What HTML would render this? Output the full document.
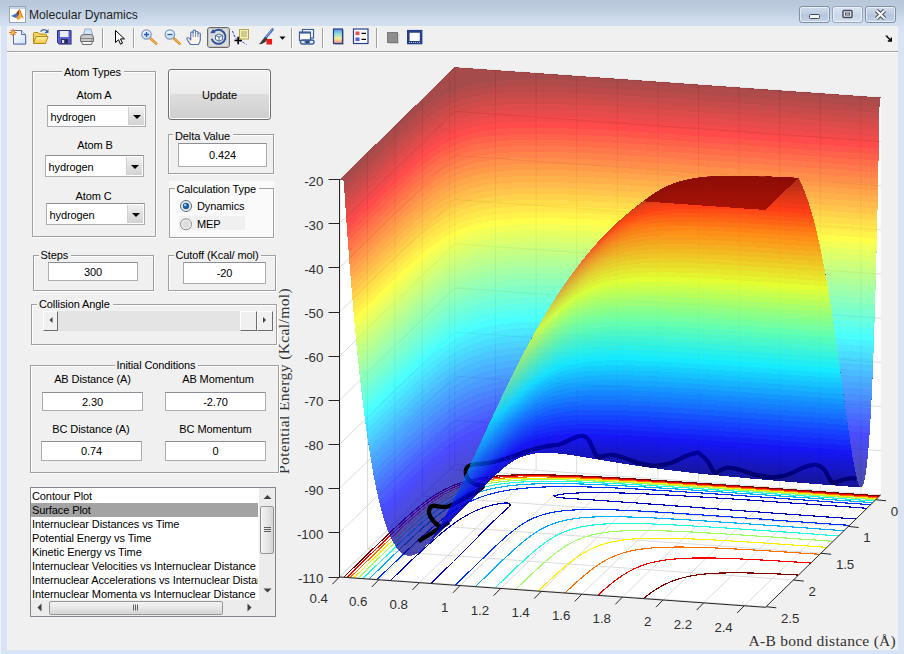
<!DOCTYPE html>
<html>
<head>
<meta charset="utf-8">
<title>Molecular Dynamics</title>
<style>
html,body{margin:0;padding:0;}
body{width:904px;height:654px;overflow:hidden;position:relative;background:#d8e4f3;box-shadow:inset 1px 0 0 #eef3fa;font-family:"Liberation Sans",sans-serif;font-size:11px;letter-spacing:-0.1px;color:#000;}
#titlebar{position:absolute;left:0;top:0;width:904px;height:26px;background:linear-gradient(#b7c6d9 0px,#bccbde 8px,#cbd9ea 18px,#d3e0f0 26px);}
#title{position:absolute;left:29px;top:7.500px;font-size:12.1px;color:#1e1e1e;white-space:nowrap;letter-spacing:0px;}
.wbtn{position:absolute;top:6px;height:15px;width:29px;border:1px solid #7f8fa8;border-radius:3px;background:linear-gradient(#d0dcec,#bccbe0 50%,#b4c4dc 51%,#c6d4e8);box-shadow:inset 0 0 0 1px rgba(255,255,255,.55);}
#content{position:absolute;left:7px;top:26px;width:891px;height:624px;background:#f0f0f0;overflow:hidden;}
#tbline{position:absolute;left:0;top:25px;width:891px;height:1px;background:#a0a0a0;}
#tbline2{position:absolute;left:0;top:26px;width:891px;height:1px;background:#ffffff;}
.abs{position:absolute;}
.panel{position:absolute;border:1px solid #a0a0a0;box-sizing:border-box;box-shadow:1px 1px 0 #fff,inset 1px 1px 0 #fff;}
.ptitle{position:absolute;top:-6px;background:#f0f0f0;padding:0 3px 0 2px;white-space:nowrap;line-height:13px;height:13px;z-index:2;}
.lbl{position:absolute;white-space:nowrap;text-align:center;line-height:13px;}
.edit{position:absolute;box-sizing:border-box;background:#fff;border:1px solid #abadb3;border-top-color:#8e8f95;text-align:center;white-space:nowrap;}
.combo{position:absolute;box-sizing:border-box;background:#fff;border:1px solid #abadb3;border-top-color:#8e8f95;height:22px;line-height:22.500px;padding-left:2.500px;white-space:nowrap;}
.combo i{position:absolute;right:1px;top:1px;width:15px;height:18px;background:linear-gradient(#f2f2f2,#e0e0e0 50%,#d2d2d2);border-left:1px solid #d0d0d0;}
.combo i:after{content:"";position:absolute;left:3.5px;top:7.5px;border:4px solid transparent;border-top:4px solid #000;border-bottom:0;}
#list div{height:14px;line-height:15px;white-space:nowrap;padding-left:1px;}
</style>
</head>
<body>
<div id="titlebar">
  <svg class="abs" style="left:9px;top:6px" width="18" height="18" viewBox="0 0 18 18">
    <rect x="0.5" y="0.5" width="16" height="16" fill="#fdfdfd" stroke="#9aa7ba"/>
    <rect x="1" y="1" width="15" height="2" fill="#c7d3e6"/>
    <path d="M2 10 L7 7.5 L9.5 9.5 L7 12 Z" fill="#3b6ec4"/>
    <path d="M7 7.5 L10.5 3 L12 7 L9.5 9.5 Z" fill="#7b3a1e"/>
    <path d="M10.500 3 C11.5 3 13 9 15 13 L12.5 11 L9.5 14 L7 12 L9.5 9.500 Z" fill="#e8792a"/>
    <path d="M10.5 3 C11.3 5 12 9 12.500 11 L9.5 14 L8.2 13 C10 11 10.5 7 10.5 3Z" fill="#f5b33a"/>
  </svg>
  <div id="title">Molecular Dynamics</div>
  <div class="wbtn" style="left:799px"><svg width="29" height="15"><rect x="9.5" y="7.5" width="10" height="4" rx="1" fill="#f4f4f4" stroke="#454a58"/></svg></div>
  <div class="wbtn" style="left:832px;background:linear-gradient(#d9e4f2,#cddaeb 50%,#c6d5e8 51%,#d6e2f1);border-color:#97a6bd"><svg width="29" height="15"><rect x="10" y="3.500" width="9" height="7" rx="1" fill="#e8e8e8" stroke="#454a58" stroke-width="1.4"/><rect x="12.5" y="6" width="4" height="2" fill="#fff" stroke="#454a58" stroke-width="1"/></svg></div>
  <div class="wbtn" style="left:865px"><svg width="29" height="15"><path d="M10.500 3.500l8 8M18.500 3.500l-8 8" stroke="#454a58" stroke-width="4.200" stroke-linecap="butt"/><path d="M10.500 3.500l8 8M18.500 3.500l-8 8" stroke="#f4f4f4" stroke-width="2.200" stroke-linecap="butt"/></svg></div>
</div>
<div id="content">
<div id="tbline"></div><div id="tbline2"></div>
<div id="pg" style="position:absolute;left:-7px;top:-26px;width:904px;height:654px">
<svg class="abs" style="left:0;top:0" width="904" height="654" viewBox="0 0 904 654" font-family="Liberation Sans, sans-serif">
<defs><clipPath id="cp"><rect x="7" y="53" width="891" height="597"/></clipPath></defs>
<g clip-path="url(#cp)">
<path d="M339.4 577 L454.8 464.5 L454.8 67.2 L339.4 179.7 Z" fill="#fff"/>
<path d="M454.8 464.5 L880.8 494.8 L880.8 97.5 L454.8 67.2 Z" fill="#fff"/>
<path d="M339.4 577 L765.4 607.3 L880.8 494.8 L454.8 464.5 Z" fill="#fff"/>
<path d="M339.4 577 L454.8 464.5 L454.8 67.2 M378.8 579.8 L495.5 467.3 L495.5 70 M419.4 582.7 L536.1 470.2 L536.1 72.9 M460 585.6 L576.7 473.1 L576.7 75.8 M500.6 588.5 L617.3 476 L617.3 78.7 M541.2 591.4 L657.9 478.9 L657.9 81.6 M581.8 594.2 L698.5 481.7 L698.5 84.4 M622.4 597.1 L739.1 484.6 L739.1 87.3 M663 600 L779.7 487.5 L779.7 90.2 M703.6 602.9 L820.3 490.4 L820.3 93.1 M744.2 605.8 L860.9 493.3 L860.9 96 M875.8 499.7 L449.8 469.4 L449.8 72.1 M848.3 526.4 L422.3 496.1 L422.3 98.8 M820.9 553.2 L394.9 522.9 L394.9 125.6 M793.5 580 L367.5 549.7 L367.5 152.4 M766 606.7 L340 576.4 L340 179.1 M339.4 577 L454.8 464.5 L880.8 494.8 M339.4 532.9 L454.8 420.4 L880.8 450.7 M339.4 488.7 L454.8 376.2 L880.8 406.5 M339.4 444.6 L454.8 332.1 L880.8 362.4 M339.4 400.4 L454.8 287.9 L880.8 318.2 M339.4 356.3 L454.8 243.8 L880.8 274.1 M339.4 312.1 L454.8 199.6 L880.8 229.9 M339.4 268 L454.8 155.5 L880.8 185.8 M339.4 223.8 L454.8 111.3 L880.8 141.6 M339.4 179.7 L454.8 67.2 L880.8 97.5" fill="none" stroke="#dcdcdc" stroke-width="1"/>
<path d="M867 508.3L862.7 508L858.4 507.6L854.1 507.3L849.9 507L845.6 506.7L841.3 506.4L837 506.1L832.7 505.8L828.4 505.5L824.1 505.2L819.9 504.9L815.6 504.6L811.3 504.3L807 504L802.7 503.7L798.4 503.5L794.1 503.2L789.8 502.9L785.6 502.6L781.3 502.3L777 502L772.7 501.7L768.4 501.4L764.1 501.1L759.8 500.8L755.5 500.5L751.2 500.2L746.9 499.9L742.6 499.7L738.3 499.4L734 499.1L729.7 498.8L725.4 498.5L721.1 498.2L716.8 498L712.5 497.7L708.1 497.4L703.8 497.1L699.5 496.9L695.2 496.6L690.9 496.3L686.5 496.1L682.2 495.8L677.9 495.6L673.5 495.3L669.2 495.1L664.8 494.9L660.5 494.6L656.1 494.4L651.7 494.2L647.9 494L643 493.8L638.6 493.6L634.1 493.4L629.7 493.3L625.3 493.1L620.8 493L616.4 492.8L613.4 492.8L609.6 492.7L605.1 492.6L600.5 492.6L596 492.6L591.3 492.6L586.7 492.7L582 492.8L577.2 493L572.3 493.3L567.3 493.6L563.2 494L560.2 494.4L556.6 495.1L554.1 495.8L556.6 497.3L560.8 497.8L565 498.1L569.3 498.4L573.6 498.7L577.9 499L582.2 499.3L586.5 499.6L590.8 499.8L595.1 500.1L599.4 500.4L603.7 500.7L608 501L612.3 501.3L616.6 501.6L620.8 501.9L625.1 502.2L629.4 502.5L633.7 502.8L638 503.1L642.2 503.5L646.5 503.8L650.8 504.1L655 504.4L659.3 504.7L663.6 505L667.9 505.3L672.1 505.7L676.4 506L680.7 506.3L684.9 506.6L689.2 506.9L693.5 507.2L697.8 507.5L702 507.9L706.3 508.2L710.6 508.5L714.8 508.8L719.1 509.1L723.4 509.4L727.7 509.7L731.9 510.1L736.2 510.4L740.5 510.7L744.8 511L749 511.3L753.3 511.6L757.6 511.9L761.9 512.2L766.1 512.5L770.4 512.9L774.7 513.2L779 513.5L783.2 513.8L787.5 514.1L791.8 514.4L796.1 514.7L800.3 515L804.6 515.3L808.9 515.6L813.2 515.9L817.4 516.3L821.7 516.6L826 516.9L830.3 517.2L834.6 517.5L838.8 517.8L843.1 518.1L847.4 518.4L851.7 518.7L855.9 519 M431.1 583.5L432.9 581.8L434.6 580.1L436.3 578.4L438 576.7L439.8 575L441.5 573.3L443.2 571.6L444.9 569.9L446.6 568.2L448.3 566.6L450 564.9L451.7 563.2L453.5 561.5L455.2 559.8L456.9 558.1L458.6 556.4L460.3 554.7L462 553L463.7 551.3L465.4 549.6L467 547.9L468.7 546.2L470.4 544.5L472.1 542.8L473.8 541.1L475.5 539.4L477.2 537.7L478.8 536L480.5 534.3L482.2 532.6L483.9 530.9L485.6 529.2L487.3 527.5L489 525.8L490.7 524.1L492.4 522.4L494.1 520.7L495.9 519L497.7 517.3L499.5 515.6L501.3 513.9L503.1 512.2L505 510.5L506.9 508.8L508.7 507.2L510.3 505.4L509.4 503.1L504.8 503L500.5 503.5L497.9 504L493.9 504.7L491.5 505.3L488 506.3L484.8 507.3L481.9 508.3L479.3 509.3L476.7 510.3L474.4 511.4L472.3 512.4L470.1 513.5L468.1 514.6L465.2 516.2L462.5 517.8L459.9 519.5L457.4 521.1L455 522.7L452.7 524.4L450.5 526.1L448.4 527.7L446.2 529.4L444.1 531.1L442.1 532.7L440.1 534.4L438.1 536.1L436.2 537.8L434.3 539.5L432.3 541.2L430.5 542.8L428.6 544.5L426.7 546.2L424.9 547.9L423 549.6L421.2 551.3L419.4 553L417.5 554.7L415.7 556.3L413.9 558L412.1 559.7L410.4 561.4L408.6 563.1L406.8 564.8L405 566.5L403.3 568.2L401.5 569.9L399.7 571.6L398 573.3L396.2 575L394.4 576.7L392.7 578.4L390.9 580.1L390.3 580.6" fill="none" stroke="#0000bf" stroke-width="1.15" shape-rendering="crispEdges"/>
<path d="M870.6 504.7L866.4 504.4L862.1 504.1L857.8 503.8L853.5 503.5L849.2 503.2L844.9 502.9L840.7 502.6L836.4 502.3L832.1 502L827.8 501.7L823.5 501.4L819.2 501.1L814.9 500.8L810.7 500.5L806.4 500.2L802.1 499.9L797.8 499.6L793.5 499.3L789.2 499L784.9 498.7L780.7 498.4L776.4 498.1L772.1 497.8L767.8 497.5L763.5 497.2L759.2 496.9L754.9 496.6L750.6 496.3L746.3 496L742.1 495.7L737.8 495.4L733.5 495.1L729.2 494.8L724.9 494.5L720.6 494.2L716.3 494L712 493.7L707.7 493.4L703.5 493.1L699.1 492.8L694.8 492.5L690.5 492.3L686.2 492L681.8 491.7L677.5 491.4L673.2 491.2L668.9 490.9L664.6 490.6L660.2 490.4L655.9 490.1L651.6 489.9L647.2 489.6L642.9 489.4L638.6 489.1L634.2 488.9L629.8 488.7L625.5 488.5L621.1 488.2L616.7 488L612.3 487.8L607.9 487.7L603.5 487.5L599.1 487.3L594.6 487.2L590.2 487L585.7 486.9L581.2 486.8L576.7 486.7L572.2 486.7L567.6 486.6L563 486.6L558.4 486.7L553.9 486.7L549 486.8L544.3 487L539.5 487.2L534.6 487.4L529.7 487.8L524.7 488.2L520.6 488.6L517.3 489L514.3 489.3L511.6 489.7L508.9 490.1L506.1 490.6L503.3 491.1L500.5 491.6L497.5 492.3L494.5 493L491.4 493.8L488.1 494.7L484.8 495.7L481.8 496.7L479 497.8L476.4 498.8L473.9 499.8L471.5 500.9L469.3 501.9L467.2 503L465.1 504.1L463.1 505.1L460.3 506.7L457.6 508.4L455.1 510L452.6 511.7L450.2 513.3L448 515L445.7 516.6L443.5 518.3L441.4 520L439.4 521.6L437.3 523.3L435.3 525L433.3 526.7L431.4 528.3L429.5 530L427.6 531.7L425.7 533.4L423.8 535.1L421.9 536.8L420.1 538.5L418.3 540.1L416.4 541.8L414.6 543.5L412.8 545.2L411 546.9L409.2 548.6L407.5 550.3L405.7 552L403.9 553.7L402.1 555.4L400.3 557.1L398.6 558.8L396.8 560.5L395 562.2L393.3 563.8L391.5 565.5L389.8 567.2L388 568.9L386.3 570.6L384.5 572.3L382.8 574L381 575.7L379.3 577.4L377.5 579.1L376.9 579.7 M455.3 585.2L457 583.5L458.7 581.8L460.5 580.2L462.2 578.5L463.9 576.8L465.7 575.1L467.4 573.4L469.1 571.7L470.9 570L472.6 568.3L474.4 566.6L476.1 564.9L477.8 563.2L479.6 561.5L481.3 559.8L483.1 558.1L484.8 556.4L486.6 554.7L488.4 553L490.1 551.3L491.9 549.6L493.7 547.9L495.5 546.2L497.3 544.6L499.1 542.9L501 541.2L502.8 539.5L504.7 537.8L506.7 536.1L508.6 534.4L510.7 532.8L512.7 531.1L514.9 529.4L517.1 527.8L519.4 526.1L521.9 524.5L524.5 522.8L527.3 521.2L529.3 520.1L531.5 519.1L533.8 518L536.3 517L539 516L542 515L545.4 514L549.2 513.1L552.7 512.3L555.5 511.8L558.3 511.4L560.9 511.1L565.3 510.6L568.6 510.3L573.6 510L578.4 509.7L583.1 509.6L587.8 509.5L592.4 509.5L597 509.5L601.5 509.6L606 509.7L610.5 509.8L614.9 509.9L619.3 510.1L623.8 510.3L628.1 510.5L632.5 510.7L636.9 510.9L641.2 511.1L645.6 511.4L649.9 511.6L654.3 511.9L658.6 512.1L662.9 512.4L667.2 512.7L671.5 512.9L675.9 513.2L680.2 513.5L684.5 513.8L688.8 514.1L693.1 514.4L697.4 514.7L701.6 514.9L705.9 515.2L710.2 515.5L714.5 515.8L718.8 516.1L723.1 516.4L727.4 516.7L731.7 517L736 517.3L740.2 517.6L744.5 517.9L748.8 518.2L753.1 518.5L757.4 518.8L761.7 519.1L765.9 519.4L770.2 519.8L774.5 520.1L778.8 520.4L783.1 520.7L787.3 521L791.6 521.3L795.9 521.6L800.2 521.9L804.5 522.2L808.7 522.5L813 522.8L817.3 523.1L821.6 523.4L825.9 523.7L830.2 524L834.4 524.3L838.7 524.6L843 524.9L847.3 525.2L849.4 525.4" fill="none" stroke="#0030ff" stroke-width="1.15" shape-rendering="crispEdges"/>
<path d="M872.8 502.6L868.5 502.3L864.3 502L860 501.7L855.7 501.4L851.4 501.1L847.1 500.8L842.8 500.5L838.6 500.2L834.3 499.9L830 499.5L825.7 499.2L821.4 498.9L817.1 498.6L812.9 498.3L808.6 498L804.3 497.7L800 497.4L795.7 497.1L791.4 496.8L787.1 496.5L782.9 496.2L778.6 495.9L774.3 495.6L770 495.3L765.7 495L761.4 494.7L757.1 494.4L752.9 494.1L748.6 493.8L744.3 493.5L740 493.2L735.7 493L731.4 492.7L728.4 492.5L725 492.2L720.7 491.9L716.4 491.6L712.1 491.3L707.8 491.1L703.5 490.8L699.2 490.5L694.9 490.2L690.6 489.9L686.3 489.6L682 489.4L677.7 489.1L673.3 488.8L669 488.5L664.7 488.2L660.4 488L656.1 487.7L651.8 487.4L647.4 487.2L643.1 486.9L638.8 486.7L634.4 486.4L630.1 486.2L625.7 486L621.4 485.7L617 485.5L612.6 485.3L608.3 485.1L603.9 484.9L599.5 484.7L595.1 484.5L590.6 484.3L586.7 484.2L581.8 484L577.3 483.9L572.8 483.8L568.3 483.7L563.8 483.6L559.2 483.6L554.7 483.6L550 483.6L545.4 483.7L540.7 483.7L536 483.9L532.8 484L528.8 484.2L523.9 484.5L519 484.8L515.3 485.2L511.8 485.5L508.6 485.9L506 486.3L503.3 486.6L500.6 487.1L497.8 487.6L494.9 488.1L492 488.7L489.1 489.4L485.9 490.2L482.6 491.1L479.3 492.1L475.9 493.3L473.1 494.3L470.5 495.3L468.1 496.4L465.8 497.4L463.6 498.5L461.5 499.6L459.5 500.6L457.5 501.7L454.8 503.3L452.8 504.5L450.4 506L448 507.7L445.6 509.3L443.3 511L441.1 512.7L438.9 514.3L436.8 516L434.8 517.6L432.7 519.3L430.7 521L428.7 522.7L426.8 524.4L424.8 526.1L422.9 527.7L421.1 529.4L419.2 531.1L417.3 532.8L415.5 534.5L413.7 536.2L411.8 537.9L410 539.6L408.5 541L406.4 542.9L404.6 544.6L402.8 546.3L401.1 548L399.3 549.7L397.5 551.4L395.8 553.1L394 554.8L392.2 556.5L390.5 558.2L388.7 559.9L386.9 561.6L385.2 563.3L383.4 565L381.7 566.7L379.9 568.4L378.2 570.1L376.4 571.7L374.7 573.4L372.9 575.1L371.2 576.8L369.4 578.5L368.9 579.1 M475.3 586.7L477 585L478.8 583.3L480.5 581.6L482.2 579.9L484 578.2L485.7 576.5L487.5 574.8L489.2 573.1L491 571.4L492.7 569.7L494.5 568L496.2 566.3L498 564.6L499.8 562.9L501.6 561.2L503.3 559.5L505.1 557.9L506.9 556.2L508.8 554.5L510.6 552.8L512.4 551.1L514.3 549.4L516.2 547.7L518.1 546L520.1 544.4L522 542.7L524.1 541L526.2 539.3L528.3 537.7L530.6 536L532.9 534.4L535.3 532.7L537.9 531.1L540.7 529.4L542.7 528.4L544.8 527.3L547 526.3L549.4 525.2L551.9 524.2L554.8 523.2L557.9 522.2L561.3 521.2L565.3 520.3L568.2 519.7L571 519.2L573.7 518.8L576.4 518.4L581.6 517.8L585.4 517.5L589.1 517.2L593.9 517L598.7 516.8L603.4 516.7L607.9 516.6L612.6 516.6L617.1 516.7L621.7 516.8L626.2 516.9L629.5 517L632.9 517.1L637.3 517.2L641.7 517.4L646.1 517.6L650.5 517.8L654.9 518L659.2 518.2L663.6 518.5L667.9 518.7L672.3 519L676.6 519.2L680.9 519.5L685.3 519.7L689.6 520L693.9 520.3L698.2 520.6L702.5 520.8L706.8 521.1L711.1 521.4L715.4 521.7L719.7 522L724 522.3L728.3 522.6L732.6 522.8L736.9 523.1L741.2 523.4L745.5 523.7L749.8 524L754 524.3L758.3 524.6L762.6 524.9L766.9 525.2L771.2 525.5L775.5 525.8L779.8 526.1L784 526.4L788.3 526.7L792.6 527L796.9 527.3L801.2 527.6L805.5 527.9L809.7 528.2L814 528.6L818.3 528.9L822.6 529.2L826.9 529.5L831.1 529.8L835.4 530.1L839.7 530.4L844 530.7" fill="none" stroke="#00afff" stroke-width="1.15" shape-rendering="crispEdges"/>
<path d="M874.5 501L870.2 500.7L865.9 500.4L861.6 500.1L857.3 499.8L853.1 499.5L848.8 499.2L844.5 498.9L840.2 498.5L835.9 498.2L831.6 497.9L827.4 497.6L823.1 497.3L818.8 497L814.5 496.7L810.2 496.4L805.9 496.1L801.7 495.8L797.4 495.5L793.1 495.2L788.8 494.9L784.5 494.6L780.2 494.3L775.9 494L771.7 493.7L767.4 493.4L763.1 493.1L758.8 492.8L754.5 492.5L750.2 492.2L745.9 491.9L741.6 491.6L737.4 491.3L733.1 491L728.8 490.7L724.5 490.4L720.2 490.2L715.9 489.9L711.6 489.6L707.3 489.3L703 489L698.7 488.7L694.4 488.4L690.1 488.1L685.8 487.8L681.5 487.6L677.2 487.3L672.9 487L668.6 486.7L664.3 486.4L660 486.2L655.6 485.9L651.3 485.6L647 485.4L642.7 485.1L638.8 484.9L634 484.6L629.7 484.3L625.3 484.1L621 483.9L616.6 483.6L612.3 483.4L607.9 483.2L603.5 483L599.2 482.8L594.8 482.6L590.4 482.4L585.9 482.2L582.4 482.1L579.3 482L574.8 481.8L570.4 481.7L565.9 481.6L561.4 481.5L556.9 481.4L552.3 481.4L547.7 481.4L543.1 481.4L539.6 481.4L536.1 481.5L533 481.6L529 481.7L524.2 481.9L519.3 482.2L514.4 482.6L509.7 483L506.7 483.3L503.1 483.7L500.1 484.1L497.4 484.5L494.8 484.9L490.4 485.7L487.9 486.3L484.5 487L482 487.7L478.5 488.6L475.3 489.6L472.3 490.6L469.5 491.6L466.9 492.7L464.4 493.7L462.1 494.7L459.9 495.8L457.8 496.9L455.7 497.9L453.8 499L451 500.6L448.4 502.3L445.8 503.9L443.4 505.5L441 507.2L438.8 508.9L436.6 510.5L434.4 512.2L432.3 513.9L430.3 515.5L428.2 517.2L426.2 518.9L424.3 520.6L422.4 522.2L420.4 523.9L418.6 525.6L416.7 527.3L414.8 529L413 530.7L411.1 532.4L409.3 534.1L407.5 535.7L405.7 537.4L403.9 539.1L402.1 540.8L400.3 542.5L398.5 544.2L396.7 545.9L395 547.6L393.2 549.3L391.4 551L389.6 552.7L388 554.2L386.1 556.1L384.4 557.8L382.6 559.4L380.9 561.1L379.1 562.8L377.4 564.5L375.6 566.2L373.9 567.9L372.1 569.6L370.4 571.3L368.6 573L366.9 574.7L365.1 576.4L363.4 578.1L362.8 578.7 M494.9 588.1L496.7 586.4L498.4 584.7L500.2 583L501.9 581.3L503.7 579.6L505.4 577.9L507.2 576.2L508.9 574.5L510.7 572.8L512.5 571.1L514.3 569.4L516 567.7L517.8 566L519.6 564.3L521.5 562.7L523.3 561L525.1 559.3L527 557.6L528.9 555.9L530.8 554.2L532.7 552.5L534.7 550.9L536.7 549.2L538.8 547.5L540.9 545.8L542.8 544.4L544.6 543.1L547 541.4L549.4 539.8L552 538.1L554.8 536.5L556.8 535.4L558.9 534.4L561 533.3L563.5 532.3L566 531.2L568.8 530.2L571.9 529.2L575.3 528.3L578.6 527.5L581.2 526.9L584.4 526.3L587.2 525.8L589.9 525.4L594.8 524.8L597.7 524.5L602.4 524.1L607 523.9L610 523.7L614.7 523.6L618.7 523.5L621.7 523.4L626.4 523.4L630.9 523.4L635.5 523.5L640 523.6L644.4 523.7L648.9 523.8L653.3 524L657.7 524.2L662.1 524.4L666.5 524.6L670.9 524.8L675.3 525L679.6 525.2L684 525.5L688.3 525.7L692.6 526L697 526.2L701.3 526.5L705.6 526.7L709.9 527L714.3 527.3L718.6 527.6L722.9 527.8L727.2 528.1L731.5 528.4L735.8 528.7L740.1 529L744.4 529.3L748.7 529.6L753 529.9L757.2 530.2L761.5 530.5L765.8 530.7L770.1 531L774.4 531.3L778.7 531.6L783 531.9L787.3 532.2L791.6 532.5L795.8 532.8L800.1 533.1L804.4 533.4L808.7 533.7L813 534L817.3 534.4L821.5 534.7L825.8 535L830.1 535.3L834.4 535.6L838.7 535.9" fill="none" stroke="#20ffdf" stroke-width="1.15" shape-rendering="crispEdges"/>
<path d="M875.8 499.7L871.5 499.4L867.2 499.1L863 498.8L858.7 498.5L854.4 498.2L850.1 497.9L845.8 497.5L841.5 497.2L837.3 496.9L833 496.6L828.7 496.3L824.4 496L820.1 495.7L815.8 495.4L811.6 495.1L807.3 494.8L803 494.5L798.7 494.2L794.4 493.9L790.1 493.6L785.9 493.3L781.6 493L777.3 492.7L773 492.4L768.7 492.1L764.4 491.8L760.1 491.5L755.9 491.2L751.6 490.9L747.3 490.6L743 490.3L738.7 490L734.4 489.7L730.1 489.4L725.8 489.1L721.5 488.8L717.3 488.5L713 488.2L708.7 488L704.4 487.7L700.1 487.4L695.8 487.1L691.5 486.8L687.2 486.5L682.9 486.2L678.6 485.9L674.3 485.6L670 485.4L665.7 485.1L661.4 484.8L657 484.5L652.7 484.3L648.4 484L644.1 483.7L639.8 483.5L635.4 483.2L631.1 482.9L626.8 482.7L622.4 482.4L618.1 482.2L613.7 482L609.4 481.7L605 481.5L600.6 481.3L596.3 481.1L591.9 480.9L587.5 480.7L583.1 480.5L578.6 480.4L574.2 480.2L569.8 480.1L565.3 479.9L560.8 479.8L556.3 479.7L551.8 479.7L548.4 479.6L544.9 479.6L540.3 479.6L535.7 479.7L532.6 479.7L528.7 479.8L523.9 480L520.9 480.1L516.6 480.3L511.7 480.7L507.7 481L504.1 481.3L500.7 481.7L497.6 482.1L494.8 482.5L492.1 482.9L488 483.6L485.1 484.2L482.1 484.9L479.1 485.6L475.9 486.5L472.6 487.4L469.2 488.6L466.4 489.6L463.7 490.6L461.5 491.5L458.9 492.7L456.7 493.7L454.6 494.8L452.5 495.9L450.6 497L447.8 498.6L445.1 500.2L442.6 501.8L440.2 503.5L437.8 505.1L435.6 506.8L433.4 508.5L431.2 510.1L429.1 511.8L427 513.5L425 515.2L423 516.8L421.1 518.5L419.1 520.2L417.2 521.9L415.3 523.6L413.5 525.2L411.6 526.9L409.7 528.6L407.9 530.3L406.1 532L404.3 533.7L402.5 535.4L400.7 537.1L398.9 538.8L397.1 540.5L395.3 542.2L393.5 543.8L391.8 545.5L390 547.2L388.2 548.9L386.5 550.6L384.7 552.3L382.9 554L381.2 555.7L379.4 557.4L377.7 559.1L375.9 560.8L374.2 562.5L372.4 564.2L370.7 565.9L368.9 567.6L367.2 569.3L365.4 571L363.7 572.7L361.9 574.4L360.2 576.1L358.4 577.7L357.9 578.3 M515.5 589.5L517.3 587.8L519 586.1L520.8 584.4L522.6 582.7L524.3 581.1L526.1 579.4L527.9 577.7L529.7 576L531.5 574.3L533.3 572.6L535.1 570.9L536.9 569.2L538.8 567.5L540.6 565.8L542.5 564.1L544.4 562.5L546.3 560.8L548.3 559.1L550.3 557.4L552.3 555.7L554.4 554.1L556.6 552.4L558.8 550.8L561.1 549.1L563.6 547.5L566.1 545.8L568.9 544.2L570.8 543.1L572.8 542L575 541L577.2 540L579.8 538.9L582.4 537.9L584.8 537.1L588.2 536L591.4 535.1L594.1 534.5L597.4 533.8L600.2 533.2L603 532.8L605.6 532.4L609.6 531.9L613.1 531.6L616 531.3L620.9 531L625.7 530.7L630.5 530.6L635.2 530.5L639.8 530.4L644.4 530.4L649 530.5L653.5 530.6L658 530.7L661.5 530.8L664.7 530.9L669.1 531L673.5 531.2L677.9 531.4L682.3 531.6L686.7 531.8L691.1 532L695.4 532.2L699.8 532.5L704.1 532.7L708.4 533L712.8 533.2L717.1 533.5L721.4 533.7L725.7 534L730.1 534.3L734.4 534.5L738.7 534.8L743 535.1L747.3 535.4L751.6 535.7L755.9 536L760.2 536.3L764.5 536.5L768.8 536.8L773.1 537.1L777.4 537.4L781.6 537.7L785.9 538L790.2 538.3L794.5 538.6L798.8 538.9L803.1 539.2L807.4 539.5L811.7 539.8L815.9 540.1L820.2 540.4L824.5 540.7L828.8 541L833.1 541.3" fill="none" stroke="#9fff60" stroke-width="1.15" shape-rendering="crispEdges"/>
<path d="M876.9 498.6L872.7 498.3L868.4 498L864.1 497.7L859.8 497.3L855.5 497L851.2 496.7L847 496.4L842.7 496.1L838.4 495.8L834.1 495.5L829.8 495.2L825.6 494.9L821.3 494.6L817 494.3L812.7 494L808.4 493.7L804.1 493.4L799.9 493.1L795.6 492.8L791.3 492.5L787 492.2L782.7 491.9L778.4 491.6L774.1 491.3L769.9 491L765.6 490.7L761.3 490.4L757 490.1L752.7 489.8L748.4 489.5L744.1 489.2L739.9 488.9L735.6 488.6L731.3 488.3L727 488L722.7 487.7L718.4 487.4L714.1 487.1L709.8 486.8L705.5 486.5L701.2 486.2L696.9 485.9L692.7 485.7L689.7 485.5L686.2 485.2L681.9 484.9L677.6 484.6L673.3 484.4L669 484.1L664.7 483.8L660.4 483.5L656.1 483.2L651.8 483L647.4 482.7L643.1 482.4L638.8 482.2L634.5 481.9L630.2 481.6L625.8 481.4L621.5 481.1L617.1 480.9L612.8 480.7L608.4 480.4L604.1 480.2L599.7 480L595.3 479.8L591 479.5L587.1 479.4L582.2 479.2L577.8 479L573.3 478.8L568.9 478.7L564.4 478.5L560 478.4L555.5 478.3L551 478.2L546.4 478.2L541.8 478.2L537.3 478.2L532.6 478.2L528.9 478.3L525.6 478.3L522.6 478.4L518.4 478.6L513.6 478.8L508.7 479.1L504 479.5L501.1 479.8L497.1 480.2L494.1 480.6L491.2 481L488.6 481.5L485 482.1L482.1 482.7L479.4 483.2L476.1 484L472.9 484.9L470.4 485.6L467.3 486.6L464.4 487.6L461.7 488.6L459.2 489.7L456.8 490.7L454.5 491.8L452.4 492.8L450.3 493.9L448.3 495L445.5 496.6L442.8 498.2L440.3 499.9L437.8 501.5L435.4 503.2L433.2 504.8L430.9 506.5L428.8 508.1L426.9 509.6L424.6 511.5L422.6 513.2L420.6 514.8L418.6 516.5L416.7 518.2L414.8 519.9L412.9 521.6L411 523.3L409.1 524.9L407.3 526.6L405.4 528.3L403.6 530L401.8 531.7L400 533.4L398.2 535.1L396.4 536.8L394.6 538.5L392.8 540.2L391.1 541.9L389.3 543.5L387.5 545.2L385.7 546.9L384 548.6L382.2 550.3L380.5 552L378.7 553.7L377 555.4L375.2 557.1L373.4 558.8L371.7 560.5L369.9 562.2L368.2 563.9L366.4 565.6L364.7 567.3L363 569L361.2 570.7L359.5 572.4L357.7 574.1L356 575.8L354.2 577.4L353.6 578 M538.3 591.1L540.1 589.5L541.9 587.8L543.6 586.1L545.4 584.4L547.2 582.7L549 581L550.8 579.3L552.7 577.6L554.5 575.9L556.4 574.2L558.2 572.5L560.1 570.9L562.1 569.2L564 567.5L566 565.8L568 564.1L570.1 562.5L572.3 560.8L574.5 559.1L576.8 557.5L579.2 555.8L581.7 554.2L584.4 552.6L587.2 551L589.3 549.9L591.4 548.8L593.7 547.8L596.2 546.7L598.8 545.7L601.7 544.7L604.9 543.7L608.5 542.8L611.9 542L614.7 541.4L617.7 540.9L620.4 540.4L623.1 540L628.3 539.4L632.8 539L635.8 538.8L640.7 538.5L645.5 538.3L650.2 538.2L654.6 538.2L659.5 538.1L663.1 538.2L666.3 538.2L670.8 538.3L674.2 538.3L677.6 538.4L682 538.6L686.5 538.7L689.7 538.8L693.1 539L697.5 539.2L701.9 539.4L706.2 539.6L710.6 539.8L715 540L719.3 540.3L723.7 540.5L728 540.8L732.3 541L736.6 541.3L741 541.6L745.3 541.8L749.6 542.1L753.9 542.4L758.2 542.7L762.5 542.9L766.8 543.2L771.1 543.5L775.4 543.8L779.7 544.1L784 544.4L788.3 544.7L792.6 545L796.9 545.2L799.7 545.4L803.3 545.7L807.6 546L811.9 546.3L816.2 546.6L820.5 546.9L824.8 547.2L826.9 547.3" fill="none" stroke="#ffef00" stroke-width="1.15" shape-rendering="crispEdges"/>
<path d="M877.9 497.6L873.7 497.3L869.4 497L865.1 496.7L860.8 496.4L856.5 496.1L852.3 495.8L848 495.5L843.7 495.2L839.4 494.9L835.1 494.5L830.8 494.2L826.6 493.9L822.3 493.6L818 493.3L813.7 493L809.4 492.7L805.1 492.4L800.9 492.1L796.6 491.8L792.3 491.5L788 491.2L783.7 490.9L779.4 490.6L775.2 490.3L770.9 490L767.2 489.8L762.3 489.4L758 489.1L753.7 488.8L749.4 488.5L745.2 488.2L740.9 487.9L736.6 487.6L732.3 487.3L728 487L723.7 486.7L719.4 486.4L715.1 486.1L710.8 485.8L706.5 485.5L702.3 485.2L698 485L693.7 484.7L689.4 484.4L685.1 484.1L680.8 483.8L676.5 483.5L672.2 483.2L667.9 482.9L663.6 482.7L659.3 482.4L654.9 482.1L650.6 481.8L646.3 481.6L642 481.3L637.7 481L633.4 480.7L629 480.5L625.1 480.3L620.4 480L616 479.7L611.7 479.5L607.3 479.3L603 479L598.6 478.8L594.3 478.6L590.1 478.4L585.5 478.2L581.1 478L576.7 477.8L572.3 477.6L567.8 477.5L563.4 477.3L558.9 477.2L555.1 477.1L549.9 477L545.4 476.9L540.9 476.9L536.3 476.9L531.7 476.9L527.4 476.9L522.3 477.1L517.6 477.2L512.7 477.4L507.9 477.7L502.9 478.1L498.2 478.5L495.2 478.8L491.8 479.3L488.9 479.7L486.2 480.1L481.6 480.9L479.1 481.4L475.8 482.1L473.1 482.8L469.5 483.7L466.3 484.7L463.3 485.7L460.5 486.7L457.9 487.8L455.4 488.8L453.1 489.9L450.9 490.9L448.8 492L446.8 493L444.8 494.1L442 495.7L439.6 497.3L437.7 498.5L435.3 500.1L432.9 501.8L430.6 503.4L428.4 505.1L426.2 506.7L424.1 508.4L422.1 510.1L420 511.8L418 513.4L416.1 515.1L414.1 516.8L412.2 518.5L410.3 520.2L408.5 521.9L406.6 523.5L404.7 525.2L402.9 526.9L401.1 528.6L399.3 530.3L397.5 532L395.7 533.7L393.9 535.4L392.1 537.1L390.3 538.8L388.5 540.5L386.7 542.2L385 543.8L383.2 545.5L381.4 547.2L379.7 548.9L377.9 550.6L376.2 552.3L374.4 554L372.7 555.7L370.9 557.4L369.1 559.1L367.4 560.8L365.6 562.5L363.9 564.2L362.2 565.9L360.4 567.6L358.7 569.3L356.9 571L355.2 572.7L353.4 574.4L351.7 576.1L349.9 577.7 M564.8 593L566.6 591.3L568.4 589.7L570.3 588L572.1 586.3L573.9 584.6L575.8 582.9L577.7 581.2L579.6 579.5L581.5 577.8L583.5 576.2L585.3 574.6L587.5 572.8L589.6 571.1L591.8 569.5L594 567.8L596.2 566.3L598.8 564.5L601.3 562.9L604 561.2L606.9 559.6L609 558.6L611.2 557.5L613.5 556.5L616 555.4L618.7 554.4L621.7 553.4L625 552.4L628.6 551.5L632.7 550.6L635.9 550L638.7 549.5L641.4 549.1L646.3 548.5L649.2 548.2L653.8 547.8L656.7 547.6L661.5 547.4L666.3 547.2L669.6 547.1L673.3 547.1L677 547L680.2 547L684.8 547.1L689.3 547.1L693.8 547.2L698.3 547.3L702.7 547.5L707.2 547.6L711.6 547.8L716 548L720.4 548.2L724.8 548.4L729.1 548.6L733.5 548.9L737.8 549.1L742.2 549.3L746.5 549.6L750.8 549.8L755.2 550.1L759.5 550.4L763.8 550.6L768.1 550.9L772.4 551.2L776.8 551.5L781.1 551.7L785.4 552L789.7 552.3L794 552.6L798.3 552.9L802.6 553.2L806.9 553.5L811.1 553.7L815.4 554L819.7 554.3" fill="none" stroke="#ff7000" stroke-width="1.15" shape-rendering="crispEdges"/>
<path d="M878.8 496.7L874.6 496.4L870.3 496.1L866 495.8L861.7 495.5L857.4 495.2L853.1 494.9L848.9 494.6L844.6 494.3L840.3 494L836 493.7L831.7 493.4L827.4 493.1L823.2 492.8L818.9 492.5L814.6 492.2L810.3 491.9L806 491.6L801.7 491.3L797.5 491L793.2 490.7L788.9 490.3L784.6 490L780.3 489.7L776 489.4L771.8 489.1L767.5 488.8L763.2 488.5L758.9 488.2L754.6 487.9L750.3 487.6L746 487.3L741.8 487L737.5 486.7L733.2 486.4L728.9 486.1L724.6 485.8L720.3 485.5L716 485.3L711.7 485L707.4 484.7L703.2 484.4L698.9 484.1L694.6 483.8L690.3 483.5L686 483.2L681.7 482.9L677.4 482.6L673.1 482.3L668.8 482L664.5 481.8L660.2 481.5L655.9 481.2L652 481L647.3 480.6L642.9 480.4L638.6 480.1L634.3 479.8L630 479.6L625.6 479.3L621.3 479.1L617 478.8L612.6 478.6L608.3 478.3L604 478.1L600.3 477.9L597.4 477.7L593 477.5L588.7 477.3L584.3 477.1L579.9 476.9L575.5 476.7L571.1 476.5L566.6 476.4L562.2 476.2L558.3 476.1L553.3 476L548.8 475.9L544.3 475.8L539.7 475.8L536 475.7L532.9 475.7L528.2 475.8L523.6 475.8L518.9 475.9L515.1 476.1L511.7 476.2L506.8 476.5L501.9 476.8L497.1 477.2L494.3 477.5L490.5 478L487.5 478.4L484.7 478.8L482.2 479.2L478 480L475.3 480.5L472 481.3L469.5 481.9L466 482.9L462.9 483.9L460 484.9L457.2 485.9L454.8 486.9L452.3 488L450 489L447.8 490.1L445.7 491.1L443.7 492.2L440.9 493.8L438.2 495.5L435.6 497.1L433.2 498.7L430.8 500.4L428.5 502.1L426.3 503.7L424.1 505.4L422 507.1L419.9 508.7L417.9 510.4L415.9 512.1L413.9 513.8L412 515.4L410.1 517.1L408.2 518.8L406.3 520.5L404.5 522.2L402.6 523.9L400.8 525.6L398.9 527.3L397.1 528.9L395.3 530.6L393.5 532.3L391.7 534L389.9 535.7L388.2 537.4L386.4 539.1L384.6 540.8L382.8 542.5L381.1 544.2L379.3 545.9L377.6 547.6L375.8 549.3L374 551L372.3 552.6L370.5 554.3L368.8 556L367 557.7L365.3 559.4L363.5 561.1L361.8 562.8L360 564.5L358.3 566.2L356.5 567.9L354.8 569.6L353 571.3L351.3 573L349.6 574.7L347.8 576.4L346.7 577.5 M597.8 595.4L599.6 593.7L601.5 592L603.4 590.3L605.4 588.6L607.3 587L609.3 585.3L611.4 583.6L613.5 581.9L615.7 580.3L617.9 578.6L620.3 577L622.7 575.3L625.3 573.7L628 572.1L629.9 571L632 569.9L634.1 568.8L636.4 567.8L638.9 566.8L641.5 565.7L644.4 564.7L646.8 564L649.2 563.2L652.9 562.3L656.1 561.6L659 561L661.8 560.6L664.5 560.1L667.1 559.8L671 559.3L674.6 559L678.7 558.7L682.3 558.5L687.1 558.2L691.8 558.1L695.1 558L698.9 558L702.8 558L708 558L712.5 558L717.1 558.1L721.5 558.3L725.6 558.4L730.4 558.5L734.9 558.7L739.3 558.9L743.7 559.1L748 559.3L752.4 559.5L756.8 559.7L761.1 560L765.5 560.2L769.8 560.5L774.1 560.7L778.5 561L782.8 561.2L787.1 561.5L791.4 561.8L795.7 562L800.1 562.3L804.4 562.6L808.7 562.9L810.8 563" fill="none" stroke="#ff0000" stroke-width="1.15" shape-rendering="crispEdges"/>
<path d="M879.6 495.9L875.4 495.6L871.1 495.3L866.8 495L862.5 494.7L858.2 494.4L854 494.1L849.7 493.8L845.4 493.5L841.1 493.2L836.8 492.9L833.9 492.7L830.4 492.4L826.1 492.1L821.8 491.8L817.6 491.5L813.3 491.2L809 490.9L804.7 490.6L800.4 490.3L796.1 490L791.9 489.7L787.6 489.4L783.3 489.1L779 488.8L774.7 488.5L770.4 488.2L766.1 487.9L761.9 487.6L757.6 487.3L753.3 487L749 486.7L744.7 486.4L740.4 486.1L736.1 485.8L731.9 485.5L727.6 485.2L723.3 484.9L719 484.6L714.7 484.3L710.4 484L706.1 483.7L701.8 483.4L697.5 483.1L693.2 482.8L688.9 482.5L684.7 482.3L680.4 482L676.1 481.7L671.8 481.4L667.5 481.1L663.2 480.8L658.9 480.5L654.5 480.3L650.2 480L645.9 479.7L641.6 479.4L637.3 479.2L633 478.9L628.7 478.6L624.3 478.4L620 478.1L615.7 477.8L611.3 477.6L607 477.4L602.6 477.1L598.3 476.9L593.9 476.7L589.6 476.4L586.1 476.3L583 476.1L578.6 475.9L574.2 475.7L569.8 475.6L565.4 475.4L560.9 475.2L556.5 475.1L552 475L547.5 474.9L543 474.8L539.2 474.7L536.2 474.7L531.6 474.7L527 474.7L522.5 474.8L517.7 474.9L512.9 475L508.1 475.2L503.2 475.5L498.2 475.9L493.3 476.3L490.6 476.6L486.9 477.1L484 477.5L481.3 477.9L477 478.7L474.2 479.2L471.1 479.9L468.3 480.6L464.9 481.5L461.6 482.5L458.5 483.6L455.7 484.6L453.1 485.6L450.7 486.7L448.4 487.7L446.2 488.8L444.1 489.8L442.1 490.9L440.1 492L437.4 493.6L434.8 495.2L432.2 496.9L429.8 498.5L427.5 500.2L425.2 501.8L423.1 503.5L420.9 505.2L418.8 506.8L416.8 508.5L414.8 510.2L412.8 511.9L410.8 513.5L408.9 515.2L407 516.9L405.1 518.6L403.3 520.3L401.4 522L399.6 523.7L397.7 525.3L395.9 527L394.1 528.7L392.3 530.4L390.5 532.1L388.7 533.8L386.9 535.5L385.1 537.2L383.4 538.9L381.6 540.6L379.8 542.3L378.1 544L376.3 545.7L374.5 547.4L372.8 549L371 550.7L369.3 552.4L367.5 554.1L365.8 555.8L364 557.5L362.3 559.2L360.5 560.9L358.8 562.6L357 564.3L355.3 566L353.5 567.7L351.8 569.4L350 571.1L348.3 572.8L346.6 574.5L344.8 576.2L343.7 577.3 M643.3 598.6L645.4 596.9L647.6 595.3L649.9 593.6L652.2 592L654.6 590.3L657.2 588.7L659.7 587.2L661.8 586L663.9 584.9L666 583.9L668.3 582.8L670.7 581.8L673.2 580.8L676.1 579.7L679.3 578.7L682.7 577.8L686.4 576.9L689.3 576.2L692.1 575.7L694.9 575.3L697.6 574.9L702.2 574.3L705.4 574L709.6 573.6L712.9 573.4L717.8 573.1L722.5 573L727.2 572.9L731.9 572.8L736.5 572.8L741 572.8L745.6 572.9L750.1 573L754.6 573.1L759 573.2L763.4 573.4L767.9 573.6L772.3 573.7L776.7 573.9L781 574.1L785.4 574.4L789.8 574.6L794.1 574.8L797.6 575L798.5 575.1" fill="none" stroke="#800000" stroke-width="1.15" shape-rendering="crispEdges"/>
<!--TRAJ_UNDER-->
<g opacity="0.70" shape-rendering="crispEdges">
<path d="M454.8 67.2L880.8 97.5L879.8 98.5L879.6 99.8L877.7 198.9L875.8 278.2L873.8 344.9L871.6 398.4L869.5 434.5L868.4 450L867.2 462.4L866 472L864.7 479.7L863.4 484.6L862.8 486L862.1 487L861.1 487.5L792.2 482.1L745.7 478.1L707.2 474.4L673.3 470.7L644.2 466.8L618.9 463L577.6 456L563.6 454L556.3 453.3L548.8 452.8L542.5 452.8L535.3 453.4L530.8 454.2L526.9 455.1L522.5 456.5L518.7 458.2L514.4 460.4L510.7 462.7L506.6 465.6L502.2 469.2L496.3 474.5L489.6 481L459.4 512.4L438 534L423.1 548.9L418.8 552.5L416.1 554.2L413.4 555.3L410.7 555.9L408.5 555.9L405.8 555.3L403.7 554.4L401.5 552.9L399.4 551L397.2 548.5L395 545.4L391.3 538.5L387.5 529.5L383.7 518.2L379.9 504.4L376.7 490.3L373.4 474L370.2 455.2L366.4 430L363.2 405.2L359.4 372.4L356.1 340.5L352.9 304.9L349.7 265.3L346.4 221.3L343.7 181.1L343.2 180L339.4 179.7ZM651.7 195L635.7 207L624.8 215.9L637.8 205.2L644.7 200Z" fill="#00008f"/>
<path d="M454.8 67.2L880.8 97.5L879.8 98.5L879.6 99.8L878 185L876.3 261.5L874.5 323.1L872.6 375.5L870.9 412.7L868.9 442.7L867 463.8L866 472L865 478.4L765.4 471.6L725.9 469.1L694.7 467.3L671.6 466.3L653.2 465.9L647.2 466.1L645.4 466.4L645.4 466.5L645.6 466.7L646.1 466.9L650 467.6L624.7 463.9L579.4 456.3L563.6 454L554.5 453.1L547 452.8L540.5 452.9L533.7 453.6L529.5 454.5L524.8 455.7L520.5 457.3L516.9 459L512.9 461.3L509.3 463.6L505.3 466.6L501.6 469.7L496.3 474.5L490.2 480.5L452 520L430.5 541.6L420.8 550.9L448.1 523.4L456.9 514L463.7 506.3L468.4 500.3L470.6 496.4L471 494.8L470.8 493.9L470.2 493.3L469.2 493.1L467.2 493.4L464.6 494.2L458.7 497.2L451.9 501.5L444.6 507L436.7 513.5L425.7 523.2L414.3 533.7L397.8 549.3L396.1 547L394 543.6L390.2 536.2L386.4 526.6L383.2 516.4L379.4 502.2L376.1 487.8L372.9 471L369.6 451.9L365.9 426.1L362.6 400.8L359.4 372.4L356.1 340.5L352.9 304.9L349.7 265.3L346.4 221.3L343.7 181.1L343.2 180L339.4 179.7ZM651.7 195L635.7 207L624.8 215.9L637.8 205.2L644.7 200Z" fill="#00009f"/>
<path d="M454.8 67.2L880.8 97.5L879.8 98.5L879.6 99.8L878.2 177.9L876.6 249.9L874.8 313.8L873 364.6L871.4 401.4L869.8 430L868.1 453.4L866.1 471.4L729.3 462.1L685.4 459.4L655.5 457.9L627.2 456.9L607.6 456.9L600 457.3L595.7 457.9L595.1 458.3L595.3 458.7L598.2 459.5L573.9 455.4L558.2 453.4L550.7 452.9L544.8 452.8L538.7 453L533.7 453.6L526.9 455.1L523.6 456.2L519.6 457.8L516.1 459.5L512.9 461.3L506.6 465.6L500.4 470.7L492.9 477.7L484.8 486L465.8 505.8L477.6 493.3L485.3 484.3L487.6 481.3L488.9 479.1L489.6 477.3L489.5 476L489 475.3L488.3 474.9L486.3 474.6L483 475L478.3 476.2L473.5 478L469.1 480L463.9 482.8L459.2 485.7L453.4 489.7L448.4 493.5L441.9 498.7L434.3 505.2L417.6 520.3L393.7 543.1L390.2 536.2L386.4 526.6L383.2 516.4L379.9 504.4L376.7 490.3L374 476.9L370.7 458.5L368 441.3L364.8 418L361.5 391.7L358.3 362.1L355.1 329L351.8 292.1L349.1 258.2L343.7 181.1L343.2 180L339.4 179.7ZM651.7 195L635.7 207L624.8 215.9L637.8 205.2L644.7 200Z" fill="#0000af"/>
<path d="M454.8 67.2L880.8 97.5L879.8 98.5L879.6 99.8L878.2 177.9L876.6 249.9L874.9 309L873.3 356.9L871.9 392.2L870.3 422.9L868.7 446.5L866.9 464.7L757.9 457.2L704.5 453.7L659.2 451.1L626.4 449.7L599.7 449.1L580.6 449.5L568.3 450.3L563.5 450.8L559.9 451.5L558 452.1L557.6 452.4L557.6 452.7L558.8 453.3L562 453.8L552.8 453L546.8 452.8L540.3 452.9L533.5 453.7L528.2 454.8L523.5 456.2L518.5 458.3L513.7 460.8L508.6 464.1L504 467.6L498.6 472.3L493 477.7L505.3 465.8L507.6 463.2L508.4 461.9L508.4 461.3L507.9 460.7L506.6 460.3L503.2 460.2L497.9 460.8L492.9 461.8L486.5 463.5L481.2 465.2L476.3 467.2L470.6 469.9L465.4 472.8L459 476.7L452.7 481.1L444.6 487.4L436.6 494L418.9 510L390.6 537.1L387.5 529.5L384.2 520L381 508.6L378.3 497.6L375.1 482.5L372.3 468L369.6 451.9L366.9 433.8L363.7 409.6L361 387L357.8 356.9L355.1 329L351.8 292.1L349.1 258.2L343.7 181.1L343.2 180L339.4 179.7ZM651.7 195L635.7 207L624.8 215.9L637.8 205.2L644.7 200Z" fill="#0000bf"/>
<path d="M454.8 67.2L880.8 97.5L879.8 98.5L879.6 99.8L878.2 177.9L876.7 243.9L875.1 304.1L873.5 353L872.2 385.7L870.7 415.3L869.2 438.7L867.6 458.2L765.3 451.1L702.8 446.9L654.3 444.1L620.1 442.6L589.9 442L578.1 442L566 442.4L555.3 443L545.5 443.9L535.8 445L523.7 446.7L512 448.6L503.4 450.3L495.7 452.1L488.3 454.2L481 456.8L474.8 459.5L467.5 463.2L461.6 466.6L456.2 470.2L449.3 475.2L443.1 480.1L434.2 487.7L416.2 504.1L388 531L384.8 521.7L382.1 512.6L379.4 502.2L376.7 490.3L374 476.9L371.3 461.8L366.4 430L363.2 405.2L360.5 382.2L357.2 351.5L354.5 323.2L349.1 258.2L343.7 181.1L343.2 180L339.4 179.7ZM651.7 195L635.7 207L624.8 215.9L637.8 205.2L644.7 200Z" fill="#0000cf"/>
<path d="M454.8 67.2L880.8 97.5L879.8 98.5L879.6 99.8L876.8 237.8L875.4 294L873.8 344.9L872.5 379L871.1 407.1L869.7 432.3L868.2 451.8L758 444.1L696.5 440L657.1 437.7L618.7 435.9L588.8 435.1L575.7 435.1L563.7 435.3L553 435.8L541.8 436.6L530.3 437.8L520.3 439.1L510.1 440.8L502 442.5L493.6 444.6L486.5 446.9L479.6 449.4L473.2 452.3L467 455.5L459.6 459.9L453.7 464L447 469L440.3 474.4L433.4 480.3L415.9 496.3L385.9 525L383.2 516.4L380.5 506.6L377.8 495.3L375.1 482.5L372.3 468L370.2 455.2L365.3 422.1L362.1 396.3L359.4 372.4L356.7 346L354 317.2L348.6 251.1L343.7 181.1L343.2 180L339.4 179.7ZM651.7 195L635.7 207L624.8 215.9L637.8 205.2L644.7 200Z" fill="#0000df"/>
<path d="M454.8 67.2L880.8 97.5L879.8 98.5L879.6 99.8L876.8 237.8L875.4 294L873.9 340.7L871.4 401.4L870.1 425.4L868.7 445.4L700.7 433.8L656.5 431.2L616.3 429.2L585.5 428.4L571.8 428.4L559.5 428.6L548.7 429L537.6 429.8L528.1 430.7L517.4 432.1L507.5 433.9L499.6 435.6L491.5 437.7L484.7 440L477.8 442.6L471 445.8L464.4 449.3L458.1 453.3L452.1 457.4L444.7 463L437.6 468.8L430.7 474.8L411.7 492.4L383.9 519L381.5 510.7L378.8 500L376.1 487.8L374 476.9L369.1 448.4L364.8 418L362.1 396.3L359.4 372.4L356.7 346L354 317.2L348.6 251.1L343.7 181.1L343.2 180L339.4 179.7ZM651.7 195L635.7 207L624.8 215.9L637.8 205.2L644.7 200Z" fill="#0000ef"/>
<path d="M454.8 67.2L880.8 97.5L879.8 98.5L879.6 99.8L877 231.6L875.5 288.8L874.1 336.4L871.7 395.3L870.6 417.9L869.2 439.1L761.5 431.6L692 426.9L650.6 424.4L611.7 422.6L581.4 421.8L556.9 422L546.1 422.4L535.1 423.1L525.1 424.1L515.5 425.4L507 426.8L498.2 428.7L490.2 430.9L483.5 433.1L477.2 435.6L470.6 438.6L464.1 442.1L457.8 445.9L452 449.9L444.9 455.3L431.4 466.6L411.7 484.7L382.2 513L379.9 504.4L377.2 492.8L372.9 471L368.6 444.9L364.2 413.8L361.5 391.7L358.8 367.3L356.1 340.5L353.4 311.1L348.6 251.1L343.7 181.1L343.2 180L339.4 179.7ZM651.7 195L635.7 207L624.8 215.9L637.8 205.2L644.7 200Z" fill="#0000ff"/>
<path d="M454.8 67.2L880.8 97.5L879.8 98.5L879.6 99.8L877 231.6L875.7 283.6L874.2 332.1L872 389L869.6 432.8L761.3 425.2L689.9 420.4L648.2 417.9L613.4 416.2L581.7 415.3L568.1 415.2L555.9 415.4L543.4 415.9L532.3 416.6L523.2 417.5L514 418.7L505.6 420.1L497.4 421.9L489.4 424L481.6 426.7L475 429.4L468.4 432.5L461.9 436.1L455.4 440.2L449 444.8L443.4 449L436 455.2L428.8 461.5L410.3 478.5L380.6 507.1L376.1 487.8L371.8 464.9L367.5 437.6L363.7 409.6L361 387L358.3 362.1L353.4 311.1L348.6 251.1L343.7 181.1L343.2 180L339.4 179.7ZM651.7 195L635.7 207L624.8 215.9L637.8 205.2L644.7 200Z" fill="#0010ff"/>
<path d="M454.8 67.2L880.8 97.5L879.8 98.5L879.6 99.8L877.4 212.3L875.2 299.1L872.8 371.9L871.4 401.4L870 426.6L770.7 419.6L692.6 414.3L648.1 411.6L612.3 409.8L578.9 408.9L565.2 408.8L553 409L542.3 409.3L531.3 410L521.1 411L512.1 412.2L503.9 413.6L495.6 415.5L487.8 417.6L481.1 419.9L474.4 422.6L467.6 425.8L460.9 429.6L454.2 433.8L447.8 438.4L442 442.9L428.2 454.7L408.6 472.8L379.1 501.1L376.7 490.3L374 476.9L369.1 448.4L364.2 413.8L359.9 377.3L355.6 334.8L351.8 292.1L347.5 236.5L343.7 181.1L343.2 180L339.4 179.7ZM651.7 195L635.7 207L624.8 215.9L637.8 205.2L644.7 200Z" fill="#0020ff"/>
<path d="M454.8 67.2L880.8 97.5L879.8 98.5L879.6 99.8L877.6 205.7L875.4 294L873 364.6L871.7 395.3L870.4 420.3L700.4 408.6L650.3 405.5L607.8 403.3L577.7 402.5L564.1 402.4L551.9 402.5L541.2 402.9L530.2 403.6L520.3 404.5L511.2 405.7L503.6 407L495.6 408.7L487.6 410.8L480.9 413.1L474.1 415.8L467.4 418.9L460.8 422.6L454.4 426.6L448.3 430.9L440.9 436.6L434.4 442L426.2 449.1L408 466L377.7 495.1L375.1 482.5L372.9 471L368 441.3L363.7 409.6L359.4 372.4L355.1 329L351.3 285.6L347.5 236.5L343.7 181.1L343.2 180L339.4 179.7ZM651.7 195L635.7 207L624.8 215.9L637.8 205.2L644.7 200Z" fill="#0030ff"/>
<path d="M454.8 67.2L880.8 97.5L879.8 98.5L879.6 99.8L877.6 205.7L875.5 288.8L873.2 360.8L870.8 414.2L768.2 406.9L689.4 401.6L644.2 398.9L608.2 397.1L578 396.1L562.9 396L550.7 396.1L540 396.5L528.4 397.2L518.2 398.2L509.4 399.3L501.7 400.7L493.4 402.5L485.2 404.8L478.7 407.1L472.1 409.8L465 413.3L459.2 416.6L452.8 420.7L446.4 425.2L440.6 429.8L426.8 441.5L406.7 460L376.4 489.2L371.8 464.9L367.5 437.6L363.2 405.2L358.8 367.3L355.1 329L351.3 285.6L347.5 236.5L343.7 181.1L343.2 180L339.4 179.7ZM651.7 195L635.7 207L624.8 215.9L637.8 205.2L644.7 200Z" fill="#0040ff"/>
<path d="M454.8 67.2L880.8 97.5L879.8 98.5L879.6 99.8L877.7 198.9L875.7 283.6L873.5 353L871.1 408L755.7 399.9L681.7 394.9L639.6 392.4L605.3 390.7L575.3 389.8L549.5 389.8L538.8 390.2L527.5 390.8L518.1 391.7L508.9 392.9L500.4 394.3L492.9 396L485.4 398.1L478.8 400.3L471.2 403.4L464.7 406.6L459 409.8L452.6 413.9L446.3 418.3L440.8 422.6L433.3 428.7L425 436L406.7 452.9L375.2 483.3L370.7 458.5L366.4 430L362.1 396.3L358.3 362.1L354.5 323.2L350.7 278.9L347 228.9L343.7 181.1L343.2 180L339.4 179.7ZM651.7 195L635.7 207L624.8 215.9L637.8 205.2L644.7 200Z" fill="#0050ff"/>
<path d="M454.8 67.2L880.8 97.5L879.8 98.5L879.6 99.8L877.7 198.9L875.8 278.2L873.6 349L871.4 401.8L699.8 389.9L646.8 386.6L607.3 384.5L575.7 383.5L560.4 383.4L548.2 383.5L537.6 383.8L525.8 384.5L515.7 385.5L507.6 386.6L499.9 387.9L491.6 389.7L483.4 392.1L476.9 394.3L470.4 397L463.2 400.6L457.3 404L450.6 408.3L443.7 413.3L437.4 418.3L422.9 430.9L404.8 447.7L374.1 477.3L369.6 451.9L365.9 426.1L361.5 391.7L357.8 356.9L354 317.2L350.7 278.9L347 228.9L343.7 181.1L343.2 180L339.4 179.7ZM651.7 195L635.7 207L624.8 215.9L637.8 205.2L644.7 200Z" fill="#0060ff"/>
<path d="M454.8 67.2L880.8 97.5L879.8 98.5L879.6 99.8L877.9 192L876 272.7L873.9 340.7L871.7 395.7L697.9 383.6L644.7 380.3L606 378.3L574.4 377.3L559.1 377.1L546.9 377.2L536.3 377.6L525.5 378.2L516 379.1L506.8 380.2L499.2 381.5L491 383.4L483.9 385.3L476.2 388L469.7 390.7L462.5 394.3L456.8 397.5L449.9 402L443.1 406.9L436.9 411.8L428.8 418.6L421.7 424.9L403.7 441.8L373 471.4L368.6 444.9L364.8 418L361 387L357.2 351.5L353.4 311.1L350.2 272.1L347 228.9L343.7 181.1L343.2 180L339.4 179.7ZM651.7 195L635.7 207L624.8 215.9L637.8 205.2L644.7 200Z" fill="#0070ff"/>
<path d="M454.8 67.2L880.8 97.5L879.8 98.5L879.6 99.8L877.9 192L876 272.7L874.1 336.4L872 389.5L697.2 377.4L643.9 374L604.7 372L573.1 371L557.8 370.9L545.6 371L535 371.3L523.2 372L514.8 372.8L505.7 374L497.8 375.4L490.3 377L482.1 379.4L475.6 381.6L469.1 384.3L461.8 387.9L456.1 391.2L449.3 395.6L442.4 400.6L436.1 405.6L428.2 412.3L421.1 418.6L403 435.5L371.9 465.5L368 441.3L364.2 413.8L360.5 382.2L357.2 351.5L353.4 311.1L350.2 272.1L347 228.9L343.7 181.1L343.2 180L339.4 179.7ZM651.7 195L635.7 207L624.8 215.9L637.8 205.2L644.7 200Z" fill="#0080ff"/>
<path d="M454.8 67.2L880.8 97.5L879.8 98.5L879.6 99.8L877.9 192L876.1 267.2L874.2 332.1L872.3 383.4L700.7 371.5L644.2 367.9L604.4 365.8L570.1 364.7L544.3 364.8L533.6 365.1L523.2 365.7L513 366.7L504.7 367.8L497.1 369.1L488.8 370.9L481.6 373L474 375.6L467.6 378.4L461.3 381.5L455 385.2L448.3 389.5L441.4 394.6L435.1 399.6L420.5 412.2L402.5 429.1L370.9 459.5L367.5 437.6L363.7 409.6L359.9 377.3L356.7 346L353.4 311.1L350.2 272.1L347 228.9L343.7 181.1L343.2 180L339.4 179.7ZM651.7 195L635.7 207L624.8 215.9L637.8 205.2L644.7 200Z" fill="#008fff"/>
<path d="M454.8 67.2L880.8 97.5L879.8 98.5L879.6 99.8L878 185L876.3 261.5L874.5 323.1L872.5 377.3L763.6 369.6L678.4 363.9L634.1 361.2L598.9 359.4L568.7 358.5L556.8 358.4L542.9 358.5L531.6 358.9L522.3 359.5L512.1 360.4L504.1 361.5L496.3 362.8L488.1 364.7L481.5 366.5L473.6 369.3L467.1 372L460 375.6L454.4 378.8L447.6 383.3L440.3 388.7L434 393.7L420.5 405.5L400.2 424.4L369.9 453.6L366.4 430L362.6 400.8L359.4 372.4L356.1 340.5L352.9 304.9L349.7 265.3L346.4 221.3L343.7 181.1L343.2 180L339.4 179.7ZM651.7 195L635.7 207L624.8 215.9L637.8 205.2L644.7 200Z" fill="#009fff"/>
<path d="M454.8 67.2L880.8 97.5L879.8 98.5L879.6 99.8L878 185L876.4 255.7L874.7 318.5L872.8 371.2L683.5 358.1L635.7 355.1L599 353.3L565.7 352.3L541.6 352.4L530.9 352.7L521.6 353.3L511.3 354.2L503 355.3L495.5 356.6L487.3 358.5L480.7 360.3L474.2 362.6L467.6 365.3L461.8 368.1L455 371.9L448.2 376.2L441.9 380.7L435.8 385.5L428 392L421.4 397.9L401.4 416.4L369 447.7L365.3 422.1L362.1 396.3L358.8 367.3L355.6 334.8L352.4 298.6L349.7 265.3L346.4 221.3L343.7 181.1L343.2 180L339.4 179.7ZM651.7 195L635.7 207L624.8 215.9L637.8 205.2L644.7 200Z" fill="#00afff"/>
<path d="M454.8 67.2L880.8 97.5L879.8 98.5L879.6 99.8L878.2 177.9L876.6 249.9L874.8 313.8L873 365.1L691.4 352.5L638.5 349.2L599.9 347.2L566 346.1L541.9 346.1L531.7 346.5L521 347.1L511.5 347.9L502.5 349.1L494 350.6L486.4 352.3L479 354.5L472.8 356.6L465.5 359.7L459.9 362.5L453.5 366.2L447 370.4L440.4 375.2L434.1 380.2L425.7 387.3L418.6 393.6L400.1 410.9L368.1 441.8L364.8 418L361.5 391.7L358.3 362.1L355.1 329L351.8 292.1L349.1 258.2L343.7 181.1L343.2 180L339.4 179.7ZM651.7 195L635.7 207L624.8 215.9L637.8 205.2L644.7 200Z" fill="#00bfff"/>
<path d="M454.8 67.2L880.8 97.5L879.8 98.5L879.6 99.8L878.2 177.9L876.6 249.9L874.9 309L873.3 359L696.9 346.7L642 343.2L601.2 341.1L568 340L542.3 339.9L531.3 340.3L520.5 340.9L510.9 341.7L501.8 342.9L493.1 344.4L485.6 346.2L478.1 348.3L471.5 350.7L465.1 353.4L458.8 356.6L452.5 360.2L445.7 364.7L438.9 369.7L432.2 375.1L418.2 387.3L397.4 406.7L367.2 435.8L364.2 413.8L361 387L357.8 356.9L355.1 329L351.8 292.1L349.1 258.2L343.7 181.1L343.2 180L339.4 179.7ZM651.7 195L635.7 207L624.8 215.9L637.8 205.2L644.7 200Z" fill="#00cfff"/>
<path d="M454.8 67.2L880.8 97.5L879.8 98.5L879.6 99.8L878.2 177.9L876.7 243.9L875.1 304.1L873.5 352.9L684.8 339.8L634.1 336.7L596.5 334.8L563.2 333.8L539.1 333.8L528.3 334.2L519 334.8L508.8 335.7L500.8 336.8L493 338.1L485.5 339.9L478.1 342L471.3 344.4L465.7 346.7L458.5 350.3L452.8 353.5L446.3 357.7L439.6 362.5L433.8 367.1L425.3 374.2L418.5 380.2L399.3 398.2L366.4 429.9L363.2 405.2L360.5 382.2L357.2 351.5L354.5 323.2L349.1 258.2L343.7 181.1L343.2 180L339.4 179.7ZM651.7 195L635.7 207L624.8 215.9L637.8 205.2L644.7 200Z" fill="#00dfff"/>
<path d="M454.8 67.2L880.8 97.5L879.8 98.5L879.6 99.8L876.8 237.8L875.4 294L873.7 346.9L698.9 334.7L639.2 330.9L598.4 328.7L566.9 327.7L541.2 327.6L529.4 328L518.7 328.6L509.2 329.4L500.6 330.6L492.1 332L485.3 333.6L478 335.6L471.1 338L464.6 340.7L457.4 344.3L451.8 347.6L444.9 352.1L437.8 357.3L431.4 362.4L416.9 375L397.1 393.6L365.6 424L362.6 400.8L359.4 372.4L356.7 346L354 317.2L348.6 251.1L343.7 181.1L343.2 180L339.4 179.7ZM651.7 195L635.7 207L624.8 215.9L637.8 205.2L644.7 200Z" fill="#00efff"/>
<path d="M454.8 67.2L880.8 97.5L879.8 98.5L879.6 99.8L876.8 237.8L875.4 294L873.9 340.8L683.9 327.6L633 324.4L595.4 322.5L563.8 321.5L551.9 321.4L538 321.5L526.7 321.9L517.4 322.5L508.9 323.2L499.7 324.4L491.2 325.9L484.4 327.5L477.9 329.3L470.9 331.7L463.5 334.8L457.9 337.6L452.2 340.8L445.2 345.3L438.6 350.1L432.6 354.8L424.1 362L417.3 368.1L397.6 386.4L364.8 418.1L362.1 396.3L359.4 372.4L356.7 346L354 317.2L348.6 251.1L343.7 181.1L343.2 180L339.4 179.7ZM651.7 195L635.7 207L624.8 215.9L637.8 205.2L644.7 200Z" fill="#00ffff"/>
<path d="M454.8 67.2L880.8 97.5L879.8 98.5L879.6 99.8L877 231.6L875.5 288.8L874.1 334.7L760.3 326.7L673.6 320.8L628.3 318.1L597.3 316.5L562.3 315.4L538.3 315.4L528 315.7L518.3 316.2L508.7 317.1L499.4 318.2L491 319.7L483.4 321.4L476 323.6L469.8 325.8L462.5 328.9L456.2 332.1L450.6 335.3L443.8 339.8L436.5 345.1L430.2 350.2L416.3 362.4L395.5 381.8L364 412.2L361.5 391.7L358.8 367.3L356.1 340.5L353.4 311.1L348.6 251.1L343.7 181.1L343.2 180L339.4 179.7ZM651.7 195L635.7 207L624.8 215.9L637.8 205.2L644.7 200Z" fill="#10ffef"/>
<path d="M454.8 67.2L880.8 97.5L879.8 98.5L879.6 99.8L877.1 225.3L875.8 278.2L874.3 328.7L688.3 315.7L633.4 312.3L594.8 310.3L566 309.3L550.7 309.1L538.6 309.2L526.7 309.6L516.1 310.2L505.9 311.2L498.4 312.2L490.8 313.5L483.2 315.2L475.9 317.3L468.7 319.8L462.3 322.6L456 325.7L449.2 329.7L443.9 333.2L437.3 338L430.9 343L422.1 350.6L414.6 357.3L395.7 375L363.3 406.3L360.5 382.2L357.8 356.9L352.9 304.9L348 243.8L343.7 181.1L343.2 180L339.4 179.7ZM651.7 195L635.7 207L624.8 215.9L637.8 205.2L644.7 200Z" fill="#20ffdf"/>
<path d="M454.8 67.2L880.8 97.5L879.8 98.5L879.6 99.8L877.1 225.3L874.5 322.6L677.8 309L628.7 305.9L597.7 304.3L564.5 303.2L549.2 303L537.1 303.1L526.9 303.4L516.1 304L506.6 304.9L497.6 306.1L489.1 307.6L481.4 309.4L473.9 311.6L467.7 313.9L461.4 316.6L455.1 319.8L448.9 323.5L442.1 328L437.5 331.3L430.7 336.7L423.2 343L415.7 349.7L395.8 368.3L362.6 400.4L357.8 356.9L352.9 304.9L348 243.8L343.7 181.1L343.2 180L339.4 179.7ZM651.7 195L635.7 207L624.8 215.9L637.8 205.2L644.7 200Z" fill="#30ffcf"/>
<path d="M454.8 67.2L880.8 97.5L879.8 98.5L879.6 99.8L877.3 218.9L874.7 316.6L757.7 308.4L669.5 302.4L625.7 299.7L594.7 298.1L563.1 297.1L547.8 296.9L534.6 297.1L524.5 297.4L515.1 298L506.6 298.7L497.3 299.9L488.8 301.4L481.2 303.2L473.7 305.4L467.6 307.6L462.1 309.9L455 313.5L449.4 316.7L442.5 321.2L435.2 326.6L428.9 331.6L414.5 344.2L393.4 364L361.9 394.5L357.2 351.5L352.4 298.6L348 243.8L343.7 181.1L343.2 180L339.4 179.7ZM651.7 195L635.7 207L624.8 215.9L637.8 205.2L644.7 200Z" fill="#40ffbf"/>
<path d="M454.8 67.2L880.8 97.5L879.8 98.5L879.6 99.8L877.3 218.9L874.9 310.6L688.8 297.6L632.4 294L593.2 292L561.6 291L546.3 290.8L535.2 290.9L524.7 291.3L515.2 291.8L505.7 292.7L497 293.8L488.6 295.3L481.8 296.8L475.2 298.6L468.1 301.1L462.1 303.6L454.9 307.2L449.2 310.4L442.3 314.9L435.5 319.9L429.2 324.9L420.4 332.4L413.3 338.7L394.9 356L361.2 388.6L356.7 346L352.4 298.6L348 243.8L343.7 181.1L343.2 180L339.4 179.7ZM651.7 195L635.7 207L624.8 215.9L637.8 205.2L644.7 200Z" fill="#50ffaf"/>
<path d="M454.8 67.2L880.8 97.5L879.8 98.5L879.6 99.8L877.4 212.3L875.1 304.5L681 291L629.3 287.8L596.7 286.1L576.9 285.3L560.2 284.9L535.8 284.8L525.1 285.1L514.3 285.7L504.9 286.6L496.5 287.7L488.3 289.1L480.7 290.8L473.3 293L466.9 295.3L459.5 298.5L453.3 301.7L447.8 304.9L440.4 309.8L429.5 318.1L421.1 325.2L414 331.5L394.2 350.1L360.5 382.7L356.1 340.5L351.8 292.1L347.5 236.5L343.7 181.1L343.2 180L339.4 179.7ZM651.7 195L635.7 207L624.8 215.9L637.8 205.2L644.7 200Z" fill="#60ff9f"/>
<path d="M454.8 67.2L880.8 97.5L879.8 98.5L879.6 99.8L877.6 205.7L875.3 298.5L674.8 284.6L626.3 281.6L595.3 280L562.1 278.8L536.4 278.7L525.6 279L514.6 279.6L504.9 280.4L495.8 281.6L488 283L480.4 284.7L473 286.8L466.7 289.1L459.5 292.2L453.2 295.4L447.6 298.6L440.4 303.3L433.5 308.5L427.8 313.1L413.8 325.2L393.5 344.2L359.9 376.8L355.6 334.8L351.3 285.6L347.5 236.5L343.7 181.1L343.2 180L339.4 179.7ZM651.7 195L635.7 207L624.8 215.9L637.8 205.2L644.7 200Z" fill="#70ff8f"/>
<path d="M454.8 67.2L880.8 97.5L879.8 98.5L879.6 99.8L877.6 205.7L875.4 292.5L755.2 284L668.7 278.1L623.2 275.3L592.9 273.8L560.6 272.7L535.6 272.6L524.7 272.9L513.8 273.5L504.2 274.4L495.5 275.5L487.7 276.8L480.2 278.5L472.8 280.7L466.4 282.9L460.3 285.5L453.1 289L447.5 292.3L440.4 297L433.4 302.2L426.7 307.5L412.7 319.8L392 339.1L359.2 370.9L355.1 329L351.3 285.6L347.5 236.5L343.7 181.1L343.2 180L339.4 179.7ZM651.7 195L635.7 207L624.8 215.9L637.8 205.2L644.7 200Z" fill="#80ff80"/>
<path d="M454.8 67.2L880.8 97.5L879.8 98.5L879.6 99.8L877.7 198.9L875.6 286.5L692.8 273.7L631.5 269.8L597.3 267.9L562.5 266.7L549 266.5L534.7 266.6L523.9 266.9L513 267.5L503.5 268.3L494.4 269.5L485.9 271L479.1 272.6L471.6 274.8L465.2 277.1L458.6 279.9L453.1 282.7L447.5 286L440 290.9L433.2 295.8L427 300.8L419.1 307.5L411.6 314.3L391 333.6L358.6 365L354.5 323.2L350.7 278.9L347 228.9L343.7 181.1L343.2 180L339.4 179.7ZM651.7 195L635.7 207L624.8 215.9L637.8 205.2L644.7 200Z" fill="#8fff70"/>
<path d="M454.8 67.2L880.8 97.5L879.8 98.5L879.6 99.8L877.7 198.9L875.8 280.4L688.2 267.3L630.1 263.7L595.8 261.8L564.4 260.7L547.5 260.4L535.6 260.5L523.1 260.8L512.3 261.4L502.8 262.3L494.4 263.3L486.3 264.8L478.8 266.5L471.3 268.7L464.9 271L458.7 273.6L451.6 277.2L445.4 280.9L439.9 284.6L433.3 289.4L426.8 294.5L418 302.1L411 308.4L392.5 325.7L358 359.1L354.5 323.2L350.7 278.9L347 228.9L343.7 181.1L343.2 180L339.4 179.7ZM651.7 195L635.7 207L624.8 215.9L637.8 205.2L644.7 200Z" fill="#9fff60"/>
<path d="M454.8 67.2L880.8 97.5L879.8 98.5L879.6 99.8L877.9 192L875.9 274.4L683.5 261L627.6 257.5L594.4 255.7L561.2 254.6L534.9 254.4L523.8 254.7L512.7 255.3L503.1 256.1L493.8 257.3L485.3 258.8L477.7 260.6L470.1 262.8L463.6 265.2L456.2 268.5L450.9 271.3L445.4 274.5L438 279.5L433 283.2L426.7 288.2L417.9 295.7L410.4 302.5L391.5 320.2L357.4 353.2L354 317.2L350.2 272.1L347 228.9L343.7 181.1L343.2 180L339.4 179.7ZM651.7 195L635.7 207L624.8 215.9L637.8 205.2L644.7 200Z" fill="#afff50"/>
<path d="M454.8 67.2L880.8 97.5L879.8 98.5L879.6 99.8L877.9 192L876.1 268.4L680.4 254.8L626 251.4L592.9 249.6L559.7 248.5L534.2 248.3L521.8 248.7L511 249.3L500.8 250.2L493.3 251.2L485.7 252.6L478.1 254.3L470.7 256.4L463.3 259.1L457.1 261.8L450.9 265L443.4 269.5L437.9 273.2L432.9 276.9L426.6 281.9L418.2 289L410.7 295.7L391.3 313.9L356.8 347.3L353.4 311.1L350.2 272.1L347 228.9L343.7 181.1L343.2 180L339.4 179.7ZM651.7 195L635.7 207L624.8 215.9L637.8 205.2L644.7 200Z" fill="#bfff40"/>
<path d="M454.8 67.2L880.8 97.5L879.8 98.5L879.6 99.8L878 185L876.2 262.4L677.4 248.5L624.7 245.2L593.1 243.6L561.6 242.5L548.1 242.2L533.5 242.3L521.1 242.6L511.5 243.2L501 244.1L492.7 245.2L484.6 246.6L477 248.4L470.4 250.3L463 253L455.5 256.3L449.5 259.5L443.4 263.1L437.5 267.1L432.8 270.6L426.5 275.6L418.1 282.7L411 289L391.2 307.5L356.2 341.4L352.9 304.9L349.7 265.3L346.4 221.3L343.7 181.1L343.2 180L339.4 179.7ZM651.7 195L635.7 207L624.8 215.9L637.8 205.2L644.7 200Z" fill="#cfff30"/>
<path d="M454.8 67.2L880.8 97.5L879.8 98.5L879.6 99.8L878 185L876.4 256.4L675.9 242.4L624.3 239.2L591.6 237.5L558.4 236.4L532.9 236.2L521.9 236.5L510.9 237.1L501.4 238L492.2 239.2L484.2 240.6L476.6 242.3L469.1 244.5L462.7 246.9L456.5 249.6L450.2 252.8L444.7 256L437.3 260.9L426.4 269.2L418 276.4L410.9 282.7L391.1 301.2L355.7 335.5L352.4 298.6L349.7 265.3L346.4 221.3L343.7 181.1L343.2 180L339.4 179.7ZM651.7 195L635.7 207L624.8 215.9L637.8 205.2L644.7 200Z" fill="#dfff20"/>
<path d="M454.8 67.2L880.8 97.5L879.8 98.5L879.6 99.8L878.2 177.9L876.5 250.4L674.5 236.3L622.8 233.1L591 231.4L560.3 230.4L546.8 230.1L532.3 230.2L521.4 230.5L510.4 231.1L501.7 231.8L492.3 233L483.9 234.5L477.1 236.1L470.5 237.9L463.3 240.4L456.6 243.3L450.3 246.5L444 250.1L437.2 254.6L426.3 262.9L417.9 270L410.8 276.3L390.5 295.3L355.1 329.6L351.8 292.1L349.1 258.2L343.7 181.1L343.2 180L339.4 179.7ZM651.7 195L635.7 207L624.8 215.9L637.8 205.2L644.7 200Z" fill="#efff10"/>
<path d="M454.8 67.2L880.8 97.5L879.8 98.5L879.6 99.8L878.2 177.9L876.7 244.4L673.6 230.2L622.9 227.1L590.3 225.4L557.1 224.2L531.8 224.1L519.5 224.5L509.9 225L501.2 225.8L491.9 227L484.9 228.2L476.7 230L469.3 232.1L462 234.7L455.9 237.4L449.6 240.6L442.1 245L436.6 248.7L425.7 257L417.3 264.1L410.2 270.4L390 289.4L354.6 323.7L351.8 292.1L349.1 258.2L343.7 181.1L343.2 180L339.4 179.7ZM651.7 195L635.7 207L624.8 215.9L637.8 205.2L644.7 200Z" fill="#ffff00"/>
<path d="M454.8 67.2L880.8 97.5L879.8 98.5L879.6 99.8L876.8 238.4L673.2 224.2L621.5 221L590.5 219.4L557.3 218.2L531.4 218.1L519.1 218.4L509.5 219L500.8 219.7L491.5 220.9L483.8 222.2L475.5 224.1L468.9 226.1L461.6 228.7L455.2 231.5L448.9 234.7L443.4 237.9L436 242.8L425.2 251.1L416.9 258.2L409.7 264.6L389.4 283.5L354 317.8L351.3 285.6L348.6 251.1L343.7 181.1L343.2 180L339.4 179.7ZM651.7 195L635.7 207L624.8 215.9L637.8 205.2L644.7 200Z" fill="#ffef00"/>
<path d="M454.8 67.2L880.8 97.5L879.8 98.5L879.6 99.8L877 232.4L673.8 218.2L621.6 215L589 213.3L555.8 212.2L540.5 212L529.2 212.1L518.6 212.4L508 213L498.7 213.9L490.5 215L482 216.5L475.1 218.1L468.5 220L461.2 222.6L455.3 225.2L449 228.4L442.8 232L436 236.5L425.1 244.8L416.7 251.9L409.2 258.7L388.9 277.6L353.5 311.9L348.6 251.1L343.7 181.1L343.2 180L339.4 179.7ZM651.7 195L635.7 207L624.8 215.9L637.8 205.2L644.7 200Z" fill="#ffdf00"/>
<path d="M454.8 67.2L880.8 97.5L879.8 98.5L879.6 99.8L877.1 226.4L675.1 212.3L621.8 209L589.1 207.3L556 206.1L530.6 206L518.3 206.4L508.7 206.9L498.3 207.8L490.1 208.9L481.6 210.5L474 212.3L467.3 214.3L460.8 216.6L454.7 219.3L448.4 222.5L440.9 226.9L435.4 230.6L424.6 238.9L415.8 246.4L408.6 252.8L388.8 271.3L353 306L348 243.8L343.7 181.1L343.2 180L339.4 179.7ZM651.7 195L635.7 207L624.8 215.9L637.8 205.2L644.7 200Z" fill="#ffcf00"/>
<path d="M454.8 67.2L880.8 97.5L879.8 98.5L879.6 99.8L877.3 220.4L676.8 206.4L621.9 203L589.3 201.3L556.1 200.1L530.2 200L519.3 200.3L509.4 200.8L499.6 201.6L490.3 202.8L482.7 204.1L474.3 206L467.7 207.9L460.4 210.6L454 213.4L447.8 216.6L442.3 219.8L434.9 224.7L424 233L415.2 240.6L407.7 247.3L387.9 265.9L352.5 300.1L348 243.8L343.7 181.1L343.2 180L339.4 179.7ZM651.7 195L635.7 207L624.8 215.9L637.8 205.2L644.7 200Z" fill="#ffbf00"/>
<path d="M454.8 67.2L880.8 97.5L879.8 98.5L879.6 99.8L877.4 214.4L678.6 200.5L622.1 197L589.5 195.3L558 194.1L544.5 193.9L529.9 193.9L517.6 194.3L507.9 194.8L499.2 195.6L489.9 196.8L482.3 198.1L473.9 200L467.3 201.9L460 204.6L452.5 207.9L446.5 211.1L440.4 214.7L434.3 218.8L429.3 222.6L423 227.6L414.3 235L406.7 241.8L387.4 260L352 294.2L348 243.8L343.7 181.1L343.2 180L339.4 179.7ZM651.7 195L635.7 207L624.8 215.9L637.8 205.2L644.7 200Z" fill="#ffaf00"/>
<path d="M454.8 67.2L880.8 97.5L879.8 98.5L879.6 99.8L877.5 208.5L680.3 194.7L623.8 191.1L589.6 189.3L558.1 188.1L544.6 187.9L529.7 187.9L517.3 188.3L506.6 188.9L496.4 189.8L488.9 190.8L480.4 192.4L473.5 194L466 196.2L459.5 198.6L451.9 202L445.9 205.2L439.8 208.8L433.8 212.9L422.5 221.7L413.7 229.2L405.7 236.3L386.9 254.1L351.5 288.3L347.5 236.5L343.7 181.1L343.2 180L339.4 179.7ZM651.7 195L635.7 207L624.8 215.9L637.8 205.2L644.7 200Z" fill="#ff9f00"/>
<path d="M454.8 67.2L880.8 97.5L879.8 98.5L879.6 99.8L877.7 202.5L683.7 188.9L624 185.1L589.7 183.3L558.3 182.1L541.4 181.8L529.4 181.9L518.4 182.2L507.3 182.8L497.7 183.6L488.6 184.8L480 186.4L473.1 188L465.6 190.2L459.1 192.6L452.9 195.3L446.7 198.5L440.6 202.1L433.3 207L422 215.8L412.7 223.7L404.3 231.3L386 248.6L351 282.4L347.5 236.5L343.7 181.1L343.2 180L339.4 179.7ZM651.7 195L635.7 207L624.8 215.9L637.8 205.2L644.7 200Z" fill="#ff8f00"/>
<path d="M454.8 67.2L880.8 97.5L879.8 98.5L879.6 99.8L877.8 196.5L688.6 183.2L638.7 180L589.9 177.3L555.1 176L529.2 175.9L518.1 176.2L507 176.7L497.4 177.6L488.8 178.7L480.3 180.2L472.7 182L465.2 184.2L458.7 186.6L452.3 189.4L446.1 192.6L440 196.2L432.7 201.1L427.7 204.9L421 210.3L411.3 218.7L403.8 225.4L382.4 245.7L350.6 276.5L347 228.9L343.7 181.1L343.2 180L339.4 179.7ZM651.7 195L635.7 207L624.8 215.9L637.8 205.2L644.7 200Z" fill="#ff8000"/>
<path d="M454.8 67.2L880.8 97.5L879.8 98.5L879.6 99.8L877.9 190.5L693.6 177.6L640.4 174.1L590 171.3L555.2 170L529.1 169.8L517.9 170.1L507.9 170.6L497.1 171.6L488.4 172.7L480.6 174L473 175.8L466.5 177.6L459.2 180.2L453 182.9L447 185.9L441.4 189.1L434 194L427.2 199L420.5 204.4L405.7 217.4L384.1 237.7L350.1 270.6L347 228.9L343.7 181.1L343.2 180L339.4 179.7ZM651.7 195L635.7 207L624.8 215.9L637.8 205.2L644.7 200Z" fill="#ff7000"/>
<path d="M454.8 67.2L880.8 97.5L879.8 98.5L879.6 99.8L878 184.5L664.7 169.7L616.3 166.7L585.2 165.1L552 163.9L527.1 163.9L516.3 164.2L505.5 164.8L496 165.6L487.9 166.7L480.2 168L472.6 169.8L465.2 171.9L458.7 174.2L452.5 176.9L446.5 180L440.9 183.2L433.4 188.1L426.2 193.5L419.6 198.9L406.1 210.7L385.4 230.1L349.6 264.7L346.4 221.3L343.7 181.1L343.2 180L339.4 179.7ZM651.7 195L635.7 207L624.8 215.9L637.8 205.2L644.7 200Z" fill="#ff6000"/>
<path d="M454.8 67.2L880.8 97.5L879.8 98.5L879.6 99.8L878.2 178.5L668.1 163.9L616.4 160.7L585.4 159.1L552.2 157.9L527 157.8L516.1 158.1L506.4 158.7L497.5 159.4L487.4 160.7L478.3 162.3L471.4 164L464.7 165.9L458.3 168.3L452 171L445.9 174.1L440.4 177.3L432.9 182.2L422.1 190.5L413.8 197.5L406.6 203.9L385.9 223.4L349.2 258.9L343.7 181.1L343.2 180L339.4 179.7ZM651.7 195L635.7 207L624.8 215.9L637.8 205.2L644.7 200Z" fill="#ff5000"/>
<path d="M454.8 67.2L880.8 97.5L879.8 98.5L879.6 99.8L878.3 172.6L673 158.2L618.1 154.8L585.5 153.1L552.3 151.9L526.9 151.8L514.6 152.2L504 152.8L496.4 153.5L487.2 154.7L478.6 156.2L471.7 157.8L465.1 159.7L457.8 162.3L451.5 165.1L445.4 168.2L437.9 172.6L432.4 176.3L421.5 184.7L412.7 192.2L405.2 198.9L385.4 217.5L348.7 253L343.7 181.1L343.2 180L339.4 179.7ZM651.7 195L635.7 207L624.8 215.9L637.8 205.2L644.7 200Z" fill="#ff4000"/>
<path d="M454.8 67.2L880.8 97.5L879.8 98.5L879.6 99.8L878.4 166.6L678 152.6L619.9 148.9L587.3 147.2L552.5 145.9L526.9 145.8L515.9 146.1L504.9 146.7L495.4 147.5L486.9 148.6L478.8 150.1L471.3 151.8L463.8 154L457.3 156.4L451 159.1L444.8 162.3L437.4 166.7L431.4 170.9L426.9 174.2L420.1 179.6L411.3 187.1L403.4 194.3L384.5 212L348.3 247.1L343.7 181.1L343.2 180L339.4 179.7ZM651.7 195L635.7 207L624.8 215.9L637.8 205.2L644.7 200Z" fill="#ff3000"/>
<path d="M454.8 67.2L880.8 97.5L879.8 98.5L879.6 99.8L878.5 160.6L684.5 147L636.2 143.9L587.4 141.2L552.6 139.9L526.9 139.8L514.4 140.1L504.8 140.7L494.3 141.6L486.2 142.7L477.7 144.2L470.8 145.8L464.2 147.8L456.8 150.4L450.5 153.2L444.3 156.4L438.2 160L430.9 165L425.9 168.7L419.1 174.1L409.9 182.1L401.5 189.7L381 209.1L347.8 241.2L343.7 181.1L343.2 180L339.4 179.7ZM651.7 195L635.7 207L624.8 215.9L637.8 205.2L644.7 200Z" fill="#ff2000"/>
<path d="M454.8 67.2L880.8 97.5L879.8 98.5L879.6 99.8L878.6 154.7L748.8 145.5L660.5 139.5L613.6 136.6L582.6 135L552.8 134L539.3 133.8L525.1 133.8L514.3 134.1L504.6 134.7L495 135.5L486.4 136.6L477.9 138.1L470.3 139.9L463.7 141.8L457.3 144.1L449.9 147.3L443.8 150.5L437.7 154.1L432.2 157.8L425.1 163.1L418.7 168.2L403.9 181.2L382.3 201.5L347.4 235.3L343.7 181.1L343.2 180L339.4 179.7ZM651.7 195L635.7 207L624.8 215.9L637.8 205.2L644.7 200Z" fill="#ff1000"/>
<path d="M454.8 67.2L880.8 97.5L879.8 98.5L879.6 99.8L878.7 148.7L665.5 133.8L615.4 130.7L582.7 129L552.9 128L537.1 127.7L525.1 127.8L512.9 128.2L503.4 128.7L494 129.6L485.6 130.7L478.2 132L470.7 133.7L464.1 135.6L456.8 138.2L450.5 140.9L443.3 144.6L437.2 148.3L431.7 151.9L420.8 160.2L412.4 167.3L405.3 173.7L384.6 193.1L347 229.4L343.7 181.1L343.2 180L339.4 179.7ZM651.7 195L635.7 207L624.8 215.9L637.8 205.2L644.7 200Z" fill="#ff0000"/>
<path d="M454.8 67.2L880.8 97.5L879.8 98.5L879.6 99.8L878.9 142.7L672 128.3L617.1 124.8L584.5 123.1L553 122L537.2 121.7L525.2 121.8L514.2 122.1L504.4 122.6L495.5 123.4L485.5 124.6L476.3 126.3L469.4 127.9L462.7 129.9L456.3 132.3L450 135L442.8 138.7L436.7 142.4L430.6 146.5L419.8 154.8L411 162.3L403.5 169L383.7 187.6L346.6 223.5L343.7 181.1L343.2 180L339.4 179.7ZM651.7 195L635.7 207L624.8 215.9L637.8 205.2L644.7 200Z" fill="#ef0000"/>
<path d="M454.8 67.2L880.8 97.5L879.8 98.5L879.6 99.8L879 136.8L679.4 122.8L618.9 118.9L584.6 117.1L551.5 116L537.4 115.7L525.2 115.8L514.2 116.1L503.2 116.7L493.7 117.5L485.1 118.7L477.3 120L469.7 121.8L462.2 124L455.7 126.3L449.4 129.1L443 132.4L437.5 135.7L430.2 140.6L425.2 144.3L418.4 149.7L409.1 157.7L401.2 164.8L382.9 182.1L346.2 217.7L343.7 181.1L343.2 180L339.4 179.7ZM651.7 195L635.7 207L624.8 215.9L637.8 205.2L644.7 200Z" fill="#df0000"/>
<path d="M454.8 67.2L880.8 97.5L879.8 98.5L879.6 99.8L879.1 130.8L688.3 117.4L622.2 113.2L586.4 111.2L551.6 110L537.7 109.8L525.3 109.8L514.2 110.1L504.3 110.6L495.3 111.3L485.1 112.6L477.6 113.9L469.2 115.8L462.6 117.8L455.2 120.4L448.9 123.2L442.5 126.5L435.1 131L429.2 135.1L424.2 138.8L417.4 144.3L407.7 152.6L400.3 159.4L378.9 179.6L345.8 211.8L343.7 181.1L343.2 180L339.4 179.7ZM651.7 195L635.7 207L624.8 215.9L637.8 205.2L644.7 200Z" fill="#cf0000"/>
<path d="M454.8 67.2L880.8 97.5L879.8 98.5L879.6 99.8L879.2 124.8L662.7 109.7L612.6 106.6L581.6 105L551.7 104L537.9 103.8L523.7 103.8L512.9 104.1L503.1 104.7L493.5 105.5L484.3 106.7L476.4 108.1L468.7 109.9L462.1 111.8L455.7 114.1L449.4 116.8L443.5 119.8L436 124.3L430.5 128L423.2 133.4L416.5 138.8L403.6 150.1L382.9 169.5L345.4 205.9L343.7 181.1L343.2 180L339.4 179.7ZM651.7 195L635.7 207L624.8 215.9L637.8 205.2L644.7 200Z" fill="#bf0000"/>
<path d="M454.8 67.2L880.8 97.5L879.8 98.5L879.6 99.8L879.3 118.9L670.9 104.3L616 100.8L583.4 99.1L551.9 98L538.2 97.8L523.8 97.8L512.9 98.1L502 98.7L492.5 99.6L484.2 100.7L476.6 102L469 103.7L461.6 105.9L455.1 108.2L447.7 111.5L441.6 114.7L435.5 118.4L429.4 122.5L418.6 130.8L409.8 138.3L402.3 145.1L382.5 163.6L345 200L343.7 181.1L343.2 180L339.4 179.7ZM651.7 195L635.7 207L624.8 215.9L637.8 205.2L644.7 200Z" fill="#af0000"/>
<path d="M454.8 67.2L880.8 97.5L879.8 98.5L879.6 99.8L879.4 112.9L679 98.9L617.7 95L578.5 92.9L560.4 92.3L543.6 91.9L529.7 91.8L517.3 92L506.5 92.4L496 93.2L486.9 94.2L478.3 95.6L470.9 97.2L464.5 98.9L458.4 100.9L451.5 103.6L444.8 106.8L439 110.1L432.6 114.2L426.7 118.3L420.8 122.8L413.3 129L399.6 141.3L380.8 159L344.6 194.1L343.7 181.1L343.2 180L339.4 179.7ZM651.7 195L635.7 207L626.7 214.2L639.3 204Z" fill="#9f0000"/>
<path d="M454.8 67.2L880.8 97.5L879.8 98.5L879.5 107L746.5 97.6L657 91.4L609.7 88.5L580.3 87L547.1 85.9L534.2 85.8L520.7 85.9L510.3 86.2L499.9 86.9L490.7 87.7L480.7 89.2L474.2 90.4L466.4 92.3L459.7 94.4L453 96.9L446.5 99.8L439.9 103.4L434 107L428 111.1L423 114.9L416.2 120.4L407.1 128.3L399.2 135.4L377.8 155.7L344.2 188.2L343.7 181.1L343.2 180L339.4 179.7ZM651.7 195L633.4 208.8L641.4 202.4Z" fill="#8f0000"/>
<path d="M454.8 67.2L880.8 97.5L879.8 98.5L879.6 101L802.7 95.6L725.8 88.3L719.4 88L714.6 87.9L709.7 88.3L707 88.8L692.1 87.8L679.2 85.5L672.8 84.7L669.6 84.6L668 84.8L666.4 85.2L664.6 86L656.7 85.5L650.3 83.7L647 83.1L643.8 83.1L642.2 83.7L641.1 84.5L635.7 84.1L632.5 82.9L629.3 82L627.7 82L626 82.5L624.9 83.5L621.2 83.3L617.9 81.8L616.3 81.4L614.7 81.2L613.1 82.1L612.6 82.7L609.8 82.6L606.6 81.1L605 80.7L603.3 81.2L602.6 82.2L600 82.1L598.4 81.1L596.8 80.3L595.2 80.5L594.3 81.7L591.9 81.6L590.3 80.4L588.6 79.9L587.1 81.4L585.3 81.3L583.7 80.2L582.1 79.7L580.8 81.1L578.8 80.8L577.2 79.6L575.5 80.2L575.2 80.9L573.8 80.8L572.2 79.5L570.6 79.8L570.2 80.6L568.9 80.6L567.3 79.3L565.6 80.5L563.9 80L562.3 79L561.5 80.3L560.6 80.3L559 79L557.6 80.2L557.3 80.2L555.6 79.2L554.1 80.1L552.3 79.2L550.6 80L548.9 79L547.6 80L547.2 80L545.6 78.7L544.7 79.9L543.8 79.9L542.2 79.1L541.9 79.9L541 79.8L540.4 79L539.9 78.7L539.3 79.8L538.7 79.8L537.6 78.7L537 79.4L536.9 79.8L536.4 79.8L535.8 79.5L535.3 78.8L534.7 79.2L534.5 79.8L534.1 79.8L533.5 79.4L533 78.8L532.3 79.8L531.8 79.8L530.7 78.8L530.2 79.8L529.5 79.8L528.9 78.9L528.3 79.2L528.2 79.8L527.7 79.8L526.6 78.9L526.2 79.8L526 79.8L525.4 79.6L524.8 78.9L524.4 79.8L523.6 79.8L523.1 78.9L522.4 79.9L521.9 79.8L521.3 79L520.8 79.9L520.1 79.7L519.5 79.1L519.2 79.9L518.9 79.9L518.3 79.4L517.7 79.5L517.6 80L517.1 80L516.5 79.2L516 80L514.7 79.4L514.6 80.1L514.1 80.1L513.5 79.3L513.1 80.1L512.3 79.6L511.7 80.2L510.5 79.7L510.4 80.2L509.9 80.2L509.3 79.6L509.1 80.3L508.7 80.3L508.1 79.7L507.8 80.3L507.4 80.4L506.8 79.7L506.6 80.4L506.2 80.4L505.6 79.8L505.4 80.5L505 80.5L504.4 80L504.2 80.5L503.1 80.3L503.1 80.6L502.5 80.5L501.9 80.7L501.3 80.3L500.9 80.8L500.6 80.8L500 80.3L499.8 80.8L498.7 80.9L498.1 80.5L497.8 81L496.8 81.1L496.2 80.7L495.9 81.2L494.9 81.3L494.3 80.9L494.1 81.4L492.3 81.5L491.7 81.2L491.5 81.6L489.7 81.8L488.4 81.7L487.5 82.1L479.5 83.3L478.6 83.1L478.1 83.5L476.6 83.8L475.9 84L475.7 83.7L475.2 84.1L473.7 84.4L473.5 84.1L473 84.6L472.2 84.8L471.9 84.4L471.5 84.9L470.7 85.1L470.4 84.7L470 85.3L469.1 85.5L469 85.1L468.5 85.7L468.3 85.7L468 85.3L467.6 85.9L467.1 85.9L466.8 86.1L466.7 85.9L465.9 86.4L465.8 85.9L465.4 86.5L465.1 86.6L464.9 86L464.5 86.8L464.3 86.8L464.1 86.2L463.7 87L463.5 87.1L463.2 86.5L462.9 87.3L462.6 87.3L462.4 86.7L462.1 87.5L461.8 87.6L461.6 87.1L460.9 87.9L460.5 87.5L460 88.2L459.7 87.5L459.4 88.4L459.1 88.5L459 87.9L458.2 88.8L457.9 88.1L457.6 89L457.3 89.1L457.2 88.7L456.8 88.8L456.4 89.5L456.1 88.7L455.8 89.4L455.4 89.8L455.1 89L454.9 90L454.5 90.2L454.1 89.4L453.9 90.3L453.5 90.6L453.2 89.8L452.9 90.6L452.5 91L452.2 90.2L451.7 91.4L451.4 91.4L451.3 90.9L451 90.8L450.8 91.7L450.4 91.9L450.1 91L449.6 92.3L449.3 92.4L448.9 91.5L448.7 92.3L448.2 92.9L448.1 92.4L447.8 92.1L447.6 92.9L447.1 93.4L446.7 92.5L446.2 93.9L445.9 94L445.6 93L445.1 94.4L444.7 94.6L444.6 94L443.8 95.1L443.5 95.3L443 94.3L442.3 95.9L442.2 96L441.5 95.3L440.9 96.7L440.1 96.3L439.4 97.5L438.7 97L438 98.4L437.3 97.5L436.8 99.1L436.4 99.3L436 98.2L435.4 99.5L434.8 100.3L434.1 99.5L433.5 101.2L433 101.5L432.9 100.7L432.2 100.8L431.7 102.4L431.2 102.7L431 102.1L430.4 101.9L429.9 103.4L429.2 104.1L428.6 103L428.1 103.8L427.6 105.3L427 105.7L426.3 104.6L425.8 105.4L425.3 106.8L424.5 107.5L424.1 106.5L423.6 106.6L422.6 109L421.8 109.6L421.5 108.8L420.9 108.6L419.4 111.5L418.6 112.2L418.4 111.7L417.8 111.1L417.3 111.6L415.9 114.4L414.7 115.4L414.3 114.6L413.8 114.4L413.3 114.8L411.4 118.1L409.8 119.6L409.5 119L408.9 118.8L408.4 119L407.1 120.6L405.3 123.6L403 125.7L402.4 125.2L401.9 125.2L400.5 126.1L398.7 128.1L395.2 132.9L391 136.8L390.2 136.8L388.8 137.4L385.7 139.9L364.7 162.1L343.8 182.3L343.7 181.1L343.2 180L339.4 179.7ZM651.7 195L640.4 203.4L646.3 198.9Z" fill="#800000"/>
</g>
<path d="M856.3 478.7C855.5 478.6 853.4 477.9 851.3 478.1C849.1 478.3 846.4 478.9 843.4 479.7C840.4 480.5 835.7 482.9 833.4 482.7C831.1 482.5 831 481 829.4 478.7C827.8 476.4 825.8 471.1 823.5 468.8C821.2 466.5 818.8 465 815.5 464.8C812.2 464.6 808.1 465.7 803.5 467.4C798.9 469.1 792.9 473.1 787.6 474.8C782.3 476.5 777 477.3 771.7 477.3C766.4 477.3 761.1 476.1 755.8 474.8C750.5 473.6 744.8 471 739.8 469.8C734.8 468.6 729.9 467.3 725.9 467.8C721.9 468.3 718.1 472.3 715.9 472.8C713.7 473.3 714.2 472.6 712.9 470.8C711.6 469 710.1 464.6 708 461.8C705.9 459 702 455.4 700 453.9C698 452.4 698.7 452.4 696.3 452.8C693.9 453.2 689.5 454.5 685.4 456.2C681.2 457.9 676.4 461.2 671.4 462.8C666.4 464.4 660.8 465.7 655.5 465.8C650.2 465.9 644.9 464.7 639.6 463.4C634.3 462.1 628.2 459.2 623.6 457.8C619 456.4 615.9 455 611.7 454.8C607.6 454.6 601.5 457.1 598.7 456.8C595.9 456.5 596.3 455.3 594.8 452.8C593.3 450.3 591.2 444.4 589.8 441.9C588.4 439.4 587.8 438.6 586.6 437.6C585.4 436.6 584.2 436.1 582.8 435.9C581.4 435.7 579.8 436 578 436.5C576.2 437 574.9 437.6 571.9 438.9C568.9 440.2 564.4 442.9 559.9 444.2C555.4 445.5 550.1 445.4 545 446.5C539.9 447.6 535.2 448.7 529.3 450.5C523.4 452.3 516 455.4 509.4 457.5C502.8 459.6 495.4 461.6 489.5 462.8C483.6 464 477.8 463.7 474 464.5C470.2 465.3 468.3 465.9 467 467.5C465.7 469.1 465.7 471.9 466 474C466.3 476.1 467.3 478.2 469 480C470.7 481.8 473.8 483.6 476 484.5C478.2 485.4 481.8 484.7 482.5 485.5C483.2 486.3 482.8 487.6 480 489.5C477.2 491.4 471.3 494.2 466 497C460.7 499.8 453.5 505 448 506.5C442.5 508 436.1 505.4 433 505.8C429.9 506.2 430.1 507.6 429.5 509C428.9 510.4 428.8 512.2 429.3 514C429.8 515.8 431.2 518.2 432.5 520C433.8 521.8 435.6 523.3 437 524.5C438.4 525.7 440.3 526.6 441 527" fill="none" stroke="#000" stroke-width="4.3" stroke-linecap="butt" stroke-linejoin="round"/><path d="M449.0 522.3 L418.6 541.3" fill="none" stroke="#000" stroke-width="4.3" stroke-linecap="butt" stroke-linejoin="round"/>
<g opacity="0.70" shape-rendering="crispEdges">
<path d="M752.2 478.7L800.2 482.8L861.1 487.5L860.2 486.9L859.3 485.6L858.4 483.6L857.4 480.5L855.2 471.5L853 460L848.7 432.2L837.4 350.3L831.8 312.1L828.3 290.6L825.3 273.3L822.2 257.4L819.2 242.9L814.4 222.9L811.8 213.3L809.2 204.7L806.6 196.9L804 190L801.4 183.8L798.8 178.4L794 178.3L792 177.4L772.7 177.2L770.7 176.4L759.5 176.6L757.5 175.9L749.5 176.2L747.4 175.7L741 176.1L739 175.6L734.2 176L732.1 175.6L728.9 176L726.9 175.6L723.7 176.1L721.7 175.8L720.1 176.1L718 175.9L716.4 176.2L714.4 176L712.8 176.4L710.8 176.3L709.1 176.7L705.1 176.7L703.5 177.1L695.3 178L687.2 179.6L686.8 179.5L682.7 180.7L682.3 180.6L680.2 181.3L679.8 181.3L674.9 182.9L672.8 183.8L672 184L665.7 186.7L661.9 188.6L654.4 193.2L646.8 198.4L637.8 205.2L627.8 213.3L619.7 220.3L611.7 227.8L603.6 235.9L597.2 242.8L589.2 252L582.8 259.8L574.8 270.1L568.4 278.9L558.8 292.9L549.2 308L539.6 324.1L528.4 344.2L517.2 365.6L504.4 391.5L491.5 418.7L464.3 478L456.3 494.8L449.9 507.6L441.9 522.5L435.5 533L432.3 537.8L429.1 542.1L426.4 545.4L423.4 548.5L454.8 517.1L489.6 481L495.7 475L501 470.2L508.6 464.1L512.5 461.5L516 459.5L519.6 457.8L523.6 456.2L526.9 455.1L530.8 454.2L536.9 453.2L544.7 452.8L552.6 453L561.8 453.8L577.7 456L629.5 464.6L658.8 468.8L678.2 471.2L700.7 473.8Z" fill="#00008f"/>
<path d="M648.8 467.5L656.8 468.5L669.3 469.8L708.7 473.2L769.2 477.9L858.7 484.4L857.2 480L855.6 473.5L853.9 464.9L851.7 452.2L847.8 426.1L838.3 356.5L833.1 320.5L827.9 288L822.7 259.5L820.1 246.9L817 233.4L814 221.2L811 210.3L807.9 200.7L804.9 192.2L801.8 184.8L798.8 178.4L794 178.3L792 177.4L772.7 177.2L770.7 176.4L759.5 176.6L757.5 175.9L749.5 176.2L747.4 175.7L741 176.1L739 175.6L734.2 176L732.1 175.6L728.9 176L726.9 175.6L723.7 176.1L721.7 175.8L720.1 176.1L718 175.9L716.4 176.2L714.4 176L712.8 176.4L710.8 176.3L709.1 176.7L705.1 176.7L703.5 177.1L695.3 178L687.2 179.6L686.8 179.5L677.3 182.1L672.8 183.8L672 184L665.7 186.7L661.9 188.6L654.4 193.2L645.6 199.3L636.3 206.3L625.7 215L616.5 223.3L608.5 231L600.4 239.3L592.4 248.2L584.4 257.8L576.4 268L568.4 278.9L560.4 290.5L552.4 302.9L546 313.2L538 326.9L530 341.2L522 356.2L512.4 375.1L501.2 398.2L489.9 422.2L464.3 478L456.3 494.8L449.9 507.6L441.9 522.5L435.5 533L432.3 537.8L429.1 542.1L426.4 545.4L423.4 548.5L450.9 521L487.5 483.2L498 472.9L505.3 466.6L511.4 462.2L517.8 458.6L523.6 456.2L526.9 455.1L530.8 454.2L534.4 453.5L538.7 453L547 452.8L558.2 453.4L565.9 454.3L575.7 455.7L621.3 463.4Z" fill="#00009f"/>
<path d="M598 459.4L605.7 460.6L618.2 461.8L662.4 465.6L738.9 471.4L857.3 480L855.6 473.5L854.3 467.2L851.3 449.5L847.8 426.1L838.3 356.5L833.5 323.4L828.3 290.6L823.1 261.8L820.5 248.9L817.5 235.2L814.4 222.9L811.4 211.8L808.3 202L805.3 193.4L802.3 185.8L798.8 178.4L794 178.3L792 177.4L772.7 177.2L770.7 176.4L759.5 176.6L757.5 175.9L749.5 176.2L747.4 175.7L741 176.1L739 175.6L734.2 176L732.1 175.6L728.9 176L726.9 175.6L723.7 176.1L721.7 175.8L720.1 176.1L718 175.9L716.4 176.2L714.4 176L712.8 176.4L710.8 176.3L709.1 176.7L705.1 176.7L703.5 177.1L695.3 178L687.2 179.6L686.8 179.5L677.3 182.1L669.1 185.2L661.9 188.6L657.7 191.1L651.6 195L645.6 199.3L637.8 205.2L631.1 210.5L622.9 217.5L616.5 223.3L610.1 229.4L603.6 235.9L592.4 248.2L586 255.8L579.6 263.8L568.4 278.9L557.2 295.4L547.6 310.6L538 326.9L526.8 347.1L515.6 368.7L502.8 394.9L491.5 418.7L464.3 478L451.5 504.5L443.5 519.6L437.1 530.5L432.3 537.8L429.1 542.1L426.3 545.5L456.1 515.8L486.4 484.3L495.7 475L501.6 469.7L506.6 465.6L512.1 461.7L516.9 459L523.6 456.2L526.9 455.1L530.8 454.2L538.7 453L546.8 452.8L555.1 453.2L565.9 454.3L577.7 456Z" fill="#0000af"/>
<path d="M563.1 453.9L574.6 454.9L856.1 475.3L853 460L849.6 438.1L837.4 350.3L832.2 314.9L827.9 288L823.5 264L820.9 251L817.9 237.1L814.9 224.5L811.8 213.3L808.8 203.3L805.3 193.4L802.3 185.8L798.8 178.4L794 178.3L792 177.4L772.7 177.2L770.7 176.4L759.5 176.6L757.5 175.9L749.5 176.2L747.4 175.7L741 176.1L739 175.6L734.2 176L732.1 175.6L728.9 176L726.9 175.6L723.7 176.1L721.7 175.8L720.1 176.1L718 175.9L716.4 176.2L714.4 176L712.8 176.4L710.8 176.3L709.1 176.7L705.1 176.7L703.5 177.1L695.3 178L687.2 179.6L686.8 179.5L677.3 182.1L672.8 183.8L672 184L665.7 186.7L657.7 191.1L647.6 197.9L637 205.8L624.5 216.1L613.3 226.3L602 237.6L590.8 250.1L582.8 259.8L574.8 270.1L566.8 281.2L560.4 290.5L552.4 302.9L546 313.2L539.6 324.1L531.6 338.3L518.8 362.4L504.4 391.5L491.5 418.7L464.3 478L453.1 501.3L446.7 513.7L440.3 525.2L435.5 533L430.8 539.9L458.5 512.4L494.6 476.1L503.5 468.1L507.2 465.1L511.4 462.2L517 459L522.1 456.7L527.4 455L533.7 453.6L540.5 452.9L546.8 452.8L554.3 453.1Z" fill="#0000bf"/>
<path d="M595.4 452.3L619.6 453.7L653.4 456L855 470.5L852.2 454.9L849.1 435.2L837.9 353.4L832.6 317.7L827.9 288L823.5 264L820.9 251L817.9 237.1L814.9 224.5L811.8 213.3L808.8 203.3L805.3 193.4L802.3 185.8L798.8 178.4L794 178.3L792 177.4L772.7 177.2L770.7 176.4L759.5 176.6L757.5 175.9L749.5 176.2L747.4 175.7L741 176.1L739 175.6L734.2 176L732.1 175.6L728.9 176L726.9 175.6L723.7 176.1L721.7 175.8L720.1 176.1L718 175.9L716.4 176.2L714.4 176L712.8 176.4L710.8 176.3L709.1 176.7L705.1 176.7L703.5 177.1L695.3 178L687.2 179.6L686.8 179.5L677.3 182.1L669.1 185.2L661.9 188.6L657.7 191.1L646.8 198.4L639.3 204L632.3 209.5L624.5 216.1L618.1 221.8L606.9 232.6L595.6 244.6L584.4 257.8L573.2 272.3L566.8 281.2L560.4 290.5L549.2 308L538 326.9L525.2 350.2L514 371.9L501.2 398.2L489.9 422.2L465.9 474.6L454.7 498.1L448.3 510.7L443.5 519.6L438.7 527.9L434.6 534.3L483 486.5L494.9 475.1L501.1 469.6L506.3 465.5L511.7 461.8L516.6 458.9L522.4 456.3L528.6 454.3L536.4 452.7L544.2 451.8L553.3 451.3L565.5 451.3L578.7 451.6Z" fill="#0000cf"/>
<path d="M623.6 449.3L681.2 453.2L854 465.6L851.7 452.2L848.7 432.2L837.9 353.4L833.1 320.5L828.3 290.6L823.5 264L820.9 251L817.9 237.1L814.9 224.5L811.8 213.3L808.8 203.3L805.3 193.4L802.3 185.8L798.8 178.4L794 178.3L792 177.4L772.7 177.2L770.7 176.4L759.5 176.6L757.5 175.9L749.5 176.2L747.4 175.7L741 176.1L739 175.6L734.2 176L732.1 175.6L728.9 176L726.9 175.6L723.7 176.1L721.7 175.8L720.1 176.1L718 175.9L716.4 176.2L714.4 176L712.8 176.4L710.8 176.3L709.1 176.7L705.1 176.7L703.5 177.1L695.3 178L687.2 179.6L686.8 179.5L677.3 182.1L672.8 183.8L672 184L665.7 186.7L661.9 188.6L654 193.5L645.6 199.3L637.8 205.2L629.8 211.6L621.3 218.9L613.3 226.3L606.9 232.6L600.4 239.3L594 246.4L587.6 253.9L581.2 261.8L574.8 270.1L568.4 278.9L562 288.1L555.6 297.8L546 313.2L536.4 329.7L526.8 347.1L517.2 365.6L507.6 384.9L497.9 405L467.5 471.1L457.9 491.5L451.5 504.5L446.7 513.7L441.9 522.5L438.2 528.7L482.5 485.2L497.3 471.2L504.2 465.4L510.4 460.8L516.4 457.2L522 454.4L529.3 451.7L536.8 449.8L546.4 448.4L556.3 447.6L569.1 447.3L584.9 447.5L600.5 448.1Z" fill="#0000df"/>
<path d="M643.7 445.8L701.1 449.7L853.1 460.6L850.9 446.7L848.3 429.2L838.3 356.5L833.5 323.4L828.3 290.6L823.5 264L820.9 251L817.9 237.1L814.9 224.5L811.8 213.3L808.8 203.3L805.3 193.4L802.3 185.8L798.8 178.4L794 178.3L792 177.4L772.7 177.2L770.7 176.4L759.5 176.6L757.5 175.9L749.5 176.2L747.4 175.7L741 176.1L739 175.6L734.2 176L732.1 175.6L728.9 176L726.9 175.6L723.7 176.1L721.7 175.8L720.1 176.1L718 175.9L716.4 176.2L714.4 176L712.8 176.4L710.8 176.3L709.1 176.7L705.1 176.7L703.5 177.1L697.4 177.7L693.3 178.3L687.2 179.6L686.8 179.5L682.7 180.7L682.3 180.6L680.2 181.3L679.8 181.3L674.9 182.9L672.8 183.8L672 184L665.7 186.7L661.9 188.6L654.4 193.2L646.8 198.4L637.8 205.2L628.8 212.4L621.3 218.9L613.3 226.3L605.2 234.2L597.2 242.8L589.2 252L582.8 259.8L574.8 270.1L568.4 278.9L560.4 290.5L554 300.3L547.6 310.6L539.6 324.1L533.2 335.4L525.2 350.2L510.8 378.4L494.7 411.8L469.1 467.7L459.5 488.2L449.9 507.6L441.5 523.1L483.8 481.7L493.2 472.8L500.2 466.5L507.9 460.2L514.4 455.7L520.9 452.1L527.1 449.3L531 448L535.3 446.7L544.5 444.9L555.5 443.6L566.6 443.1L579.1 442.9L595.3 443.3L615.7 444.2Z" fill="#0000ef"/>
<path d="M654.9 441.7L852.3 455.6L847.8 426.1L838.3 356.5L833.5 323.4L828.3 290.6L823.5 264L820.9 251L817.9 237.1L814.9 224.5L811.8 213.3L808.8 203.3L805.3 193.4L802.3 185.8L798.8 178.4L794 178.3L792 177.4L772.7 177.2L770.7 176.4L759.5 176.6L757.5 175.9L749.5 176.2L747.4 175.7L741 176.1L739 175.6L734.2 176L732.1 175.6L728.9 176L726.9 175.6L723.7 176.1L721.7 175.8L720.1 176.1L718 175.9L716.4 176.2L714.4 176L712.8 176.4L710.8 176.3L709.1 176.7L705.1 176.7L703.5 177.1L697.4 177.7L693.3 178.3L687.2 179.6L686.8 179.5L682.7 180.7L682.3 180.6L680.2 181.3L679.8 181.3L674.9 182.9L672.8 183.8L672 184L669.1 185.2L661.9 188.6L657.7 191.1L649.5 196.5L641 202.7L631.1 210.5L621.3 218.9L613.3 226.3L605.2 234.2L597.2 242.8L590.8 250.1L582.8 259.8L574.8 270.1L566.8 281.2L560.4 290.5L552.4 302.9L546 313.2L538 326.9L530 341.2L518.8 362.4L506 388.2L493.1 415.3L461.1 484.8L453.1 501.3L444.7 517.5L485.8 477.3L495.2 468.4L502.8 461.7L509.8 456.1L516.7 451.4L523.8 447.5L530.6 444.6L535.1 443.1L539.2 442.1L548.4 440.3L559.9 439L571.9 438.5L584.7 438.4L602.2 438.8L624.4 439.9Z" fill="#0000ff"/>
<path d="M657.8 436.9L715.4 440.8L851.5 450.5L847.8 426.1L838.3 356.5L833.5 323.4L828.3 290.6L823.1 261.8L820.5 248.9L817.5 235.2L814.4 222.9L811.4 211.8L808.3 202L805.3 193.4L802.3 185.8L798.8 178.4L794 178.3L792 177.4L772.7 177.2L770.7 176.4L759.5 176.6L757.5 175.9L749.5 176.2L747.4 175.7L741 176.1L739 175.6L734.2 176L732.1 175.6L728.9 176L726.9 175.6L723.7 176.1L721.7 175.8L720.1 176.1L718 175.9L716.4 176.2L714.4 176L712.8 176.4L710.8 176.3L709.1 176.7L705.1 176.7L703.5 177.1L697.4 177.7L693.3 178.3L687.2 179.6L686.8 179.5L682.7 180.7L682.3 180.6L680.2 181.3L679.8 181.3L674.9 182.9L672.8 183.8L672 184L669.1 185.2L661.9 188.6L657.7 191.1L649.5 196.5L641 202.7L631.1 210.5L621.3 218.9L613.3 226.3L605.2 234.2L597.2 242.8L590.8 250.1L582.8 259.8L574.8 270.1L566.8 281.2L560.4 290.5L552.4 302.9L546 313.2L538 326.9L530 341.2L517.2 365.6L504.4 391.5L491.5 418.7L462.7 481.4L454.7 498.1L447.7 511.8L487.6 472.9L497.5 463.7L505.2 456.9L512.6 451.1L519.4 446.6L526.1 443L533.6 439.9L538.3 438.4L542.4 437.3L552.4 435.5L563.9 434.4L576 433.8L590.3 433.8L606.8 434.2L628.4 435.2Z" fill="#0010ff"/>
<path d="M656.1 431.9L716.1 435.9L850.7 445.5L847 419.9L837.9 353.4L833.5 323.4L828.3 290.6L823.1 261.8L820.5 248.9L817.5 235.2L814.4 222.9L811.4 211.8L808.3 202L805.3 193.4L802.3 185.8L798.8 178.4L794 178.3L792 177.4L772.7 177.2L770.7 176.4L759.5 176.6L757.5 175.9L749.5 176.2L747.4 175.7L741 176.1L739 175.6L734.2 176L732.1 175.6L728.9 176L726.9 175.6L723.7 176.1L721.7 175.8L720.1 176.1L718 175.9L716.4 176.2L714.4 176L712.8 176.4L710.8 176.3L709.1 176.7L705.1 176.7L703.5 177.1L697.4 177.7L693.3 178.3L687.2 179.6L686.8 179.5L682.7 180.7L682.3 180.6L680.2 181.3L679.8 181.3L674.9 182.9L672.8 183.8L672 184L669.1 185.2L661.9 188.6L657.7 191.1L649.5 196.5L641 202.7L632.3 209.5L622.9 217.5L614.9 224.8L606.9 232.6L598.8 241L592.4 248.2L584.4 257.8L578 265.9L570 276.7L563.6 285.8L555.6 297.8L549.2 308L542.8 318.6L534.8 332.5L528.4 344.2L520.4 359.3L506 388.2L491.5 418.7L464.3 478L456.3 494.8L450.6 506.2L488.8 469L498.8 459.7L506.4 453L513.9 447.1L521.1 442.2L527.8 438.6L535.2 435.5L539.2 434.2L543.9 432.9L554.1 431L564.3 429.8L577 429.2L590.9 429L609.6 429.5L629.1 430.3Z" fill="#0020ff"/>
<path d="M652.5 426.7L713.7 430.7L849.9 440.4L837.9 353.4L833.5 323.4L828.3 290.6L823.1 261.8L820.5 248.9L817.5 235.2L814.4 222.9L811.4 211.8L808.3 202L805.3 193.4L802.3 185.8L798.8 178.4L794 178.3L792 177.4L772.7 177.2L770.7 176.4L759.5 176.6L757.5 175.9L749.5 176.2L747.4 175.7L741 176.1L739 175.6L734.2 176L732.1 175.6L728.9 176L726.9 175.6L723.7 176.1L721.7 175.8L720.1 176.1L718 175.9L716.4 176.2L714.4 176L712.8 176.4L710.8 176.3L709.1 176.7L705.1 176.7L703.5 177.1L697.4 177.7L693.3 178.3L687.2 179.6L686.8 179.5L682.7 180.7L682.3 180.6L680.2 181.3L679.8 181.3L674.9 182.9L672.8 183.8L672 184L665.7 186.7L661.9 188.6L654.4 193.2L647.6 197.9L639.3 204L629.8 211.6L621.3 218.9L613.3 226.3L605.2 234.2L598.8 241L590.8 250.1L584.4 257.8L576.4 268L570 276.7L562 288.1L555.6 297.8L549.2 308L542.8 318.6L534.8 332.5L526.8 347.1L518.8 362.4L509.2 381.6L493.1 415.3L464.3 478L453.5 500.5L490.4 464.6L500.4 455.3L508.1 448.6L515.4 442.8L522.2 438.1L529.3 434.2L536.2 431.2L544.8 428.5L554.6 426.5L564.7 425.2L577.1 424.5L591.5 424.2L608.4 424.5L626 425.2Z" fill="#0030ff"/>
<path d="M733.2 427L849.1 435.2L838.3 356.5L833.9 326.3L829.2 295.8L824.4 268.6L821.4 253.1L818.3 239L815.3 226.2L812.3 214.8L809.2 204.7L805.7 194.5L802.3 185.8L798.8 178.4L794 178.3L792 177.4L772.7 177.2L770.7 176.4L759.5 176.6L757.5 175.9L749.5 176.2L747.4 175.7L741 176.1L739 175.6L734.2 176L732.1 175.6L728.9 176L726.9 175.6L723.7 176.1L721.7 175.8L720.1 176.1L718 175.9L716.4 176.2L714.4 176L712.8 176.4L710.8 176.3L709.1 176.7L705.1 176.7L703.5 177.1L695.3 178L687.2 179.6L686.8 179.5L682.7 180.7L682.3 180.6L680.2 181.3L679.8 181.3L674.9 182.9L672.8 183.8L672 184L665.7 186.7L661.9 188.6L654.4 193.2L647.6 197.9L639.3 204L629.9 211.5L621.3 218.9L614.9 224.8L606.9 232.6L600.4 239.3L592.4 248.2L586 255.8L578 265.9L571.6 274.5L565.2 283.5L558.8 292.9L547.6 310.6L534.8 332.5L522 356.2L510.8 378.4L499.6 401.6L467.5 471.1L456.3 494.9L495.5 456.8L506.2 447.2L514.8 440L519.2 436.7L523.5 433.9L527.6 431.4L531.4 429.4L535.8 427.5L539.8 425.9L548.5 423.4L553.2 422.4L559.2 421.3L571.9 420.1L586.9 419.5L604 419.5L625.7 420.3L650.1 421.5Z" fill="#0040ff"/>
<path d="M689.7 419L848.4 430.1L838.3 356.5L833.1 320.5L827.9 288L822.7 259.5L820.1 246.9L817 233.4L814 221.2L811 210.3L807.9 200.7L804.9 192.2L801.8 184.8L798.8 178.4L794 178.3L792 177.4L772.7 177.2L770.7 176.4L759.5 176.6L757.5 175.9L749.5 176.2L747.4 175.7L741 176.1L739 175.6L734.2 176L732.1 175.6L728.9 176L726.9 175.6L723.7 176.1L721.7 175.8L720.1 176.1L718 175.9L716.4 176.2L714.4 176L712.8 176.4L710.8 176.3L709.1 176.7L705.1 176.7L703.5 177.1L695.3 178L687.2 179.6L686.8 179.5L682.7 180.7L682.3 180.6L680.2 181.3L679.8 181.3L674.9 182.9L672.8 183.8L672 184L665.7 186.7L657.7 191.1L647.6 197.9L637.8 205.2L627.8 213.3L618.1 221.8L608.5 231L598.8 241L589.2 252L579.6 263.8L570 276.7L562 288.1L552.4 302.9L544.4 315.9L536.4 329.7L528.4 344.2L520.4 359.3L510.8 378.4L494.7 411.8L469.1 467.7L459 489.2L496.1 453.3L506.2 444L514.6 436.9L522.4 431.1L529.7 426.6L536.9 423.1L541.2 421.4L545.3 420L550.5 418.6L555.3 417.6L565.4 416L578.7 414.9L592.8 414.6L609.8 414.7L629.7 415.5L655.8 416.8Z" fill="#0050ff"/>
<path d="M673 412.8L730.7 416.7L847.7 425L838.3 356.5L833.1 320.5L827.9 288L822.7 259.5L820.1 246.9L817 233.4L814 221.2L811 210.3L807.9 200.7L804.9 192.2L801.8 184.8L798.8 178.4L794 178.3L792 177.4L772.7 177.2L770.7 176.4L759.5 176.6L757.5 175.9L749.5 176.2L747.4 175.7L741 176.1L739 175.6L734.2 176L732.1 175.6L728.9 176L726.9 175.6L723.7 176.1L721.7 175.8L720.1 176.1L718 175.9L716.4 176.2L714.4 176L712.8 176.4L710.8 176.3L709.1 176.7L705.1 176.7L703.5 177.1L697.4 177.7L693.3 178.3L687.2 179.6L686.8 179.5L682.7 180.7L682.3 180.6L680.2 181.3L679.8 181.3L674.9 182.9L672.8 183.8L672 184L669.1 185.2L661.9 188.6L657.7 191.1L649.5 196.5L641 202.7L631.1 210.5L621.3 218.9L613.3 226.3L605.2 234.2L597.2 242.8L589.2 252L581.2 261.8L573.2 272.3L565.2 283.5L557.2 295.4L549.2 308L542.8 318.6L534.8 332.5L526.8 347.1L515.6 368.7L502.8 394.9L491.5 418.7L461.7 483.6L497.1 449.3L507.1 440L515 433.3L522.6 427.5L530.2 422.6L537.1 419L544.9 416L554 413.4L564.1 411.6L575.4 410.4L588.3 409.8L603.9 409.7L622.3 410.2L643.6 411.1Z" fill="#0060ff"/>
<path d="M662.6 407.1L723.6 411.1L846.9 419.8L837.9 353.4L832.6 317.7L827.4 285.5L822.2 257.4L819.6 244.8L816.6 231.5L814 221.2L811 210.3L807.9 200.7L804.9 192.2L801.8 184.8L798.8 178.4L794 178.3L792 177.4L772.7 177.2L770.7 176.4L759.5 176.6L757.5 175.9L749.5 176.2L747.4 175.7L741 176.1L739 175.6L734.2 176L732.1 175.6L728.9 176L726.9 175.6L723.7 176.1L721.7 175.8L720.1 176.1L718 175.9L716.4 176.2L714.4 176L712.8 176.4L710.8 176.3L709.1 176.7L705.1 176.7L703.5 177.1L697.4 177.7L693.3 178.3L687.2 179.6L686.8 179.5L682.7 180.7L682.3 180.6L680.2 181.3L679.8 181.3L674.9 182.9L672.8 183.8L672 184L665.7 186.7L661.9 188.6L654.4 193.2L647.6 197.9L639.3 204L631.1 210.5L622.9 217.5L614.9 224.8L606.9 232.6L600.4 239.3L592.4 248.2L586 255.8L578 265.9L571.6 274.5L563.6 285.8L557.2 295.4L550.8 305.4L544.4 315.9L536.4 329.7L528.4 344.2L520.4 359.3L510.8 378.4L494.7 411.8L464.4 477.9L498.4 444.9L508.5 435.6L516.3 428.9L524 423L531.4 418.2L538.2 414.6L545.7 411.5L554.3 408.9L564.5 407L574.4 405.8L587.2 405L601.2 404.8L618.1 405.1L637.5 405.8Z" fill="#0070ff"/>
<path d="M703.7 404.6L846.2 414.6L837.9 353.4L832.6 317.7L827.4 285.5L822.2 257.4L819.6 244.8L816.6 231.5L814 221.2L811 210.3L807.9 200.7L804.9 192.2L801.8 184.8L798.8 178.4L794 178.3L792 177.4L772.7 177.2L770.7 176.4L759.5 176.6L757.5 175.9L749.5 176.2L747.4 175.7L741 176.1L739 175.6L734.2 176L732.1 175.6L728.9 176L726.9 175.6L723.7 176.1L721.7 175.8L720.1 176.1L718 175.9L716.4 176.2L714.4 176L712.8 176.4L710.8 176.3L709.1 176.7L705.1 176.7L703.5 177.1L697.4 177.7L693.3 178.3L687.2 179.6L686.8 179.5L682.7 180.7L682.3 180.6L680.2 181.3L679.8 181.3L674.9 182.9L672.8 183.8L672 184L669.1 185.2L661.9 188.6L657.7 191.1L649.5 196.5L641.4 202.4L633.6 208.5L624.5 216.1L616.5 223.3L610.1 229.4L603.6 235.9L597.2 242.8L590.8 250.1L584.4 257.8L578 265.9L571.6 274.5L560.4 290.5L549.2 308L538 326.9L525.2 350.2L514 371.9L501.2 398.2L489.9 422.2L467 472.2L489.2 450.6L502.5 438L512.7 428.7L521.3 421.6L529.3 415.8L536.8 411.4L544.5 407.8L549.1 406.1L553.3 404.8L563 402.6L569.1 401.7L575 401L587.9 400.1L601.9 399.9L620.5 400.1L642 401L668.1 402.4Z" fill="#0080ff"/>
<path d="M681.8 398.1L738.2 401.9L845.5 409.5L837.4 350.3L832.2 314.9L827 283L821.8 255.2L819.2 242.9L816.2 229.7L813.6 219.6L810.5 208.9L807.9 200.7L804.9 192.2L801.8 184.8L798.8 178.4L794 178.3L792 177.4L772.7 177.2L770.7 176.4L759.5 176.6L757.5 175.9L749.5 176.2L747.4 175.7L741 176.1L739 175.6L734.2 176L732.1 175.6L728.9 176L726.9 175.6L723.7 176.1L721.7 175.8L720.1 176.1L718 175.9L716.4 176.2L714.4 176L712.8 176.4L710.8 176.3L709.1 176.7L705.1 176.7L703.5 177.1L697.4 177.7L693.3 178.3L687.2 179.6L686.8 179.5L682.7 180.7L682.3 180.6L680.2 181.3L679.8 181.3L674.9 182.9L672.8 183.8L672 184L669.1 185.2L661.9 188.6L657.7 191.1L649.1 196.8L639.3 204L629.8 211.6L619.7 220.3L611.7 227.8L603.6 235.9L595.6 244.6L587.6 253.9L579.6 263.8L571.6 274.5L563.6 285.8L555.6 297.8L549.2 308L541.2 321.3L533.2 335.4L525.2 350.2L514 371.9L502.8 394.9L489.9 422.2L469.6 466.5L503.4 434L513.5 424.7L521.5 418L529.3 412.2L536.4 407.8L544.4 403.8L551.8 401L556.7 399.6L561.2 398.5L571.7 396.7L582.7 395.6L595.7 395L611.9 395L629.7 395.4L652.7 396.5Z" fill="#008fff"/>
<path d="M763 398.5L844.8 404.3L838.3 356.5L833.9 326.3L829.6 298.4L825.3 273.3L820.9 251L816.2 229.7L811.8 213.3L807 198.2L803.1 187.9L798.8 178.4L794 178.3L792 177.4L772.7 177.2L770.7 176.4L759.5 176.6L757.5 175.9L749.5 176.2L747.4 175.7L741 176.1L739 175.6L734.2 176L732.1 175.6L728.9 176L726.9 175.6L723.7 176.1L721.7 175.8L720.1 176.1L718 175.9L716.4 176.2L714.4 176L712.8 176.4L710.8 176.3L709.1 176.7L705.1 176.7L703.5 177.1L695.3 178L687.2 179.6L686.8 179.5L682.7 180.7L682.3 180.6L680.2 181.3L679.8 181.3L674.9 182.9L672.8 183.8L672 184L665.7 186.7L661.9 188.6L657.7 191.1L649.5 196.5L642.8 201.4L634.7 207.6L626.7 214.2L619.7 220.3L611.7 227.8L605.2 234.2L597.2 242.8L590.8 250.1L582.8 259.8L576.4 268L570 276.7L563.6 285.8L552.4 302.9L541.2 321.3L528.4 344.2L517.2 365.6L504.4 391.5L491.5 418.7L472.2 460.9L494.9 438.9L508.3 426.2L518.7 417L527.6 409.9L532.3 406.6L536.8 403.7L541.1 401.3L545.2 399.4L549.9 397.4L554.5 395.8L563.9 393.4L569.2 392.4L575.6 391.5L589.3 390.4L605.1 390L623.8 390.2L644.9 391L674.7 392.6Z" fill="#009fff"/>
<path d="M704.4 389.4L844.1 399.1L837 347.2L831.8 312.1L826.6 280.5L821.4 253.1L816.2 229.7L813.6 219.6L810.5 208.9L807.9 200.7L804.9 192.2L801.8 184.8L798.8 178.4L794 178.3L792 177.4L772.7 177.2L770.7 176.4L759.5 176.6L757.5 175.9L749.5 176.2L747.4 175.7L741 176.1L739 175.6L734.2 176L732.1 175.6L728.9 176L726.9 175.6L723.7 176.1L721.7 175.8L720.1 176.1L718 175.9L716.4 176.2L714.4 176L712.8 176.4L710.8 176.3L709.1 176.7L705.1 176.7L703.5 177.1L697.4 177.7L693.3 178.3L687.2 179.6L686.8 179.5L682.7 180.7L682.3 180.6L680.2 181.3L679.8 181.3L674.9 182.9L672.8 183.8L672 184L669.1 185.2L661.9 188.6L657.7 191.1L651.5 195.2L642.8 201.4L634.9 207.5L626.7 214.2L619.7 220.3L613.3 226.3L606.9 232.6L600.4 239.3L594 246.4L587.6 253.9L581.2 261.8L574.8 270.1L568.4 278.9L562 288.1L550.8 305.4L539.6 324.1L528.4 344.2L517.2 365.6L504.4 391.5L491.5 418.7L474.8 455.2L495.3 435.3L508.2 423.1L518 414.3L526.5 407.2L534.6 401.4L542.4 396.7L546.9 394.5L550.6 393L558.3 390.3L563.8 388.9L568.6 387.9L579.4 386.4L593.6 385.4L607.7 385L624.7 385.2L646.2 386L672.3 387.4Z" fill="#00afff"/>
<path d="M684.9 383.1L740.8 386.7L843.4 394L836.5 344.2L831.3 309.3L826.1 278.1L820.9 251L815.7 228L813.1 218L810.1 207.5L807.5 199.4L804.4 191.1L801.8 184.8L798.8 178.4L794 178.3L792 177.4L772.7 177.2L770.7 176.4L759.5 176.6L757.5 175.9L749.5 176.2L747.4 175.7L741 176.1L739 175.6L734.2 176L732.1 175.6L728.9 176L726.9 175.6L723.7 176.1L721.7 175.8L720.1 176.1L718 175.9L716.4 176.2L714.4 176L712.8 176.4L710.8 176.3L709.1 176.7L705.1 176.7L703.5 177.1L697.4 177.7L693.3 178.3L687.2 179.6L686.8 179.5L682.7 180.7L682.3 180.6L680.2 181.3L679.8 181.3L674.9 182.9L672.8 183.8L672 184L669.1 185.2L661.9 188.6L657.7 191.1L649.5 196.5L641 202.7L632.3 209.5L622.9 217.5L614.9 224.8L606.9 232.6L598.8 241L592.4 248.2L584.4 257.8L576.4 268L568.4 278.9L562 288.1L554 300.3L547.6 310.6L541.2 321.3L533.2 335.4L520.4 359.3L507.6 384.9L494.7 411.8L477.4 449.5L509.5 418.7L519.3 409.8L527.3 403.2L535.1 397.4L542.4 392.9L549.5 389.3L557.4 386.3L565.4 384.1L576 382.1L587 380.9L600.6 380.2L615.3 380.1L633.8 380.5L656.9 381.5Z" fill="#00bfff"/>
<path d="M737.3 381.4L842.7 388.8L834.8 332.2L828.3 290.6L824.8 270.9L821.8 255.2L818.8 240.9L815.3 226.2L811.4 211.8L807.5 199.4L803.1 187.9L798.8 178.4L794 178.3L792 177.4L772.7 177.2L770.7 176.4L759.5 176.6L757.5 175.9L749.5 176.2L747.4 175.7L741 176.1L739 175.6L734.2 176L732.1 175.6L728.9 176L726.9 175.6L723.7 176.1L721.7 175.8L720.1 176.1L718 175.9L716.4 176.2L714.4 176L712.8 176.4L710.8 176.3L709.1 176.7L705.1 176.7L703.5 177.1L695.3 178L687.2 179.6L686.8 179.5L682.7 180.7L682.3 180.6L680.2 181.3L679.8 181.3L674.9 182.9L672.8 183.8L672 184L665.7 186.7L661.9 188.6L657.7 191.1L651.5 195.2L643.5 200.8L636.3 206.3L628.8 212.4L621.3 218.9L613.3 226.3L606.9 232.6L598.8 241L592.4 248.2L586 255.8L579.6 263.8L573.2 272.3L566.8 281.2L555.6 297.8L544.4 315.9L533.2 335.4L522 356.2L509.2 381.6L496.3 408.4L480 443.9L501 423.6L514 411.3L524.4 402.1L532.8 395.4L541.3 389.7L545.5 387.3L549.5 385.3L557.6 381.9L561.5 380.7L566.9 379.2L571.8 378.2L578 377.2L590.1 375.9L604 375.2L621.2 375.2L641.3 375.7L665.9 376.9L696.7 378.7Z" fill="#00cfff"/>
<path d="M703 374L842 383.6L835.7 338.1L830.5 303.8L825.3 273.3L820.5 248.9L815.3 226.2L812.7 216.4L810.1 207.5L807.5 199.4L804.4 191.1L801.8 184.8L798.8 178.4L794 178.3L792 177.4L772.7 177.2L770.7 176.4L759.5 176.6L757.5 175.9L749.5 176.2L747.4 175.7L741 176.1L739 175.6L734.2 176L732.1 175.6L728.9 176L726.9 175.6L723.7 176.1L721.7 175.8L720.1 176.1L718 175.9L716.4 176.2L714.4 176L712.8 176.4L710.8 176.3L709.1 176.7L705.1 176.7L703.5 177.1L697.4 177.7L693.3 178.3L687.2 179.6L686.8 179.5L682.7 180.7L682.3 180.6L680.2 181.3L679.8 181.3L674.9 182.9L672.8 183.8L672 184L669.1 185.2L661.9 188.6L657.7 191.1L651.6 195L644.7 200L637 205.8L629.8 211.6L622.9 217.5L616.5 223.3L610.1 229.4L603.6 235.9L597.2 242.8L590.8 250.1L584.4 257.8L578 265.9L566.8 281.2L555.6 297.8L544.4 315.9L533.2 335.4L522 356.2L510.8 378.4L497.9 405L482.6 438.2L502.2 419.2L514.8 407.3L524.7 398.5L532.8 391.9L540.4 386.5L548.2 381.9L552.8 379.6L556.6 378.1L564.3 375.5L568.4 374.4L574.4 373.1L584.5 371.6L595.8 370.7L611.4 370.2L627.1 370.3L646.7 370.9L671.7 372.1Z" fill="#00dfff"/>
<path d="M687 367.9L741.9 371.5L841.3 378.4L835.2 335.2L830 301.1L824.8 270.9L820.1 246.9L814.9 224.5L812.3 214.8L809.7 206.1L807 198.2L804.4 191.1L801.8 184.8L798.8 178.4L794 178.3L792 177.4L772.7 177.2L770.7 176.4L759.5 176.6L757.5 175.9L749.5 176.2L747.4 175.7L741 176.1L739 175.6L734.2 176L732.1 175.6L728.9 176L726.9 175.6L723.7 176.1L721.7 175.8L720.1 176.1L718 175.9L716.4 176.2L714.4 176L712.8 176.4L710.8 176.3L709.1 176.7L705.1 176.7L703.5 177.1L697.4 177.7L693.3 178.3L687.2 179.6L686.8 179.5L682.7 180.7L682.3 180.6L680.2 181.3L679.8 181.3L674.9 182.9L672.8 183.8L672 184L665.7 186.7L661.9 188.6L654.4 193.2L647.6 197.9L639.3 204L629.8 211.6L621.3 218.9L613.3 226.3L605.2 234.2L598.8 241L590.8 250.1L584.4 257.8L576.4 268L570 276.7L562 288.1L555.6 297.8L549.2 308L542.8 318.6L530 341.2L523.6 353.2L515.6 368.7L501.2 398.2L485.2 432.5L504 414.3L516.1 402.9L525.4 394.5L533.5 387.8L540.9 382.5L548.2 378L555.4 374.4L563.2 371.5L571.4 369.2L582.1 367.2L592.8 366.1L606.7 365.4L621.2 365.2L639.7 365.6L661.1 366.5Z" fill="#00efff"/>
<path d="M728.4 365.4L840.6 373.3L833.9 326.3L827.9 288L824.8 270.9L821.8 255.2L818.8 240.9L815.7 228L811.8 213.3L807.5 199.4L803.1 187.9L798.8 178.4L794 178.3L792 177.4L772.7 177.2L770.7 176.4L759.5 176.6L757.5 175.9L749.5 176.2L747.4 175.7L741 176.1L739 175.6L734.2 176L732.1 175.6L728.9 176L726.9 175.6L723.7 176.1L721.7 175.8L720.1 176.1L718 175.9L716.4 176.2L714.4 176L712.8 176.4L710.8 176.3L709.1 176.7L705.1 176.7L703.5 177.1L697.4 177.7L693.3 178.3L687.2 179.6L686.8 179.5L682.7 180.7L682.3 180.6L677.3 182.1L672.8 183.8L672 184L665.7 186.7L661.9 188.6L657.7 191.1L649.1 196.8L641.4 202.4L633.6 208.5L619.7 220.3L613.3 226.3L606.9 232.6L600.4 239.3L594 246.4L587.6 253.9L581.2 261.8L570 276.7L558.8 292.9L547.6 310.6L536.4 329.7L525.2 350.2L514 371.9L501.2 398.2L487.8 426.8L507 408.2L519.6 396.4L529.6 387.6L538 380.9L545.8 375.6L553.7 371.2L561.8 367.7L566 366.2L570.9 364.9L576 363.7L581.4 362.7L593.1 361.3L606.3 360.5L622 360.3L641.6 360.6L663.6 361.5L691.3 363.1Z" fill="#00ffff"/>
<path d="M703.9 358.8L754.9 362.1L839.9 368.1L834.4 329.2L829.2 295.8L824.4 268.6L819.6 244.8L814.9 224.5L812.3 214.8L809.7 206.1L807 198.2L804.4 191.1L801.8 184.8L798.8 178.4L794 178.3L792 177.4L772.7 177.2L770.7 176.4L759.5 176.6L757.5 175.9L749.5 176.2L747.4 175.7L741 176.1L739 175.6L734.2 176L732.1 175.6L728.9 176L726.9 175.6L723.7 176.1L721.7 175.8L720.1 176.1L718 175.9L716.4 176.2L714.4 176L712.8 176.4L710.8 176.3L709.1 176.7L705.1 176.7L703.5 177.1L697.4 177.7L693.3 178.3L687.2 179.6L686.8 179.5L682.7 180.7L682.3 180.6L680.2 181.3L679.8 181.3L674.9 182.9L672.8 183.8L672 184L669.1 185.2L661.9 188.6L657.7 191.1L651.6 195L645.6 199.3L632.3 209.5L624.5 216.1L618.1 221.8L611.7 227.8L605.2 234.2L598.8 241L592.4 248.2L581.2 261.8L570 276.7L558.8 292.9L549.2 308L538 326.9L526.8 347.1L515.6 368.7L504.4 391.5L490.4 421.2L508.8 403.4L520.9 392L530.9 383.2L539 376.7L546.8 371.2L554.6 366.7L562.5 363.2L570.3 360.6L580.2 358.3L590.3 356.8L601.6 355.8L615.9 355.3L633 355.4L652.1 356L675.9 357.1Z" fill="#10ffef"/>
<path d="M785.3 359.1L839.2 362.9L833.5 323.4L828.7 293.2L824 266.3L819.2 242.9L814.4 222.9L811.8 213.3L809.2 204.7L806.6 196.9L804 190L801.4 183.8L798.8 178.4L794 178.3L792 177.4L772.7 177.2L770.7 176.4L759.5 176.6L757.5 175.9L749.5 176.2L747.4 175.7L741 176.1L739 175.6L734.2 176L732.1 175.6L728.9 176L726.9 175.6L723.7 176.1L721.7 175.8L720.1 176.1L718 175.9L716.4 176.2L714.4 176L712.8 176.4L710.8 176.3L709.1 176.7L705.1 176.7L703.5 177.1L695.3 178L687.2 179.6L686.8 179.5L677.3 182.1L672.8 183.8L672 184L665.7 186.7L661.9 188.6L654.4 193.2L647.6 197.9L641 202.7L633.6 208.5L624.8 215.9L618.1 221.8L611.7 227.8L605.2 234.2L598.8 241L592.4 248.2L586 255.8L574.8 270.1L563.6 285.8L552.4 302.9L541.2 321.3L530 341.2L518.8 362.4L506 388.2L493 415.5L512.8 396.5L525.5 384.7L535.6 375.9L544.3 369.2L552.6 363.9L557.2 361.5L561.3 359.5L566.1 357.6L570.6 356.1L575.9 354.7L580.7 353.6L586 352.7L592.7 351.8L606 350.8L621.8 350.4L642.2 350.6L664.9 351.5L694.6 353.1Z" fill="#20ffdf"/>
<path d="M728.6 350.2L838.5 357.8L831.8 312.1L825.7 275.7L822.7 259.5L819.6 244.8L816.6 231.5L813.1 218L809.7 206.1L806.2 195.7L802.7 186.8L798.8 178.4L794 178.3L792 177.4L772.7 177.2L770.7 176.4L759.5 176.6L757.5 175.9L749.5 176.2L747.4 175.7L741 176.1L739 175.6L734.2 176L732.1 175.6L728.9 176L726.9 175.6L723.7 176.1L721.7 175.8L720.1 176.1L718 175.9L716.4 176.2L714.4 176L712.8 176.4L710.8 176.3L709.1 176.7L705.1 176.7L703.5 177.1L697.4 177.7L693.3 178.3L687.2 179.6L686.8 179.5L682.7 180.7L682.3 180.6L677.3 182.1L672.8 183.8L672 184L665.7 186.7L661.9 188.6L657.7 191.1L651.5 195.2L643.5 200.8L636.3 206.3L622.9 217.5L616.5 223.3L610.1 229.4L603.6 235.9L597.2 242.8L590.8 250.1L584.4 257.8L573.2 272.3L562 288.1L550.8 305.4L541.2 321.3L530 341.2L518.8 362.4L507.6 384.9L495.7 409.8L513.6 392.5L525.8 381.1L535.4 372.7L543.8 366.1L551.6 360.7L559.6 356.3L567.8 352.8L576.6 350L585.5 348.2L597.4 346.6L610.3 345.7L626.1 345.4L644.7 345.7L666.2 346.5L693.9 348Z" fill="#30ffcf"/>
<path d="M708.8 343.8L757.6 347L837.7 352.6L831.8 312.1L826.1 278.1L823.1 261.8L819.6 244.8L816.6 231.5L813.1 218L809.7 206.1L806.2 195.7L802.7 186.8L798.8 178.4L794 178.3L792 177.4L772.7 177.2L770.7 176.4L759.5 176.6L757.5 175.9L749.5 176.2L747.4 175.7L741 176.1L739 175.6L734.2 176L732.1 175.6L728.9 176L726.9 175.6L723.7 176.1L721.7 175.8L720.1 176.1L718 175.9L716.4 176.2L714.4 176L712.8 176.4L710.8 176.3L709.1 176.7L705.1 176.7L703.5 177.1L697.4 177.7L693.3 178.3L687.2 179.6L686.8 179.5L682.7 180.7L682.3 180.6L680.2 181.3L679.8 181.3L674.9 182.9L672.8 183.8L672 184L669.1 185.2L661.9 188.6L657.7 191.1L646.8 198.4L634.7 207.6L621.3 218.9L614.9 224.8L608.5 231L602 237.6L595.6 244.6L584.4 257.8L573.2 272.3L563.6 285.8L552.4 302.9L542.8 318.6L533.2 335.4L522 356.2L510.8 378.4L498.3 404.2L515.9 387.3L527.6 376.3L537.2 367.9L545 361.7L552.7 356.3L560.5 351.9L568.4 348.3L576.3 345.7L585.9 343.5L596.1 342L607.4 341L621.7 340.5L637 340.5L655.5 341L680.1 342.1Z" fill="#40ffbf"/>
<path d="M786.4 343.9L837 347.5L832.2 314.9L827.4 285.5L823.1 261.8L818.3 239L813.6 219.6L808.8 203.3L804 190L801.4 183.8L798.8 178.4L794 178.3L792 177.4L772.7 177.2L770.7 176.4L759.5 176.6L757.5 175.9L749.5 176.2L747.4 175.7L741 176.1L739 175.6L734.2 176L732.1 175.6L728.9 176L726.9 175.6L723.7 176.1L721.7 175.8L720.1 176.1L718 175.9L716.4 176.2L714.4 176L712.8 176.4L710.8 176.3L709.1 176.7L705.1 176.7L703.5 177.1L695.3 178L687.2 179.6L686.8 179.5L677.3 182.1L672.8 183.8L672 184L665.7 186.7L657.7 191.1L651.5 195.2L643.5 200.8L636.3 206.3L628.8 212.4L621.3 218.9L614.9 224.8L608.5 231L602 237.6L595.6 244.6L589.2 252L578 265.9L566.8 281.2L555.6 297.8L546 313.2L534.8 332.5L523.6 353.2L512.4 375.1L501 398.5L519.5 380.8L532.2 369L542 360.6L550.8 353.9L555.2 351.1L559.3 348.6L563.9 346.2L568.2 344.3L573.3 342.4L577.2 341.1L586.7 338.8L592.7 337.8L598.6 337L611.7 335.9L627.6 335.5L648 335.8L669.5 336.6L698.8 338.1Z" fill="#50ffaf"/>
<path d="M738.1 335.5L836.3 342.3L832.6 317.7L829.2 295.8L825.7 275.7L822.2 257.4L818.8 240.9L815.3 226.2L811.8 213.3L808.3 202L803.6 188.9L801.4 183.8L798.8 178.4L794 178.3L792 177.4L772.7 177.2L770.7 176.4L759.5 176.6L757.5 175.9L749.5 176.2L747.4 175.7L741 176.1L739 175.6L734.2 176L732.1 175.6L728.9 176L726.9 175.6L723.7 176.1L721.7 175.8L720.1 176.1L718 175.9L716.4 176.2L714.4 176L712.8 176.4L710.8 176.3L709.1 176.7L705.1 176.7L703.5 177.1L695.3 178L687.2 179.6L686.8 179.5L677.3 182.1L672.8 183.8L672 184L665.7 186.7L657.7 191.1L651.6 195L644.7 200L637.8 205.2L629.9 211.5L622.9 217.5L616.5 223.3L610.1 229.4L603.6 235.9L597.2 242.8L590.8 250.1L579.6 263.8L568.4 278.9L557.2 295.4L547.6 310.6L538 326.9L526.8 347.1L515.6 368.7L503.7 392.8L521.3 375.9L533.1 365L542.8 356.6L550.9 350.4L559 345L566.5 341L574.8 337.6L583.6 335L593.7 333L605 331.6L617.8 330.8L633.6 330.6L652.1 330.9L675.3 331.8L702.9 333.3Z" fill="#60ff9f"/>
<path d="M719.5 329.3L835.5 337.2L830 301.1L824.4 268.6L819.2 242.9L816.6 231.5L813.6 219.6L810.1 207.5L806.2 195.7L802.7 186.8L798.8 178.4L794 178.3L792 177.4L772.7 177.2L770.7 176.4L759.5 176.6L757.5 175.9L749.5 176.2L747.4 175.7L741 176.1L739 175.6L734.2 176L732.1 175.6L728.9 176L726.9 175.6L723.7 176.1L721.7 175.8L720.1 176.1L718 175.9L716.4 176.2L714.4 176L712.8 176.4L710.8 176.3L709.1 176.7L705.1 176.7L703.5 177.1L697.4 177.7L693.3 178.3L687.2 179.6L686.8 179.5L682.7 180.7L682.3 180.6L680.2 181.3L679.8 181.3L674.9 182.9L672.8 183.8L672 184L665.7 186.7L661.9 188.6L657.7 191.1L651.5 195.2L644.7 200L637.8 205.2L624.5 216.1L613.3 226.3L606.9 232.6L600.4 239.3L589.2 252L578 265.9L568.4 278.9L557.2 295.4L547.6 310.6L538 326.9L526.8 347.1L517.2 365.6L506.5 387.2L523.2 371.1L534.5 360.6L544.2 352.2L552.2 346L560.1 340.6L567.4 336.6L575.7 333.1L583.9 330.5L593.7 328.4L604.2 327L616.7 326L630.6 325.7L647.9 325.8L666.1 326.4L690.8 327.6Z" fill="#70ff8f"/>
<path d="M708.8 323.6L756.2 326.6L834.8 332.1L831.3 309.3L827.9 288L824.4 268.6L821.4 253.1L816.2 229.7L813.6 219.6L810.5 208.9L807.9 200.7L804.9 192.2L801.8 184.8L798.8 178.4L794 178.3L792 177.4L772.7 177.2L770.7 176.4L759.5 176.6L757.5 175.9L749.5 176.2L747.4 175.7L741 176.1L739 175.6L734.2 176L732.1 175.6L728.9 176L726.9 175.6L723.7 176.1L721.7 175.8L720.1 176.1L718 175.9L716.4 176.2L714.4 176L712.8 176.4L710.8 176.3L709.1 176.7L705.1 176.7L703.5 177.1L697.4 177.7L693.3 178.3L687.2 179.6L686.8 179.5L682.7 180.7L682.3 180.6L680.2 181.3L679.8 181.3L674.9 182.9L672.8 183.8L672 184L665.7 186.7L661.9 188.6L657.7 191.1L651.6 195L639.3 204L632.3 209.5L624.8 215.9L613.3 226.3L602 237.6L590.8 250.1L579.6 263.8L570 276.7L560.4 290.5L550.8 305.4L541.2 321.3L530 341.2L520.4 359.3L509.2 381.5L525.1 366.3L536.4 355.8L545.6 347.8L553.5 341.6L561.3 336.2L568.5 332.2L576.4 328.7L584.3 326L593.2 323.9L603.2 322.4L614.4 321.4L628.1 320.8L641.9 320.7L660.4 321.2L683.5 322.1Z" fill="#80ff80"/>
<path d="M764.6 322.1L834 327L829.6 298.4L825.3 273.3L821.4 253.1L817 233.4L812.7 216.4L808.3 202L803.6 188.9L801.4 183.8L798.8 178.4L794 178.3L792 177.4L772.7 177.2L770.7 176.4L759.5 176.6L757.5 175.9L749.5 176.2L747.4 175.7L741 176.1L739 175.6L734.2 176L732.1 175.6L728.9 176L726.9 175.6L723.7 176.1L721.7 175.8L720.1 176.1L718 175.9L716.4 176.2L714.4 176L712.8 176.4L710.8 176.3L709.1 176.7L705.1 176.7L703.5 177.1L695.3 178L687.2 179.6L686.8 179.5L677.3 182.1L672.8 183.8L672 184L665.7 186.7L657.7 191.1L647.6 197.9L641 202.7L633.6 208.5L619.7 220.3L613.3 226.3L606.9 232.6L595.6 244.6L584.4 257.8L574.8 270.1L563.6 285.8L554 300.3L544.4 315.9L533.2 335.4L522 356.2L512 375.9L528.8 359.8L540.7 348.8L550.6 340.5L558.9 334.3L563 331.5L567.4 329L575.4 325L583.7 322L593.2 319.5L598.8 318.4L604.7 317.6L616.3 316.5L630.6 315.9L647.8 315.9L667.8 316.4L692.4 317.6L723.2 319.4Z" fill="#8fff70"/>
<path d="M741.6 315.5L833.3 321.8L829.6 298.4L826.1 278.1L822.7 259.5L818.8 240.9L815.3 226.2L811.4 211.8L807.5 199.4L803.6 188.9L801.4 183.8L798.8 178.4L794 178.3L792 177.4L772.7 177.2L770.7 176.4L759.5 176.6L757.5 175.9L749.5 176.2L747.4 175.7L741 176.1L739 175.6L734.2 176L732.1 175.6L728.9 176L726.9 175.6L723.7 176.1L721.7 175.8L720.1 176.1L718 175.9L716.4 176.2L714.4 176L712.8 176.4L710.8 176.3L709.1 176.7L705.1 176.7L703.5 177.1L695.3 178L687.2 179.6L686.8 179.5L677.3 182.1L672.8 183.8L672 184L665.7 186.7L657.7 191.1L649.1 196.8L641.4 202.4L634.9 207.5L621.3 218.9L614.9 224.8L608.5 231L597.2 242.8L586 255.8L576.4 268L565.2 283.5L555.6 297.8L546 313.2L534.8 332.5L525.2 350.2L514.8 370.2L530.7 355L542.2 344.5L551.5 336.5L559.6 330.3L567.9 325L575.5 321L583.2 317.9L592 315.3L602.1 313.3L613.1 312L626 311.2L641.7 310.9L658.6 311.2L681.8 312L707.9 313.4Z" fill="#9fff60"/>
<path d="M729.6 309.7L832.5 316.7L829.2 295.8L825.7 275.7L822.7 259.5L819.2 242.9L816.2 229.7L812.7 216.4L809.2 204.7L805.7 194.5L802.3 185.8L798.8 178.4L794 178.3L792 177.4L772.7 177.2L770.7 176.4L759.5 176.6L757.5 175.9L749.5 176.2L747.4 175.7L741 176.1L739 175.6L734.2 176L732.1 175.6L728.9 176L726.9 175.6L723.7 176.1L721.7 175.8L720.1 176.1L718 175.9L716.4 176.2L714.4 176L712.8 176.4L710.8 176.3L709.1 176.7L705.1 176.7L703.5 177.1L697.4 177.7L693.3 178.3L687.2 179.6L686.8 179.5L682.7 180.7L682.3 180.6L677.3 182.1L672.8 183.8L672 184L665.7 186.7L661.9 188.6L654 193.5L643.5 200.8L631.1 210.5L618.1 221.8L606.9 232.6L595.6 244.6L586 255.8L576.4 268L566.8 281.2L557.2 295.4L547.6 310.6L538 326.9L528.4 344.2L517.7 364.5L533.2 349.8L544.2 339.7L552.9 332.1L561 325.9L569.1 320.6L576.7 316.5L584.1 313.4L593 310.7L601.9 308.8L612.9 307.3L625.5 306.4L639.5 306L656 306.2L675.4 306.8L700.6 308Z" fill="#afff50"/>
<path d="M722.4 304.3L765.9 307.1L831.7 311.7L825.7 275.7L822.7 259.5L819.6 244.8L816.6 231.5L813.6 219.6L810.5 208.9L807 198.2L803.1 187.9L798.8 178.4L794 178.3L792 177.4L772.7 177.2L770.7 176.4L759.5 176.6L757.5 175.9L749.5 176.2L747.4 175.7L741 176.1L739 175.6L734.2 176L732.1 175.6L728.9 176L726.9 175.6L723.7 176.1L721.7 175.8L720.1 176.1L718 175.9L716.4 176.2L714.4 176L712.8 176.4L710.8 176.3L709.1 176.7L705.1 176.7L703.5 177.1L695.3 178L687.2 179.6L686.8 179.5L682.7 180.7L682.3 180.6L680.2 181.3L679.8 181.3L674.9 182.9L672.8 183.8L672 184L665.7 186.7L661.9 188.6L657.7 191.1L653.4 193.9L641.4 202.4L628.8 212.4L616.5 223.3L605.2 234.2L595.6 244.6L586 255.8L576.4 268L566.8 281.2L557.2 295.4L549.2 308L539.6 324.1L530 341.2L520.6 358.9L535.2 345L546.2 334.8L555 327.3L563.1 321.1L570.5 316.2L577.8 312.1L586.1 308.6L594.3 306.1L603.8 304L614.2 302.5L625.5 301.7L639.7 301.2L655.1 301.2L673.5 301.7L696.5 302.8Z" fill="#bfff40"/>
<path d="M820.4 305.8L830.9 306.6L827.9 288L824.4 268.6L820.9 251L817.5 235.2L814 221.2L810.5 208.9L806.6 196.9L802.7 186.8L798.8 178.4L794 178.3L792 177.4L772.7 177.2L770.7 176.4L759.5 176.6L757.5 175.9L749.5 176.2L747.4 175.7L741 176.1L739 175.6L734.2 176L732.1 175.6L728.9 176L726.9 175.6L723.7 176.1L721.7 175.8L720.1 176.1L718 175.9L716.4 176.2L714.4 176L712.8 176.4L710.8 176.3L709.1 176.7L705.1 176.7L703.5 177.1L695.3 178L687.2 179.6L686.8 179.5L677.3 182.1L672.8 183.8L672 184L665.7 186.7L657.7 191.1L651.6 195L645.6 199.3L632.3 209.5L619.7 220.3L613.3 226.3L606.9 232.6L595.6 244.6L586 255.8L574.8 270.1L565.2 283.5L554 300.3L544.4 315.9L534.8 332.5L523.5 353.2L540 337.6L551.6 327.1L561.2 319.2L569.9 313L573.9 310.5L578.6 308L583.3 305.8L587.1 304.2L591.3 302.7L596.3 301.2L602.2 299.9L607.6 298.9L614 298L620.5 297.3L635.1 296.5L650.7 296.3L670.9 296.7L695.6 297.8L724.8 299.4Z" fill="#cfff30"/>
<path d="M785 298.4L830.1 301.5L826.6 280.5L822.7 259.5L818.8 240.9L814.9 224.5L811 210.3L807 198.2L803.1 187.9L798.8 178.4L794 178.3L792 177.4L772.7 177.2L770.7 176.4L759.5 176.6L757.5 175.9L749.5 176.2L747.4 175.7L741 176.1L739 175.6L734.2 176L732.1 175.6L728.9 176L726.9 175.6L723.7 176.1L721.7 175.8L720.1 176.1L718 175.9L716.4 176.2L714.4 176L712.8 176.4L710.8 176.3L709.1 176.7L705.1 176.7L703.5 177.1L695.3 178L687.2 179.6L686.8 179.5L677.3 182.1L669.1 185.2L661.9 188.6L657.7 191.1L651.6 195L639.3 204L625.7 215L614.9 224.8L603.6 235.9L594 246.4L584.4 257.8L574.8 270.1L565.2 283.5L555.6 297.8L546 313.2L536.4 329.7L526.5 347.6L542.1 332.8L553.2 322.7L562.3 315.2L570.8 309L578.9 304.1L582.8 302.1L587.6 300L592.3 298.3L597.1 296.8L605.9 294.7L617.2 293L628.5 292L643.7 291.5L661.6 291.6L681.6 292.2L707.8 293.4L740.2 295.4Z" fill="#dfff20"/>
<path d="M771.8 292.5L829.3 296.5L825.7 275.7L821.8 255.2L818.3 239L814.4 222.9L810.5 208.9L806.6 196.9L802.7 186.8L798.8 178.4L794 178.3L792 177.4L772.7 177.2L770.7 176.4L759.5 176.6L757.5 175.9L749.5 176.2L747.4 175.7L741 176.1L739 175.6L734.2 176L732.1 175.6L728.9 176L726.9 175.6L723.7 176.1L721.7 175.8L720.1 176.1L718 175.9L716.4 176.2L714.4 176L712.8 176.4L710.8 176.3L709.1 176.7L705.1 176.7L703.5 177.1L695.3 178L687.2 179.6L686.8 179.5L677.3 182.1L669.1 185.2L661.9 188.6L657.7 191.1L653.4 193.9L641 202.7L627.8 213.3L616.5 223.3L605.2 234.2L595.6 244.6L586 255.8L576.4 268L566.8 281.2L557.2 295.4L547.6 310.6L538 326.9L529.6 342L544.2 328L555.4 317.9L565 310L573 304.2L581 299.3L584.9 297.3L589.4 295.4L598.1 292.3L607.3 290L618 288.3L630.9 287.2L643.4 286.7L660.6 286.7L680.7 287.2L703.6 288.3L732.9 290Z" fill="#efff10"/>
<path d="M766 287.1L828.4 291.4L824.8 270.9L821.4 253.1L817.9 237.1L814 221.2L810.5 208.9L806.6 196.9L802.7 186.8L798.8 178.4L794 178.3L792 177.4L772.7 177.2L770.7 176.4L759.5 176.6L757.5 175.9L749.5 176.2L747.4 175.7L741 176.1L739 175.6L734.2 176L732.1 175.6L728.9 176L726.9 175.6L723.7 176.1L721.7 175.8L720.1 176.1L718 175.9L716.4 176.2L714.4 176L712.8 176.4L710.8 176.3L709.1 176.7L705.1 176.7L703.5 177.1L695.3 178L687.2 179.6L686.8 179.5L677.3 182.1L669.1 185.2L661.9 188.6L653.5 193.7L641.4 202.4L628.8 212.4L618.1 221.8L606.9 232.6L597.2 242.8L587.6 253.9L578 265.9L568.4 278.9L558.8 292.9L550.8 305.4L541.2 321.3L532.7 336.3L547.4 322.4L558.1 312.7L567.2 305.2L575.2 299.4L583.3 294.5L590.6 291L598.9 287.9L608.6 285.5L620 283.6L631.1 282.5L645.8 281.9L661.3 281.8L681.4 282.4L702.7 283.3L730.4 284.8Z" fill="#ffff00"/>
<path d="M764.7 282.1L827.6 286.4L824 266.3L820.5 248.9L817 233.4L813.6 219.6L810.1 207.5L806.2 195.7L802.7 186.8L798.8 178.4L794 178.3L792 177.4L772.7 177.2L770.7 176.4L759.5 176.6L757.5 175.9L749.5 176.2L747.4 175.7L741 176.1L739 175.6L734.2 176L732.1 175.6L728.9 176L726.9 175.6L723.7 176.1L721.7 175.8L720.1 176.1L718 175.9L716.4 176.2L714.4 176L712.8 176.4L710.8 176.3L709.1 176.7L705.1 176.7L703.5 177.1L695.3 178L687.2 179.6L686.8 179.5L677.3 182.1L669.1 185.2L661.9 188.6L654 193.5L642.8 201.4L631.1 210.5L619.7 220.3L608.5 231L598.8 241L589.2 252L579.6 263.8L571.6 274.5L562 288.1L554 300.3L544.4 315.9L535.8 330.7L549.6 317.6L560.4 307.9L569.5 300.4L577.5 294.6L585 290.1L592.9 286.2L601.2 283.2L610.8 280.7L620.4 279L633.3 277.7L646.3 277.1L663.6 277.1L682.1 277.5L703.5 278.4L731.1 279.9Z" fill="#ffef00"/>
<path d="M766.9 277.3L826.7 281.4L823.5 264L820.1 246.9L816.6 231.5L813.1 218L809.7 206.1L806.2 195.7L802.7 186.8L798.8 178.4L794 178.3L792 177.4L772.7 177.2L770.7 176.4L759.5 176.6L757.5 175.9L749.5 176.2L747.4 175.7L741 176.1L739 175.6L734.2 176L732.1 175.6L728.9 176L726.9 175.6L723.7 176.1L721.7 175.8L720.1 176.1L718 175.9L716.4 176.2L714.4 176L712.8 176.4L710.8 176.3L709.1 176.7L705.1 176.7L703.5 177.1L695.3 178L687.2 179.6L686.8 179.5L677.3 182.1L669.1 185.2L661.9 188.6L654.4 193.2L643.5 200.8L632.3 209.5L621.3 218.9L610.1 229.4L600.4 239.3L590.8 250.1L581.2 261.8L573.2 272.3L563.6 285.8L555.6 297.8L547.6 310.6L539 325.1L552.9 312L563.2 302.7L571.8 295.6L579.8 289.8L587.9 285L595.3 281.4L603.6 278.4L613.2 275.9L624.7 274L635.7 273L650.4 272.3L665.9 272.3L684.4 272.7L705.8 273.6L733.4 275.2Z" fill="#ffdf00"/>
<path d="M773 272.8L825.8 276.4L822.7 259.5L819.2 242.9L816.2 229.7L812.7 216.4L809.2 204.7L805.7 194.5L802.3 185.8L798.8 178.4L794 178.3L792 177.4L772.7 177.2L770.7 176.4L759.5 176.6L757.5 175.9L749.5 176.2L747.4 175.7L741 176.1L739 175.6L734.2 176L732.1 175.6L728.9 176L726.9 175.6L723.7 176.1L721.7 175.8L720.1 176.1L718 175.9L716.4 176.2L714.4 176L712.8 176.4L710.8 176.3L709.1 176.7L705.1 176.7L703.5 177.1L695.3 178L687.2 179.6L686.8 179.5L677.3 182.1L669.1 185.2L661.9 188.6L654.4 193.2L643.5 200.8L632.3 209.5L621.3 218.9L611.7 227.8L602 237.6L594 246.4L584.4 257.8L576.4 268L566.8 281.2L558.8 292.9L550.8 305.4L542.3 319.4L555.7 306.8L566.1 297.5L574.8 290.4L582.9 284.7L591.1 279.8L598.7 276.3L607.5 273.2L616.7 270.9L627.3 269.2L640.2 268.1L652.7 267.6L670 267.5L688.4 268L709.7 268.9L737.4 270.5Z" fill="#ffcf00"/>
<path d="M784.1 268.6L824.9 271.4L821.8 255.2L818.8 240.9L815.7 228L812.3 214.8L809.2 204.7L805.7 194.5L802.3 185.8L798.8 178.4L794 178.3L792 177.4L772.7 177.2L770.7 176.4L759.5 176.6L757.5 175.9L749.5 176.2L747.4 175.7L741 176.1L739 175.6L734.2 176L732.1 175.6L728.9 176L726.9 175.6L723.7 176.1L721.7 175.8L720.1 176.1L718 175.9L716.4 176.2L714.4 176L712.8 176.4L710.8 176.3L709.1 176.7L705.1 176.7L703.5 177.1L695.3 178L687.2 179.6L686.8 179.5L677.3 182.1L669.1 185.2L661.9 188.6L654.9 192.9L644.7 200L633.6 208.5L622.9 217.5L613.3 226.3L603.6 235.9L595.6 244.6L586 255.8L578 265.9L570 276.7L562 288.1L554 300.3L545.6 313.8L559.1 301.2L569 292.3L577.8 285.3L586 279.5L593.6 275L597.6 273L602.2 271.1L606.3 269.6L611.1 268.1L620 266L630 264.5L642.5 263.3L656.8 262.8L673.9 262.8L694 263.4L716.9 264.5L746.1 266.1Z" fill="#ffbf00"/>
<path d="M804.9 265.1L824 266.5L820.9 251L817.9 237.1L814.9 224.5L811.8 213.3L808.8 203.3L805.3 193.4L802.3 185.8L798.8 178.4L794 178.3L792 177.4L772.7 177.2L770.7 176.4L759.5 176.6L757.5 175.9L749.5 176.2L747.4 175.7L741 176.1L739 175.6L734.2 176L732.1 175.6L728.9 176L726.9 175.6L723.7 176.1L721.7 175.8L720.1 176.1L718 175.9L716.4 176.2L714.4 176L712.8 176.4L710.8 176.3L709.1 176.7L705.1 176.7L703.5 177.1L697.4 177.7L693.3 178.3L687.2 179.6L686.8 179.5L677.3 182.1L669.1 185.2L661.9 188.6L653.5 193.7L642.8 201.4L631.1 210.5L619.7 220.3L610.1 229.4L600.4 239.3L590.8 250.1L582.8 259.8L573.2 272.3L565.2 283.5L557.2 295.4L549.1 308.2L562.6 295.6L573.1 286.3L582 279.2L589.8 273.9L594 271.5L598.6 269.1L606.6 265.7L615.1 263L625.3 260.8L637.2 259.2L650.2 258.4L664.2 258L682.3 258.2L702.8 258.9L729 260.3Z" fill="#ffaf00"/>
<path d="M743 256.2L823.1 261.5L820.1 246.9L817.5 235.2L814.4 222.9L811.4 211.8L808.3 202L805.3 193.4L802.3 185.8L798.8 178.4L794 178.3L792 177.4L772.7 177.2L770.7 176.4L759.5 176.6L757.5 175.9L749.5 176.2L747.4 175.7L741 176.1L739 175.6L734.2 176L732.1 175.6L728.9 176L726.9 175.6L723.7 176.1L721.7 175.8L720.1 176.1L718 175.9L716.4 176.2L714.4 176L712.8 176.4L710.8 176.3L709.1 176.7L705.1 176.7L703.5 177.1L695.3 178L687.2 179.6L686.8 179.5L682.7 180.7L682.3 180.6L680.2 181.3L679.8 181.3L674.9 182.9L672.8 183.8L672 184L665.7 186.7L657.7 191.1L647.6 197.9L637.8 205.2L627.8 213.3L618.1 221.8L608.5 231L600.4 239.3L592.4 248.2L584.4 257.8L576.4 268L568.4 278.9L560.4 290.5L552.6 302.6L564.3 291.6L573.7 283.2L581.9 276.6L589.3 271.2L596.6 266.7L603.8 263.1L611.3 260.2L619.3 257.9L627.5 256.2L638.3 254.7L648.8 253.9L663 253.4L677.7 253.4L695.2 253.9L718.2 254.9Z" fill="#ff9f00"/>
<path d="M755.8 252.2L822.1 256.6L819.2 242.9L816.6 231.5L814 221.2L811 210.3L807.9 200.7L804.9 192.2L801.8 184.8L798.8 178.4L794 178.3L792 177.4L772.7 177.2L770.7 176.4L759.5 176.6L757.5 175.9L749.5 176.2L747.4 175.7L741 176.1L739 175.6L734.2 176L732.1 175.6L728.9 176L726.9 175.6L723.7 176.1L721.7 175.8L720.1 176.1L718 175.9L716.4 176.2L714.4 176L712.8 176.4L710.8 176.3L709.1 176.7L705.1 176.7L703.5 177.1L695.3 178L687.2 179.6L686.8 179.5L682.7 180.7L682.3 180.6L680.2 181.3L679.8 181.3L674.9 182.9L672.8 183.8L672 184L665.7 186.7L657.7 191.1L649.1 196.8L639.3 204L629.8 211.6L619.7 220.3L611.7 227.8L603.6 235.9L595.6 244.6L587.6 253.9L579.6 263.8L571.6 274.5L563.6 285.8L556.1 297L567.9 286L577.4 277.6L585.6 271.1L593.3 265.6L600.2 261.6L607.7 257.9L615.8 255L623.8 252.8L633.7 250.9L644.4 249.7L656.4 249L670.4 248.7L687.4 248.9L705.7 249.5L728.6 250.6Z" fill="#ff8f00"/>
<path d="M775.9 248.7L821.1 251.7L815.7 228L813.1 218L810.5 208.9L807.9 200.7L804.9 192.2L801.8 184.8L798.8 178.4L794 178.3L792 177.4L772.7 177.2L770.7 176.4L759.5 176.6L757.5 175.9L749.5 176.2L747.4 175.7L741 176.1L739 175.6L734.2 176L732.1 175.6L728.9 176L726.9 175.6L723.7 176.1L721.7 175.8L720.1 176.1L718 175.9L716.4 176.2L714.4 176L712.8 176.4L710.8 176.3L709.1 176.7L705.1 176.7L703.5 177.1L695.3 178L687.2 179.6L686.8 179.5L682.7 180.7L682.3 180.6L680.2 181.3L679.8 181.3L674.9 182.9L672.8 183.8L672 184L665.7 186.7L657.7 191.1L649.5 196.5L641 202.7L631.1 210.5L621.3 218.9L613.3 226.3L605.2 234.2L597.2 242.8L589.2 252L581.2 261.8L574.8 270.1L566.8 281.2L559.8 291.4L571.6 280.4L581.2 272.1L589.1 265.8L596.8 260.5L604.6 256L612.4 252.5L620.4 249.8L629.5 247.5L639.8 245.9L649.4 244.9L662.4 244.2L677.7 244.1L694.6 244.4L717.7 245.3L743.8 246.7Z" fill="#ff8000"/>
<path d="M818.2 246.7L820.1 246.9L816.2 229.7L812.3 214.8L809.2 204.7L805.7 194.5L802.3 185.8L798.8 178.4L794 178.3L792 177.4L772.7 177.2L770.7 176.4L759.5 176.6L757.5 175.9L749.5 176.2L747.4 175.7L741 176.1L739 175.6L734.2 176L732.1 175.6L728.9 176L726.9 175.6L723.7 176.1L721.7 175.8L720.1 176.1L718 175.9L716.4 176.2L714.4 176L712.8 176.4L710.8 176.3L709.1 176.7L705.1 176.7L703.5 177.1L695.3 178L687.2 179.6L686.8 179.5L682.7 180.7L682.3 180.6L680.2 181.3L679.8 181.3L674.9 182.9L672.8 183.8L672 184L665.7 186.7L657.7 191.1L651.5 195.2L641.4 202.4L631.1 210.5L621.3 218.9L613.3 226.3L603.6 235.9L595.6 244.6L587.6 253.9L579.6 263.8L571.6 274.5L563.6 285.8L575.9 274.4L585.7 266.1L594.3 259.4L602.5 254.1L610 250.1L618.6 246.6L627.2 244.1L637.8 241.9L649.6 240.5L662.4 239.8L677.8 239.5L696.8 239.8L716.6 240.5L742.7 241.9Z" fill="#ff7000"/>
<path d="M765.5 238.5L819 242L814 221.2L809.2 204.7L806.6 196.9L804 190L801.4 183.8L798.8 178.4L794 178.3L792 177.4L772.7 177.2L770.7 176.4L759.5 176.6L757.5 175.9L749.5 176.2L747.4 175.7L741 176.1L739 175.6L734.2 176L732.1 175.6L728.9 176L726.9 175.6L723.7 176.1L721.7 175.8L720.1 176.1L718 175.9L716.4 176.2L714.4 176L712.8 176.4L710.8 176.3L709.1 176.7L705.1 176.7L703.5 177.1L695.3 178L687.2 179.6L686.8 179.5L682.7 180.7L682.3 180.6L680.2 181.3L679.8 181.3L674.9 182.9L672.8 183.8L672 184L665.7 186.7L658.2 190.8L651.6 195L643.5 200.8L634.9 207.5L627.1 213.9L619.7 220.3L611.7 227.8L603.6 235.9L597.2 242.8L589.2 252L582.8 259.8L574.8 270.1L567.5 280.2L578.4 270.1L587.7 262.2L595.6 255.9L602.9 251L610 247L617.7 243.4L625.3 240.8L633.7 238.7L642.9 237L653.5 235.9L666.3 235.2L680.3 234.9L695.5 235.1L715.5 235.8L738.4 236.9Z" fill="#ff6000"/>
<path d="M804.9 236.4L817.9 237.2L813.6 219.6L808.8 203.3L804 190L801.4 183.8L798.8 178.4L794 178.3L792 177.4L772.7 177.2L770.7 176.4L759.5 176.6L757.5 175.9L749.5 176.2L747.4 175.7L741 176.1L739 175.6L734.2 176L732.1 175.6L728.9 176L726.9 175.6L723.7 176.1L721.7 175.8L720.1 176.1L718 175.9L716.4 176.2L714.4 176L712.8 176.4L710.8 176.3L709.1 176.7L705.1 176.7L703.5 177.1L695.3 178L687.2 179.6L686.8 179.5L682.7 180.7L682.3 180.6L680.2 181.3L679.8 181.3L674.9 182.9L672.8 183.8L672 184L665.7 186.7L661.9 188.6L654 193.5L645.6 199.3L637.8 205.2L628.8 212.4L619.7 220.3L611.7 227.8L603.6 235.9L595.6 244.6L587.6 253.9L579.6 263.8L571.5 274.7L583 264.1L592.2 256.3L600.5 250L608.1 245L615.7 241L624.2 237.6L633 235L642.7 233L653.6 231.6L664.7 230.8L678.9 230.4L695.9 230.5L715.9 231.2L738.9 232.2Z" fill="#ff5000"/>
<path d="M772.5 229.6L816.8 232.5L812.3 214.8L807.9 200.7L803.6 188.9L801.4 183.8L798.8 178.4L794 178.3L792 177.4L772.7 177.2L770.7 176.4L759.5 176.6L757.5 175.9L749.5 176.2L747.4 175.7L741 176.1L739 175.6L734.2 176L732.1 175.6L728.9 176L726.9 175.6L723.7 176.1L721.7 175.8L720.1 176.1L718 175.9L716.4 176.2L714.4 176L712.8 176.4L710.8 176.3L709.1 176.7L705.1 176.7L703.5 177.1L695.3 178L687.2 179.6L686.8 179.5L682.7 180.7L682.3 180.6L680.2 181.3L679.8 181.3L674.9 182.9L672.8 183.8L672 184L665.7 186.7L661.9 188.6L657.7 191.1L649.1 196.8L641.4 202.4L633.6 208.5L624.8 215.9L618.1 221.8L610.1 229.4L603.6 235.9L595.6 244.6L589.2 252L582.8 259.8L575.6 269.1L586.2 259.4L595.1 251.9L602.7 246.1L610.1 241.2L617.4 237.1L624.6 234L632.5 231.4L641.3 229.3L651.1 227.7L661.9 226.7L673.9 226.1L687.8 225.9L703 226.1L722.9 226.8Z" fill="#ff4000"/>
<path d="M759.3 224.1L815.7 227.7L811.8 213.3L807.5 199.4L803.1 187.9L798.8 178.4L794 178.3L792 177.4L772.7 177.2L770.7 176.4L759.5 176.6L757.5 175.9L749.5 176.2L747.4 175.7L741 176.1L739 175.6L734.2 176L732.1 175.6L728.9 176L726.9 175.6L723.7 176.1L721.7 175.8L720.1 176.1L718 175.9L716.4 176.2L714.4 176L712.8 176.4L710.8 176.3L709.1 176.7L705.1 176.7L703.5 177.1L695.3 178L687.2 179.6L686.8 179.5L682.7 180.7L682.3 180.6L680.2 181.3L679.8 181.3L674.9 182.9L672.8 183.8L672 184L665.7 186.7L661.9 188.6L657.7 191.1L651.5 195.2L644.7 200L637 205.8L628.8 212.4L621.3 218.9L613.3 226.3L606.9 232.6L598.8 241L592.4 248.2L586 255.8L579.8 263.5L590 254.3L598.5 247.2L606.1 241.4L612.9 236.9L620.2 232.8L627.3 229.7L635.1 227.1L642.1 225.3L651.2 223.7L660.9 222.6L672.2 221.8L684.2 221.5L698.3 221.5L715.1 222L736.5 222.9Z" fill="#ff3000"/>
<path d="M802.1 222.2L814.5 223L811 210.3L807 198.2L803.1 187.9L798.8 178.4L794 178.3L792 177.4L772.7 177.2L770.7 176.4L759.5 176.6L757.5 175.9L749.5 176.2L747.4 175.7L741 176.1L739 175.6L734.2 176L732.1 175.6L728.9 176L726.9 175.6L723.7 176.1L721.7 175.8L720.1 176.1L718 175.9L716.4 176.2L714.4 176L712.8 176.4L710.8 176.3L709.1 176.7L705.1 176.7L703.5 177.1L695.3 178L687.2 179.6L686.8 179.5L682.7 180.7L682.3 180.6L680.2 181.3L679.8 181.3L674.9 182.9L672.8 183.8L672 184L669.1 185.2L661.9 188.6L657.7 191.1L646.8 198.4L637.8 205.2L629.8 211.6L621.3 218.9L613.3 226.3L605.2 234.2L598.8 241L590.8 250.1L584.2 258L595 248.3L603.6 241.2L611.5 235.4L618.7 231L626.5 227L634.4 223.9L642.4 221.6L651.8 219.7L663 218.3L674.1 217.5L688.3 217.1L702 217.2L720.4 217.6L741.7 218.6Z" fill="#ff2000"/>
<path d="M790.7 216.9L813.2 218.4L809.7 206.1L806.2 195.7L802.7 186.8L798.8 178.4L794 178.3L792 177.4L772.7 177.2L770.7 176.4L759.5 176.6L757.5 175.9L749.5 176.2L747.4 175.7L741 176.1L739 175.6L734.2 176L732.1 175.6L728.9 176L726.9 175.6L723.7 176.1L721.7 175.8L720.1 176.1L718 175.9L716.4 176.2L714.4 176L712.8 176.4L710.8 176.3L709.1 176.7L705.1 176.7L703.5 177.1L697.4 177.7L693.3 178.3L687.2 179.6L686.8 179.5L682.7 180.7L682.3 180.6L680.2 181.3L679.8 181.3L674.9 182.9L672.8 183.8L672 184L669.1 185.2L661.9 188.6L657.7 191.1L647.6 197.9L639.3 204L632.3 209.5L624.5 216.1L616.5 223.3L608.5 231L602 237.6L595.6 244.6L588.8 252.5L598.7 243.6L606.8 237L614.3 231.4L621.8 226.7L628.8 223.1L636.3 220.1L643.8 217.7L652.9 215.7L662.8 214.3L674.1 213.3L686.6 212.8L702.2 212.8L719 213.1L738.8 213.9Z" fill="#ff1000"/>
<path d="M788.7 212.3L812 213.8L808.8 203.3L805.7 194.5L802.3 185.8L798.8 178.4L794 178.3L792 177.4L772.7 177.2L770.7 176.4L759.5 176.6L757.5 175.9L749.5 176.2L747.4 175.7L741 176.1L739 175.6L734.2 176L732.1 175.6L728.9 176L726.9 175.6L723.7 176.1L721.7 175.8L720.1 176.1L718 175.9L716.4 176.2L714.4 176L712.8 176.4L710.8 176.3L709.1 176.7L705.1 176.7L703.5 177.1L697.4 177.7L693.3 178.3L687.2 179.6L686.8 179.5L682.7 180.7L682.3 180.6L677.3 182.1L672.8 183.8L672 184L665.7 186.7L661.9 188.6L657.7 191.1L651.5 195.2L643.5 200.8L636.3 206.3L627.8 213.3L619.7 220.3L613.3 226.3L606.9 232.6L600.4 239.3L593.5 246.9L603 238.5L610.6 232.3L618 226.9L625.2 222.4L632.1 218.8L639.9 215.7L647.4 213.4L656.3 211.5L666.4 210L675.8 209.1L688.4 208.6L703.1 208.5L719.2 208.8L739 209.5Z" fill="#ff0000"/>
<path d="M793.4 208.1L810.6 209.2L807.9 200.7L804.9 192.2L801.8 184.8L798.8 178.4L794 178.3L792 177.4L772.7 177.2L770.7 176.4L759.5 176.6L757.5 175.9L749.5 176.2L747.4 175.7L741 176.1L739 175.6L734.2 176L732.1 175.6L728.9 176L726.9 175.6L723.7 176.1L721.7 175.8L720.1 176.1L718 175.9L716.4 176.2L714.4 176L712.8 176.4L710.8 176.3L709.1 176.7L705.1 176.7L703.5 177.1L697.4 177.7L693.3 178.3L687.2 179.6L686.8 179.5L682.7 180.7L682.3 180.6L677.3 182.1L672.8 183.8L672 184L665.7 186.7L661.9 188.6L653.5 193.7L646.8 198.4L639.3 204L632.3 209.5L624.5 216.1L618.1 221.8L611.7 227.8L605.2 234.2L598.5 241.4L608 233L615.8 226.8L623.4 221.4L630.2 217.4L637.4 213.8L644.4 211.1L653.2 208.6L661.6 206.9L671.8 205.6L682.2 204.7L694.9 204.3L709.2 204.2L726 204.6L744.2 205.3Z" fill="#ef0000"/>
<path d="M806.3 204.5L809.2 204.7L806.6 196.9L804 190L801.4 183.8L798.8 178.4L794 178.3L792 177.4L772.7 177.2L770.7 176.4L759.5 176.6L757.5 175.9L749.5 176.2L747.4 175.7L741 176.1L739 175.6L734.2 176L732.1 175.6L728.9 176L726.9 175.6L723.7 176.1L721.7 175.8L720.1 176.1L718 175.9L716.4 176.2L714.4 176L712.8 176.4L710.8 176.3L709.1 176.7L705.1 176.7L703.5 177.1L695.3 178L687.2 179.6L686.8 179.5L677.3 182.1L672.8 183.8L672 184L665.7 186.7L657.7 191.1L651.6 195L644.7 200L637 205.8L629.8 211.6L622.9 217.5L616.5 223.3L610.1 229.4L603.6 236L612.8 228L620.7 221.7L628.4 216.4L635.5 212.4L643.1 208.8L650.6 206.2L658.7 204L667.2 202.4L677 201.2L688.2 200.5L700.6 200.1L716 200.1L732.8 200.6L752.5 201.4Z" fill="#df0000"/>
<path d="M776.2 198.4L807.8 200.3L803.6 188.9L801.4 183.8L798.8 178.4L794 178.3L792 177.4L772.7 177.2L770.7 176.4L759.5 176.6L757.5 175.9L749.5 176.2L747.4 175.7L741 176.1L739 175.6L734.2 176L732.1 175.6L728.9 176L726.9 175.6L723.7 176.1L721.7 175.8L720.1 176.1L718 175.9L716.4 176.2L714.4 176L712.8 176.4L710.8 176.3L709.1 176.7L705.1 176.7L703.5 177.1L695.3 178L687.2 179.6L686.8 179.5L677.3 182.1L669.1 185.2L661.9 188.6L654 193.5L642.8 201.4L631.1 210.5L619.7 220.3L609 230.5L617.2 223.4L624.7 217.5L631.2 213L638 208.9L644.5 205.8L651.3 203.1L658.6 200.9L666.3 199.2L674.5 197.9L684.6 196.8L695.2 196.2L707.4 196L721.1 196L737 196.5Z" fill="#cf0000"/>
<path d="M796.9 195.3L806.3 195.9L802.7 186.8L798.8 178.4L794 178.3L792 177.4L772.7 177.2L770.7 176.4L759.5 176.6L757.5 175.9L749.5 176.2L747.4 175.7L741 176.1L739 175.6L734.2 176L732.1 175.6L728.9 176L726.9 175.6L723.7 176.1L721.7 175.8L720.1 176.1L718 175.9L716.4 176.2L714.4 176L712.8 176.4L710.8 176.3L709.1 176.7L705.1 176.7L703.5 177.1L695.3 178L687.2 179.6L686.8 179.5L677.3 182.1L672.8 183.8L672 184L665.7 186.7L657.7 191.1L647.6 197.9L636.3 206.3L624.5 216.1L614.6 225L623 217.9L630 212.5L636.7 208L643.9 204L650.7 200.8L657.8 198.3L665 196.3L673.6 194.6L683.5 193.3L693.3 192.5L705.7 192L719.2 192L734.4 192.3L752.6 192.9Z" fill="#bf0000"/>
<path d="M784.9 190.4L804.7 191.6L801.8 184.8L798.8 178.4L794 178.3L792 177.4L772.7 177.2L770.7 176.4L759.5 176.6L757.5 175.9L749.5 176.2L747.4 175.7L741 176.1L739 175.6L734.2 176L732.1 175.6L728.9 176L726.9 175.6L723.7 176.1L721.7 175.8L720.1 176.1L718 175.9L716.4 176.2L714.4 176L712.8 176.4L710.8 176.3L709.1 176.7L705.1 176.7L703.5 177.1L697.4 177.7L693.3 178.3L687.2 179.6L686.8 179.5L677.3 182.1L669.1 185.2L661.9 188.6L653.5 193.7L642.8 201.4L632.3 209.5L620.5 219.6L628 213.3L635.2 207.9L641.3 203.8L647.7 200.2L654.5 197L661.8 194.4L668.3 192.6L676.4 190.9L684.8 189.7L694.2 188.8L705 188.2L717.3 188L730.9 188.1L745.5 188.5Z" fill="#af0000"/>
<path d="M782.5 186.2L803 187.4L798.8 178.4L794 178.3L792 177.4L772.7 177.2L770.7 176.4L759.5 176.6L757.5 175.9L749.5 176.2L747.4 175.7L741 176.1L739 175.6L734.2 176L732.1 175.6L728.9 176L726.9 175.6L723.7 176.1L721.7 175.8L720.1 176.1L718 175.9L716.4 176.2L714.4 176L712.8 176.4L710.8 176.3L709.1 176.7L705.1 176.7L703.5 177.1L697.4 177.7L693.3 178.3L687.2 179.6L686.8 179.5L677.3 182.1L669.1 185.2L661.9 188.6L654.4 193.2L647.6 197.9L639.3 204L629.8 211.6L636.6 206.3L643 201.7L649 198.1L655.2 194.9L661.6 192.2L668 190L675 188.2L682.3 186.8L689.5 185.8L699 184.9L709.8 184.4L720.3 184.2L732.3 184.3L747.2 184.6Z" fill="#9f0000"/>
<path d="M786.6 182.5L801.2 183.3L798.8 178.4L794 178.3L792 177.4L772.7 177.2L770.7 176.4L759.5 176.6L757.5 175.9L749.5 176.2L747.4 175.7L741 176.1L739 175.6L734.2 176L732.1 175.6L728.9 176L726.9 175.6L723.7 176.1L721.7 175.8L720.1 176.1L718 175.9L716.4 176.2L714.4 176L712.8 176.4L710.8 176.3L709.1 176.7L705.1 176.7L703.5 177.1L697.4 177.7L693.3 178.3L687.2 179.6L686.8 179.5L682.7 180.7L682.3 180.6L677.3 182.1L669.1 185.2L661.9 188.6L657.7 191.1L649.5 196.5L641.2 202.6L647.1 198.4L652.9 194.8L658.4 191.9L664.3 189.2L670.6 186.9L677 185.1L683.2 183.7L690.2 182.6L698.4 181.6L707.3 181L718.1 180.6L728.5 180.5L753.7 181Z" fill="#8f0000"/>
<path d="M797.7 179.2L799.3 179.3L798.8 178.4L794 178.3L792 177.4L772.7 177.2L770.7 176.4L759.5 176.6L757.5 175.9L749.5 176.2L747.4 175.7L741 176.1L739 175.6L734.2 176L732.1 175.6L728.9 176L726.9 175.6L723.7 176.1L721.7 175.8L720.1 176.1L718 175.9L716.4 176.2L714.4 176L712.8 176.4L710.8 176.3L709.1 176.7L705.1 176.7L703.5 177.1L695.3 178L687.2 179.6L686.8 179.5L677.3 182.1L672.8 183.8L672 184L665.7 186.7L657.7 191.1L651.1 195.4L656.6 191.9L662.5 188.7L667.6 186.3L673.5 184L679.5 182.2L686.3 180.5L692.7 179.4L700.6 178.3L708.2 177.7L717.5 177.1L726.9 176.9L738.2 176.9L764.9 177.6Z" fill="#800000"/>
</g>
<g opacity="0.70" shape-rendering="crispEdges">
<path d="M792.2 177.4L798.5 177.8L765.4 210L643.3 201.3L649.8 196.3L655.9 192.2L661.8 188.7L667.6 185.8L673.2 183.5L679.9 181.2L686.7 179.5L693.8 178.1L701.2 177.1L710.7 176.2L721.5 175.7L732.1 175.5L744 175.6L758 175.9Z" fill="#800000"/>
</g>
<!--TRAJ_OVER-->
</g>
<path d="M339.5 577.5 V179 M339.4 577 L765.4 607.3 M765.4 607.3 L880.8 494.8 M339.4 577 l-7 7.200 M378.8 579.8 l-7 7.200 M419.4 582.7 l-7 7.200 M460 585.6 l-7 7.200 M500.6 588.5 l-7 7.200 M541.2 591.4 l-7 7.200 M581.8 594.2 l-7 7.200 M622.4 597.1 l-7 7.200 M663 600 l-7 7.200 M703.6 602.9 l-7 7.200 M744.2 605.8 l-7 7.200 M875.8 499.7 l10.300 1.100 M848.3 526.4 l10.300 1.100 M820.9 553.2 l10.300 1.100 M793.5 580 l10.300 1.100 M766 606.7 l10.300 1.100 M339.5 577.5 h-11 M339.5 532.5 h-11 M339.5 488.5 h-11 M339.5 444.5 h-11 M339.5 400.5 h-11 M339.5 356.5 h-11 M339.5 312.5 h-11 M339.5 267.5 h-11 M339.5 223.5 h-11 M339.5 179.5 h-11" fill="none" stroke="#262626" stroke-width="1"/>
<g clip-path="url(#cp)"><g font-size="13.3" fill="#303030"><text x="327.8" y="603" text-anchor="end">0.4</text><text x="367.2" y="605.8" text-anchor="end">0.6</text><text x="407.8" y="608.7" text-anchor="end">0.8</text><text x="448.4" y="611.6" text-anchor="end">1</text><text x="489" y="614.5" text-anchor="end">1.2</text><text x="529.6" y="617.4" text-anchor="end">1.4</text><text x="570.2" y="620.2" text-anchor="end">1.6</text><text x="610.8" y="623.1" text-anchor="end">1.8</text><text x="651.4" y="626" text-anchor="end">2</text><text x="692" y="628.9" text-anchor="end">2.2</text><text x="732.6" y="631.8" text-anchor="end">2.4</text><text x="890.8" y="515.7">0.5</text><text x="863.3" y="542.4">1</text><text x="835.9" y="569.2">1.5</text><text x="808.5" y="596">2</text><text x="781" y="622.7">2.5</text><text x="323.2" y="582.8" text-anchor="end">-110</text><text x="323.2" y="538.7" text-anchor="end">-100</text><text x="323.2" y="494.5" text-anchor="end">-90</text><text x="323.2" y="450.4" text-anchor="end">-80</text><text x="323.2" y="406.2" text-anchor="end">-70</text><text x="323.2" y="362.1" text-anchor="end">-60</text><text x="323.2" y="317.9" text-anchor="end">-50</text><text x="323.2" y="273.8" text-anchor="end">-40</text><text x="323.2" y="229.6" text-anchor="end">-30</text><text x="323.2" y="185.5" text-anchor="end">-20</text></g>
<text x="896" y="646" text-anchor="end" font-family="Liberation Serif, serif" font-size="15.5" fill="#333" letter-spacing="0.28">A-B bond distance (Å)</text>
<text transform="translate(289,474) rotate(-90)" font-family="Liberation Serif, serif" font-size="15.5" fill="#333" letter-spacing="0.4">Potential Energy (Kcal/mol)</text>
</g>
</svg>
<svg class="abs" style="left:0;top:26px" width="904" height="25" viewBox="0 26 904 25">
<defs>
<linearGradient id="gpage" x1="0" y1="0" x2="1" y2="1"><stop offset="0" stop-color="#ffffff"/><stop offset="1" stop-color="#cfe0f7"/></linearGradient>
<linearGradient id="gfold" x1="0" y1="0" x2="0" y2="1"><stop offset="0" stop-color="#fff3a8"/><stop offset="1" stop-color="#f0c545"/></linearGradient>
<linearGradient id="gcb" x1="0" y1="0" x2="0" y2="1"><stop offset="0" stop-color="#5f8fe8"/><stop offset="0.35" stop-color="#8fe0e0"/><stop offset="0.65" stop-color="#f5f09a"/><stop offset="1" stop-color="#f08a8a"/></linearGradient>
<radialGradient id="glens" cx="0.4" cy="0.35" r="0.7"><stop offset="0" stop-color="#ffffff"/><stop offset="1" stop-color="#b9d7f5"/></radialGradient>
</defs>
<!-- new -->
<path d="M13.500 30.500h8l4 4v9.500h-12z" fill="url(#gpage)" stroke="#5a6fb0" stroke-width="1"/>
<path d="M21.500 30.500v4h4" fill="#dfe9fa" stroke="#5a6fb0" stroke-width="1"/>
<path d="M14 44.500h12v-9" fill="none" stroke="#7c86b8" stroke-width="1" opacity=".6"/>
<circle cx="13" cy="32.500" r="2.200" fill="#f2b02c"/>
<path d="M13 28.800v7.400M9.300 32.500h7.400M10.400 29.900l5.200 5.200M15.600 29.900l-5.200 5.200" stroke="#e0552a" stroke-width="1"/>
<circle cx="13" cy="32.500" r="1.500" fill="#f7d038"/>
<!-- open -->
<path d="M33.500 43.500v-10q0-1 1-1h3.500l1.500 1.500h6q1 0 1 1v2" fill="#f3d365" stroke="#b88a14" stroke-width="1"/>
<path d="M33.500 43.500l2.500-7h12l-2.500 7z" fill="url(#gfold)" stroke="#b88a14" stroke-width="1" stroke-linejoin="round"/>
<path d="M40.500 31.500q3.500-3.500 6.500-.5" fill="none" stroke="#3a64a8" stroke-width="1.300"/>
<path d="M48.500 29v4h-4z" fill="#3a64a8"/>
<!-- save -->
<path d="M57.500 30.500h13.500v13.500h-12l-1.500-1.500z" fill="#5b5fd0" stroke="#2c2f8a" stroke-width="1"/>
<rect x="60" y="31" width="8.500" height="6" fill="#e9edfb"/>
<rect x="61" y="39" width="7" height="4.500" fill="#2b2b55"/>
<rect x="62" y="40" width="2.200" height="3" fill="#dcdcf0"/>
<path d="M71.500 31v13.500h-13" fill="none" stroke="#7a7a9c" stroke-width="1" opacity=".6"/>
<!-- print -->
<path d="M83.500 34.500l1.500-5.500h6l1.500 5.500z" fill="#cfe6f7" stroke="#7f9bb8" stroke-width=".8"/>
<path d="M80.500 38q0-3.500 3-3.500h7q3 0 3 3.500v3.500h-13z" fill="#c9c9c9" stroke="#6e6e6e" stroke-width="1"/>
<path d="M81.500 41.500h11l-1 3h-9z" fill="#f4f4f4" stroke="#6e6e6e" stroke-width="1"/>
<path d="M81 38.500h12" stroke="#8a8a8a" stroke-width="1"/>
<circle cx="91.500" cy="40" r=".8" fill="#3fae3f"/>
<!-- sep -->
<path d="M102.500 28v20" stroke="#a0a0a0"/><path d="M103.500 28v20" stroke="#fff"/>
<!-- cursor -->
<path d="M115.500 30.500v12l3-2.800l2 4.500l2-1l-2-4.300h4z" fill="#fff" stroke="#000" stroke-width="1" stroke-linejoin="miter"/>
<path d="M133.500 28v20" stroke="#a0a0a0"/><path d="M134.500 28v20" stroke="#fff"/>
<!-- zoom in -->
<path d="M150 38l6.200 5.600" stroke="#d98a1e" stroke-width="2.600" stroke-linecap="round"/>
<path d="M150 38l6.200 5.600" stroke="#f7c66a" stroke-width="1" stroke-linecap="round"/>
<circle cx="146.500" cy="34.500" r="4.700" fill="url(#glens)" stroke="#7a9ac8" stroke-width="1.200"/>
<path d="M144 34.500h5M146.500 32v5" stroke="#2455b5" stroke-width="1.400"/>
<!-- zoom out -->
<path d="M173.400 38l6.200 5.600" stroke="#d98a1e" stroke-width="2.600" stroke-linecap="round"/>
<path d="M173.400 38l6.200 5.600" stroke="#f7c66a" stroke-width="1" stroke-linecap="round"/>
<circle cx="169.900" cy="34.500" r="4.700" fill="url(#glens)" stroke="#7a9ac8" stroke-width="1.200"/>
<path d="M167.400 34.500h5" stroke="#2455b5" stroke-width="1.400"/>
<!-- pan hand -->
<g transform="translate(195.300 0) scale(1.220 1) translate(-194.500 0)">
<path d="M190.500 44.500c-1-2.500-3-4.500-3-6c0-1.200 1.500-1.200 2.300 0l1 1.500v-7c0-1.300 1.900-1.300 1.900 0v-2c0-1.300 2-1.300 2 0v1.300c0-1.300 2-1.300 2 0v1.500c0-1.200 1.900-1.200 1.900 0v6c0 2-1 3-1.500 4.700z" fill="#fdf3ea" stroke="#4a6fb3" stroke-width=".9" stroke-linejoin="round"/>
<path d="M192.700 33v4M194.700 32v5M196.700 33v4" stroke="#4a6fb3" stroke-width=".7"/>
</g>
<!-- rotate (pressed) -->
<rect x="207.500" y="27.500" width="22" height="20" rx="2.500" fill="#dcdcdc" stroke="#6a6a6a"/>
<rect x="208.500" y="28.500" width="20" height="18" rx="2" fill="none" stroke="#c2c2c2"/>
<path d="M213.200 32.200a7 7 0 1 1 -1.500 6.500" fill="none" stroke="#2f5597" stroke-width="2"/>
<path d="M210.200 33.200l5.300-.3l-2.500-4z" fill="#2f5597"/>
<path d="M215.500 35.500l3.500-1.500l3.500 1.500v4l-3.500 1.700l-3.500-1.700z" fill="#f4f7fc" stroke="#3b5f9e" stroke-width=".9" stroke-linejoin="round"/>
<path d="M215.500 35.500l3.500 1.500l3.500-1.500M219 37v4.200" fill="none" stroke="#3b5f9e" stroke-width=".9"/>
<!-- data cursor -->
<path d="M232.500 31q3 9 6 9.500t8 4" fill="none" stroke="#2030d0" stroke-width="1" stroke-dasharray="2.500 1.500"/>
<rect x="239.500" y="29.500" width="9" height="9.500" fill="#f7f2b0" stroke="#b0a450" stroke-width="1"/>
<path d="M241 32h6M241 34h6M241 36h6" stroke="#9a9a6a" stroke-width=".9"/>
<path d="M234.500 40.500h7.500M238.200 36.800v7.500" stroke="#000" stroke-width="1.700"/>
<!-- brush -->
<path d="M272.500 29.500l-7.500 9" stroke="#3f63b5" stroke-width="2.600" stroke-linecap="round"/>
<path d="M272.200 29.500l-7 8.500" stroke="#9fc0f0" stroke-width=".9" stroke-linecap="round"/>
<path d="M265.800 37.300l1.800 1.600c-1.500 3.200-4.800 5.200-9 5.400c2.800-1.500 3.500-5.500 7.200-7z" fill="#3a3a3a"/>
<rect x="266.500" y="39" width="5.500" height="5.500" fill="#f01818"/>
<path d="M279.500 36.500h6l-3 3.200z" fill="#000"/>
<path d="M291.500 28v20" stroke="#a0a0a0"/><path d="M292.500 28v20" stroke="#fff"/>
<!-- link -->
<rect x="302.500" y="29.500" width="11" height="8.500" fill="#fff" stroke="#3b5fa0" stroke-width="1.200"/>
<rect x="299.500" y="32" width="11" height="8.500" fill="#fff" stroke="#3b5fa0" stroke-width="1.200"/>
<path d="M299.500 32.800h11" stroke="#3b5fa0" stroke-width="1.600"/>
<rect x="300.500" y="40" width="7.500" height="4" rx="2" fill="none" stroke="#3b5fa0" stroke-width="1.400"/>
<rect x="306.500" y="40" width="7.500" height="4" rx="2" fill="none" stroke="#3b5fa0" stroke-width="1.400"/>
<path d="M304.500 42h5.500" stroke="#1f2f60" stroke-width="1.300"/>
<path d="M322.500 28v20" stroke="#a0a0a0"/><path d="M323.500 28v20" stroke="#fff"/>
<!-- colorbar -->
<rect x="333.500" y="29" width="9" height="14.500" fill="url(#gcb)" stroke="#27408a" stroke-width="1.200"/>
<path d="M343.500 30v14.500h-9" fill="none" stroke="#8a8a9a" stroke-width="1" opacity=".6"/>
<!-- legend -->
<rect x="353.500" y="29" width="14.500" height="14.500" fill="#fff" stroke="#27408a" stroke-width="1.200"/>
<rect x="355.500" y="31.500" width="4" height="3.600" fill="#e8505a"/><rect x="355.500" y="37.500" width="4" height="3.600" fill="#5a5ae8"/>
<path d="M361.500 33.300h4.500M361.500 39.300h4.500" stroke="#000" stroke-width="1.200"/>
<path d="M376.500 28v20" stroke="#a0a0a0"/><path d="M377.500 28v20" stroke="#fff"/>
<!-- hide plot tools -->
<rect x="388.500" y="33.500" width="10" height="10" fill="#b4b4b4"/>
<rect x="387.500" y="32.500" width="10" height="10" fill="#8e8e8e" stroke="#7a7a7a" stroke-width="1"/>
<!-- show plot tools -->
<rect x="407.700" y="30.600" width="14" height="13" fill="#fff" stroke="#27408a" stroke-width="1.400"/>
<path d="M407.700 31.600h14M407.700 42.200h14" stroke="#27408a" stroke-width="2.200"/>
<path d="M408.600 31v12.500M420.800 31v12.500" stroke="#27408a" stroke-width="2"/>
<path d="M409 42.500h12" stroke="#cfd8ee" stroke-width=".8" stroke-dasharray="1 1"/>
<!-- far right arrow -->
<path d="M886.600 36.200l4.200 4.200M887.800 41h3.500v-3.500" fill="none" stroke="#000" stroke-width="1.400"/>
<path d="M885.500 36h2" stroke="#000" stroke-width="1"/>
</svg>

<!-- Atom Types -->
<div class="panel" style="left:32px;top:71px;width:124px;height:166px"><div class="ptitle" style="left:29px">Atom Types</div></div>
<div class="lbl" style="left:54px;top:89px;width:80px">Atom A</div>
<div class="combo" style="left:47px;top:105px;width:99px">hydrogen<i></i></div>
<div class="lbl" style="left:55px;top:139px;width:80px">Atom B</div>
<div class="combo" style="left:45px;top:155px;width:99px">hydrogen<i></i></div>
<div class="lbl" style="left:53.500px;top:190px;width:80px">Atom C</div>
<div class="combo" style="left:46px;top:203px;width:99px">hydrogen<i></i></div>
<!-- Update button -->
<div class="abs" style="left:168px;top:69px;width:103px;height:51px;box-sizing:border-box;border:1px solid #707070;border-radius:3px;background:linear-gradient(#f2f2f2 0%,#ebebeb 49%,#dddddd 50%,#cfcfcf 100%);box-shadow:inset 0 0 0 1px #fcfcfc;text-align:center;line-height:51px">Update</div>
<!-- Delta Value -->
<div class="panel" style="left:168px;top:134px;width:106px;height:40px"><div class="ptitle" style="top:-5px;left:4px">Delta Value</div></div>
<div class="edit" style="left:178px;top:143px;width:89px;height:24px;line-height:23px">0.424</div>
<!-- Calculation Type -->
<div class="abs" style="left:169px;top:181px;width:106px;height:58px;background:#fafafa"></div>
<div class="panel" style="left:169px;top:188px;width:105px;height:50px;box-shadow:1px 1px 0 #fff"><div class="ptitle" style="left:4.500px;background:#fafafa">Calculation Type</div></div>
<div class="abs" style="left:179px;top:216px;width:66px;height:14px;background:#f0f0f0"></div>
<svg class="abs" style="left:179px;top:198px" width="16" height="34">
 <circle cx="7" cy="8" r="5.500" fill="#e9eef3" stroke="#5d6b7c"/><circle cx="7" cy="8" r="3.200" fill="#1f5f9c"/><circle cx="6.200" cy="7" r="1.300" fill="#8fd0f0"/>
 <circle cx="7" cy="26.300" r="5.500" fill="#ececec" stroke="#8a8f96"/><circle cx="7" cy="26.300" r="3.500" fill="#dcdcdc"/>
</svg>
<div class="lbl" style="left:197px;top:199.500px;text-align:left">Dynamics</div>
<div class="lbl" style="left:197px;top:218px;text-align:left">MEP</div>
<!-- Steps -->
<div class="panel" style="left:33px;top:255px;width:121px;height:36px"><div class="ptitle" style="top:-7px;left:4.500px">Steps</div></div>
<div class="edit" style="left:48px;top:262px;width:90px;height:19px;line-height:18px">300</div>
<!-- Cutoff -->
<div class="panel" style="left:168px;top:255px;width:108px;height:36px"><div class="ptitle" style="top:-7px;left:4.500px">Cutoff (Kcal/ mol)</div></div>
<div class="edit" style="left:183px;top:262px;width:83px;height:22px;line-height:21px">-20</div>
<!-- Collision Angle -->
<div class="panel" style="left:31px;top:304px;width:246px;height:41px"><div class="ptitle" style="top:-7px;left:5px">Collision Angle</div></div>
<div class="abs" style="left:43px;top:311px;width:230px;height:20px;background:#e4e4e4"></div>
<div class="abs" style="left:43px;top:311px;width:15px;height:20px;box-sizing:border-box;background:#f0f0f0;border-right:1px solid #6d6d6d;border-bottom:1px solid #6d6d6d;border-top:1px solid #fff;border-left:1px solid #fff"></div>
<div class="abs" style="left:240px;top:311px;width:17px;height:20px;box-sizing:border-box;background:#f0f0f0;border-right:1px solid #6d6d6d;border-bottom:1px solid #6d6d6d;border-top:1px solid #fff;border-left:1px solid #fff"></div>
<div class="abs" style="left:257px;top:311px;width:16px;height:20px;box-sizing:border-box;background:#f0f0f0;border-right:1px solid #6d6d6d;border-bottom:1px solid #6d6d6d;border-top:1px solid #fff;border-left:1px solid #fff"></div>
<svg class="abs" style="left:43px;top:311px" width="231" height="21"><path d="M9.500 6 v6 l-3 -3z" fill="#404040"/><path d="M220 6 v6 l3 -3z" fill="#404040"/></svg>
<!-- Initial Conditions -->
<div class="panel" style="left:30px;top:365px;width:249px;height:108px"><div class="ptitle" style="top:-7px;left:83.500px">Initial Conditions</div></div>
<div class="lbl" style="left:42.500px;top:373px;width:100px">AB Distance (A)</div>
<div class="lbl" style="left:168px;top:373px;width:100px">AB Momentum</div>
<div class="edit" style="left:42px;top:392px;width:101px;height:19px;line-height:18px">2.30</div>
<div class="edit" style="left:165px;top:392px;width:101px;height:19px;line-height:18px">-2.70</div>
<div class="lbl" style="left:41px;top:423px;width:100px">BC Distance (A)</div>
<div class="lbl" style="left:165.500px;top:423px;width:100px">BC Momentum</div>
<div class="edit" style="left:41px;top:441px;width:101px;height:20px;line-height:19px">0.74</div>
<div class="edit" style="left:165px;top:441px;width:101px;height:20px;line-height:19px">0</div>
<!-- Listbox -->
<div id="list" class="abs" style="left:30px;top:487px;width:246px;height:130px;box-sizing:border-box;border:1px solid #828790;background:#fff;overflow:hidden">
 <div style="margin-top:0.500px">Contour Plot</div>
 <div style="background:#a3a3a3;width:226px">Surface Plot</div>
 <div>Internuclear Distances vs Time</div>
 <div>Potential Energy vs Time</div>
 <div>Kinetic Energy vs Time</div>
 <div style="width:226px;overflow:hidden">Internuclear Velocities vs Internuclear Distance</div>
 <div style="width:226px;overflow:hidden">Internuclear Accelerations vs Internuclear Distance</div>
 <div>Internuclear Momenta vs Internuclear Distance</div>
 <!-- vertical scrollbar -->
 <div class="abs" style="left:228px;top:0;width:16px;height:113px;background:#ececec"></div>
 <div class="abs" style="left:229px;top:18px;width:14px;height:48px;box-sizing:border-box;border:1px solid #979797;border-radius:2px;background:linear-gradient(90deg,#f4f4f4,#e6e6e6 50%,#d4d4d4)"></div>
 <svg class="abs" style="left:228px;top:0" width="17" height="113"><path d="M4.500 11 l4 -4 l4 4z" fill="#404040"/><path d="M4.500 100.500 l4 4 l4 -4z" fill="#404040"/><path d="M5 39.500h7M5 41.500h7M5 43.500h7" stroke="#606060" stroke-width="1"/></svg>
 <!-- horizontal scrollbar -->
 <div class="abs" style="left:0;top:112px;width:244px;height:16px;background:#ececec"></div>
 <div class="abs" style="left:18px;top:113px;width:174px;height:14px;box-sizing:border-box;border:1px solid #979797;border-radius:2px;background:linear-gradient(#f4f4f4,#e6e6e6 50%,#d4d4d4)"></div>
 <svg class="abs" style="left:0;top:112px" width="244" height="16"><path d="M10.500 3.500 l-4 4 l4 4z" fill="#404040"/><path d="M216.500 3.500 l4 4 l-4 4z" fill="#404040"/><path d="M102.500 4.500v6M104.500 4.500v6M106.500 4.500v6" stroke="#606060" stroke-width="1"/></svg>
</div>


</div>
</div>
</body>
</html>
